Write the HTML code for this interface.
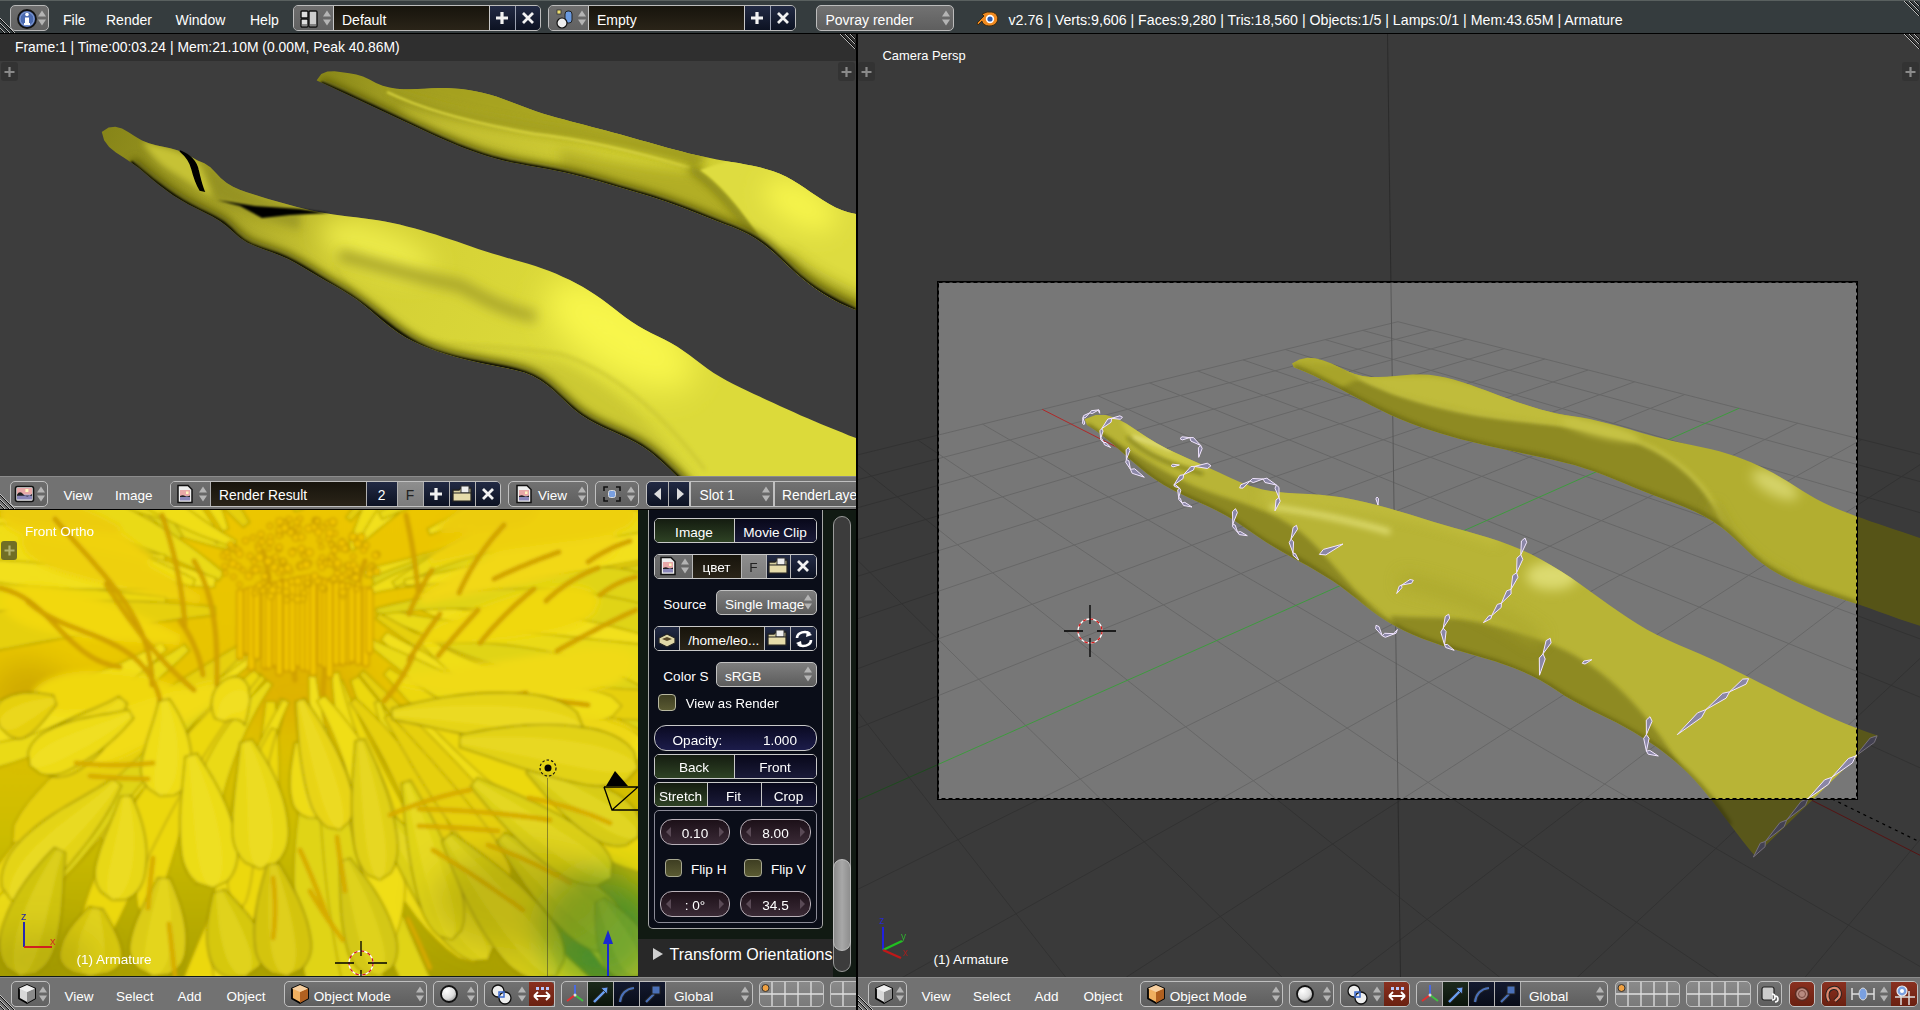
<!DOCTYPE html><html><head><meta charset="utf-8"><style>
*{margin:0;padding:0;box-sizing:border-box}
html,body{width:1920px;height:1010px;overflow:hidden;background:#000;font-family:"Liberation Sans",sans-serif;color:#fff}
.a{position:absolute}
.t{position:absolute;white-space:pre;font-size:14px;line-height:16px;color:#fff}
svg{position:absolute;left:0;top:0}
</style></head><body>
<div class="a" style="left:0;top:0;width:1920px;height:33px;background:#353c3e;border-top:1px solid #59605f"></div>
<div class="a" style="left:0;top:34px;width:856px;height:27px;background:#2f2f2f"></div>
<div class="a" style="left:0;top:61px;width:856px;height:415px;background:#3d3d3d"></div>
<div class="a" style="left:0;top:476px;width:856px;height:33px;background:#727272;border-top:1px solid #8c8c8c"></div>
<div class="a" style="left:0;top:510px;width:856px;height:467px;background:#111a14"></div>
<div class="a" style="left:0;top:977px;width:856px;height:33px;background:#727272;border-top:1px solid #8c8c8c"></div>
<div class="a" style="left:858px;top:34px;width:1062px;height:943px;background:#393939"></div>
<div class="a" style="left:858px;top:977px;width:1062px;height:33px;background:#727272;border-top:1px solid #8c8c8c"></div>
<svg width="856" height="476" viewBox="0 0 856 476" style="left:0;top:0">
<defs><filter id="b1" x="-50%" y="-50%" width="200%" height="200%"><feGaussianBlur stdDeviation="1"/></filter><filter id="b2" x="-50%" y="-50%" width="200%" height="200%"><feGaussianBlur stdDeviation="2"/></filter><filter id="b3" x="-50%" y="-50%" width="200%" height="200%"><feGaussianBlur stdDeviation="3"/></filter><filter id="b4" x="-50%" y="-50%" width="200%" height="200%"><feGaussianBlur stdDeviation="4"/></filter><filter id="b5" x="-50%" y="-50%" width="200%" height="200%"><feGaussianBlur stdDeviation="5"/></filter><filter id="b6" x="-50%" y="-50%" width="200%" height="200%"><feGaussianBlur stdDeviation="6"/></filter><filter id="b8" x="-50%" y="-50%" width="200%" height="200%"><feGaussianBlur stdDeviation="8"/></filter><filter id="b12" x="-50%" y="-50%" width="200%" height="200%"><feGaussianBlur stdDeviation="12"/></filter><filter id="b16" x="-50%" y="-50%" width="200%" height="200%"><feGaussianBlur stdDeviation="16"/></filter><filter id="b24" x="-50%" y="-50%" width="200%" height="200%"><feGaussianBlur stdDeviation="24"/></filter><clipPath id="imgclip"><rect x="0" y="61" width="856" height="415"/></clipPath><clipPath id="cA"><path d="M101.7,131.9 L108.6,127.5 L115.3,126.7 L122.0,128.6 L128.6,132.2 L135.2,136.4 L142.0,140.4 L148.9,143.3 L156.0,145.3 L163.2,146.8 L170.3,148.3 L177.3,150.2 L184.2,153.0 L190.9,156.8 L197.6,160.4 L204.4,163.2 L210.4,167.2 L215.7,172.7 L220.9,178.3 L226.7,182.9 L233.0,186.7 L239.7,189.7 L246.7,192.3 L253.9,194.5 L261.0,196.7 L268.2,198.9 L275.4,201.0 L282.6,203.1 L289.8,205.1 L297.0,206.9 L304.2,208.7 L311.5,210.4 L318.8,211.9 L326.1,213.2 L333.5,214.4 L340.8,215.4 L348.2,216.4 L355.6,217.3 L363.0,218.2 L370.4,219.2 L377.8,220.3 L385.1,221.6 L392.4,223.0 L399.7,224.6 L406.9,226.4 L414.2,228.3 L421.4,230.3 L428.5,232.4 L435.7,234.6 L442.8,236.9 L449.9,239.2 L457.0,241.6 L464.0,244.0 L471.1,246.4 L478.1,248.9 L485.2,251.2 L492.3,253.5 L499.4,255.6 L506.6,257.7 L513.8,259.7 L521.0,261.7 L528.1,263.8 L535.3,266.0 L542.3,268.4 L549.3,271.0 L556.2,273.8 L563.0,276.9 L569.8,280.1 L576.4,283.5 L582.9,287.1 L589.3,291.0 L595.5,295.0 L601.7,299.3 L607.7,303.7 L613.6,308.3 L619.6,312.9 L625.5,317.4 L631.6,321.7 L637.8,325.8 L644.3,329.5 L650.9,333.0 L657.6,336.2 L664.3,339.5 L670.9,343.0 L677.3,346.8 L683.5,350.9 L689.6,355.3 L695.5,359.8 L701.5,364.3 L707.5,368.8 L713.7,372.9 L720.0,376.8 L726.5,380.4 L733.2,383.9 L739.8,387.2 L746.6,390.5 L753.3,393.7 L760.1,396.8 L766.8,400.0 L773.6,403.1 L780.4,406.2 L787.2,409.3 L794.0,412.3 L800.8,415.4 L807.6,418.3 L814.5,421.3 L821.4,424.2 L828.3,427.0 L835.2,429.8 L842.1,432.6 L849.0,435.4 L856.0,438.0 L880.0,448.0 L880.0,500.0 L712.0,500.0 L690.0,488.0 L683.5,482.1 L677.0,476.0 L670.6,469.8 L664.2,463.7 L657.5,457.7 L650.7,452.1 L643.5,447.0 L636.0,442.5 L628.2,438.4 L620.1,434.7 L612.0,431.1 L603.9,427.4 L595.9,423.6 L588.1,419.3 L580.7,414.5 L573.7,409.0 L567.1,403.0 L560.6,396.8 L554.0,390.6 L547.3,384.9 L540.2,379.9 L532.6,375.8 L524.5,372.6 L516.0,370.2 L507.2,368.2 L498.4,366.5 L489.6,364.8 L480.9,363.0 L472.2,361.1 L463.6,359.0 L455.1,356.8 L446.7,354.3 L438.3,351.6 L430.0,348.6 L421.8,345.2 L413.7,341.5 L405.8,337.4 L398.2,332.8 L391.0,327.6 L384.1,322.1 L377.3,316.3 L370.7,310.6 L363.9,304.9 L356.9,299.6 L349.6,294.7 L342.1,290.1 L334.4,285.6 L326.7,281.2 L319.0,276.8 L311.4,272.3 L303.8,267.7 L296.1,263.3 L288.3,259.1 L280.2,255.4 L271.9,252.2 L263.4,249.2 L255.1,246.1 L247.2,242.4 L240.0,237.8 L233.4,232.1 L226.9,226.3 L219.9,221.1 L212.4,216.6 L204.5,212.5 L196.6,208.5 L188.6,204.4 L180.9,200.1 L173.4,195.4 L166.2,190.3 L159.2,184.9 L152.4,179.4 L145.7,173.7 L138.9,168.1 L131.6,162.7 L123.7,157.6 L115.9,152.5 L109.1,146.9 L104.1,140.3 L101.8,132.1 Z"/></clipPath><clipPath id="cB"><path d="M316.9,80.0 L321.3,73.9 L327.4,71.4 L334.5,71.3 L342.0,72.3 L349.3,73.2 L356.3,74.5 L363.0,76.5 L369.5,79.6 L376.0,83.0 L382.7,85.7 L389.4,87.6 L396.3,88.7 L403.4,89.3 L410.5,89.3 L417.7,89.1 L424.9,88.7 L432.2,88.3 L439.5,88.0 L446.7,88.0 L453.9,88.4 L461.1,89.0 L468.3,90.0 L475.3,91.2 L482.4,92.7 L489.3,94.5 L496.2,96.6 L503.0,98.9 L509.7,101.4 L516.4,104.0 L523.0,106.6 L529.7,109.1 L536.5,111.5 L543.3,113.7 L550.2,115.7 L557.1,117.7 L564.1,119.5 L571.0,121.4 L578.0,123.2 L584.9,125.0 L591.9,126.9 L598.8,128.7 L605.8,130.5 L612.7,132.4 L619.7,134.3 L626.6,136.2 L633.5,138.2 L640.4,140.2 L647.3,142.1 L654.2,144.1 L661.1,146.0 L668.0,147.9 L674.9,149.8 L681.9,151.6 L688.8,153.4 L695.8,155.0 L702.8,156.6 L709.9,158.1 L717.0,159.5 L724.1,160.7 L731.2,161.9 L738.3,163.1 L745.4,164.4 L752.5,165.8 L759.4,167.3 L766.3,169.2 L773.1,171.3 L779.7,173.8 L786.2,176.8 L792.5,180.2 L798.6,184.0 L804.7,188.0 L810.7,192.2 L816.8,196.3 L822.9,200.3 L829.1,204.1 L835.5,207.4 L842.0,210.3 L848.9,212.5 L856.0,214.0 L876.0,224.0 L876.0,320.0 L856.0,310.0 L847.7,306.6 L839.6,302.9 L831.8,298.7 L824.2,294.2 L816.9,289.4 L809.7,284.2 L802.8,278.7 L796.0,273.0 L789.5,267.0 L783.0,260.9 L776.5,254.8 L769.8,249.0 L763.0,243.5 L755.8,238.5 L748.2,234.1 L740.4,230.2 L732.3,226.8 L724.0,223.7 L715.7,220.5 L707.4,217.3 L699.2,214.0 L690.9,210.8 L682.7,207.6 L674.4,204.5 L666.1,201.6 L657.7,198.8 L649.3,196.1 L640.8,193.5 L632.4,191.0 L623.9,188.5 L615.4,186.0 L606.9,183.6 L598.4,181.1 L589.8,178.7 L581.3,176.5 L572.7,174.3 L564.1,172.3 L555.4,170.5 L546.7,168.8 L538.0,167.3 L529.3,165.7 L520.6,164.1 L511.9,162.4 L503.3,160.5 L494.8,158.3 L486.3,155.8 L478.0,153.0 L469.6,150.0 L461.4,146.9 L453.2,143.5 L445.0,140.0 L436.9,136.4 L428.8,132.7 L420.8,129.0 L412.8,125.3 L404.8,121.5 L396.8,117.7 L388.8,114.0 L380.8,110.2 L372.8,106.5 L364.8,102.7 L356.8,98.9 L348.8,95.2 L340.8,91.4 L332.8,87.7 L324.8,84.0 L316.8,80.4 Z"/></clipPath><linearGradient id="gA" x1="100" y1="130" x2="560" y2="330" gradientUnits="userSpaceOnUse"><stop offset="0" stop-color="#868418"/><stop offset="0.3" stop-color="#a6a226"/><stop offset="0.55" stop-color="#d2ce34"/><stop offset="1" stop-color="#dcda3a"/></linearGradient><linearGradient id="gB" x1="318" y1="80" x2="600" y2="170" gradientUnits="userSpaceOnUse"><stop offset="0" stop-color="#8a8818"/><stop offset="0.45" stop-color="#b4b02a"/><stop offset="1" stop-color="#d2d034"/></linearGradient></defs>
<g clip-path="url(#imgclip)">
<path d="M316.9,80.0 L321.3,73.9 L327.4,71.4 L334.5,71.3 L342.0,72.3 L349.3,73.2 L356.3,74.5 L363.0,76.5 L369.5,79.6 L376.0,83.0 L382.7,85.7 L389.4,87.6 L396.3,88.7 L403.4,89.3 L410.5,89.3 L417.7,89.1 L424.9,88.7 L432.2,88.3 L439.5,88.0 L446.7,88.0 L453.9,88.4 L461.1,89.0 L468.3,90.0 L475.3,91.2 L482.4,92.7 L489.3,94.5 L496.2,96.6 L503.0,98.9 L509.7,101.4 L516.4,104.0 L523.0,106.6 L529.7,109.1 L536.5,111.5 L543.3,113.7 L550.2,115.7 L557.1,117.7 L564.1,119.5 L571.0,121.4 L578.0,123.2 L584.9,125.0 L591.9,126.9 L598.8,128.7 L605.8,130.5 L612.7,132.4 L619.7,134.3 L626.6,136.2 L633.5,138.2 L640.4,140.2 L647.3,142.1 L654.2,144.1 L661.1,146.0 L668.0,147.9 L674.9,149.8 L681.9,151.6 L688.8,153.4 L695.8,155.0 L702.8,156.6 L709.9,158.1 L717.0,159.5 L724.1,160.7 L731.2,161.9 L738.3,163.1 L745.4,164.4 L752.5,165.8 L759.4,167.3 L766.3,169.2 L773.1,171.3 L779.7,173.8 L786.2,176.8 L792.5,180.2 L798.6,184.0 L804.7,188.0 L810.7,192.2 L816.8,196.3 L822.9,200.3 L829.1,204.1 L835.5,207.4 L842.0,210.3 L848.9,212.5 L856.0,214.0 L876.0,224.0 L876.0,320.0 L856.0,310.0 L847.7,306.6 L839.6,302.9 L831.8,298.7 L824.2,294.2 L816.9,289.4 L809.7,284.2 L802.8,278.7 L796.0,273.0 L789.5,267.0 L783.0,260.9 L776.5,254.8 L769.8,249.0 L763.0,243.5 L755.8,238.5 L748.2,234.1 L740.4,230.2 L732.3,226.8 L724.0,223.7 L715.7,220.5 L707.4,217.3 L699.2,214.0 L690.9,210.8 L682.7,207.6 L674.4,204.5 L666.1,201.6 L657.7,198.8 L649.3,196.1 L640.8,193.5 L632.4,191.0 L623.9,188.5 L615.4,186.0 L606.9,183.6 L598.4,181.1 L589.8,178.7 L581.3,176.5 L572.7,174.3 L564.1,172.3 L555.4,170.5 L546.7,168.8 L538.0,167.3 L529.3,165.7 L520.6,164.1 L511.9,162.4 L503.3,160.5 L494.8,158.3 L486.3,155.8 L478.0,153.0 L469.6,150.0 L461.4,146.9 L453.2,143.5 L445.0,140.0 L436.9,136.4 L428.8,132.7 L420.8,129.0 L412.8,125.3 L404.8,121.5 L396.8,117.7 L388.8,114.0 L380.8,110.2 L372.8,106.5 L364.8,102.7 L356.8,98.9 L348.8,95.2 L340.8,91.4 L332.8,87.7 L324.8,84.0 L316.8,80.4 Z" fill="url(#gB)"/>
<g clip-path="url(#cB)">
<path d="M392,89 C420,100 460,112 520,125 C600,140 650,150 700,170 L720,120 L380,60Z" fill="#a09c1e" filter="url(#b6)" opacity="0.75"/>
<path d="M392,95 C420,106 470,118 534,128 C580,134 640,145 700,160" stroke="#9a961e" stroke-width="9" fill="none" filter="url(#b4)" opacity="0.8"/>
<path d="M387,92 C420,108 472,123 534,134 C570,138 620,147 690,168" stroke="#d6d23e" stroke-width="2.5" fill="none" filter="url(#b1)"/>
<path d="M400,115 C450,130 520,145 600,155" stroke="#d0cc38" stroke-width="10" fill="none" filter="url(#b6)" opacity="0.7"/>
<path d="M560,150 C620,165 680,172 700,172 C720,186 740,210 764,244 L700,240 L560,190Z" fill="#aaa622" filter="url(#b6)" opacity="0.8"/>
<path d="M690,168 C712,182 732,204 758,240" stroke="#6e6c10" stroke-width="7" fill="none" filter="url(#b4)" opacity="0.8"/>
<path d="M700,170 C722,185 742,210 766,246 L800,300 L880,300 L880,200 L760,150Z" fill="#dedc40" filter="url(#b1)"/>
<ellipse cx="800" cy="205" rx="40" ry="20" fill="#f6f44c" filter="url(#b12)" transform="rotate(30 800 205)"/>
<path d="M775,262 C795,282 825,298 870,318" stroke="#8a8818" stroke-width="30" fill="none" filter="url(#b8)" opacity="0.9"/>
<path d="M856.0,310.0 L847.4,306.1 L839.0,302.0 L830.8,297.6 L822.7,293.0 L814.9,288.0 L807.4,282.6 L800.0,276.8 L793.0,270.7 L786.2,264.1 L779.5,257.5 L772.7,251.0 L765.5,245.0 L758.0,239.7 L750.0,235.2 L741.7,231.2 L733.2,227.5 L724.5,224.1 L715.8,220.7 L707.1,217.2 L698.5,213.7 L689.8,210.2 L681.1,206.8 L672.4,203.6 L663.5,200.6 L654.7,197.7 L645.8,195.0 L636.8,192.4 L627.9,189.7 L618.9,187.2 L609.9,184.5 L601.0,181.9 L592.0,179.4 L583.0,176.9 L574.0,174.6 L564.9,172.5 L555.8,170.5 L546.6,168.7 L537.4,167.1 L528.2,165.5 L519.1,163.8 L509.9,161.9 L500.9,159.8 L491.9,157.4 L483.0,154.7 L474.2,151.7 L465.4,148.5 L456.7,145.1 L448.1,141.4 L439.5,137.7 L431.0,133.8 L422.5,129.9 L414.1,125.9 L405.6,121.9 L397.2,117.9 L388.8,113.9 L380.4,109.9 L372.0,105.9 L363.6,102.0 L355.1,98.0 L346.7,94.2 L338.2,90.3 L329.6,86.5 L321.1,82.8" stroke="#5a580a" stroke-width="10" fill="none" filter="url(#b4)"/>
<path d="M856.0,310.0 L847.4,306.1 L839.0,302.0 L830.8,297.6 L822.7,293.0 L814.9,288.0 L807.4,282.6 L800.0,276.8 L793.0,270.7 L786.2,264.1 L779.5,257.5 L772.7,251.0 L765.5,245.0 L758.0,239.7 L750.0,235.2 L741.7,231.2 L733.2,227.5 L724.5,224.1 L715.8,220.7 L707.1,217.2 L698.5,213.7 L689.8,210.2 L681.1,206.8 L672.4,203.6 L663.5,200.6 L654.7,197.7 L645.8,195.0 L636.8,192.4 L627.9,189.7 L618.9,187.2 L609.9,184.5 L601.0,181.9 L592.0,179.4 L583.0,176.9 L574.0,174.6 L564.9,172.5 L555.8,170.5 L546.6,168.7 L537.4,167.1 L528.2,165.5 L519.1,163.8 L509.9,161.9 L500.9,159.8 L491.9,157.4 L483.0,154.7 L474.2,151.7 L465.4,148.5 L456.7,145.1 L448.1,141.4 L439.5,137.7 L431.0,133.8 L422.5,129.9 L414.1,125.9 L405.6,121.9 L397.2,117.9 L388.8,113.9 L380.4,109.9 L372.0,105.9 L363.6,102.0 L355.1,98.0 L346.7,94.2 L338.2,90.3 L329.6,86.5 L321.1,82.8" stroke="#000" stroke-width="3" fill="none" filter="url(#b1)"/>
</g>
<path d="M101.7,131.9 L108.6,127.5 L115.3,126.7 L122.0,128.6 L128.6,132.2 L135.2,136.4 L142.0,140.4 L148.9,143.3 L156.0,145.3 L163.2,146.8 L170.3,148.3 L177.3,150.2 L184.2,153.0 L190.9,156.8 L197.6,160.4 L204.4,163.2 L210.4,167.2 L215.7,172.7 L220.9,178.3 L226.7,182.9 L233.0,186.7 L239.7,189.7 L246.7,192.3 L253.9,194.5 L261.0,196.7 L268.2,198.9 L275.4,201.0 L282.6,203.1 L289.8,205.1 L297.0,206.9 L304.2,208.7 L311.5,210.4 L318.8,211.9 L326.1,213.2 L333.5,214.4 L340.8,215.4 L348.2,216.4 L355.6,217.3 L363.0,218.2 L370.4,219.2 L377.8,220.3 L385.1,221.6 L392.4,223.0 L399.7,224.6 L406.9,226.4 L414.2,228.3 L421.4,230.3 L428.5,232.4 L435.7,234.6 L442.8,236.9 L449.9,239.2 L457.0,241.6 L464.0,244.0 L471.1,246.4 L478.1,248.9 L485.2,251.2 L492.3,253.5 L499.4,255.6 L506.6,257.7 L513.8,259.7 L521.0,261.7 L528.1,263.8 L535.3,266.0 L542.3,268.4 L549.3,271.0 L556.2,273.8 L563.0,276.9 L569.8,280.1 L576.4,283.5 L582.9,287.1 L589.3,291.0 L595.5,295.0 L601.7,299.3 L607.7,303.7 L613.6,308.3 L619.6,312.9 L625.5,317.4 L631.6,321.7 L637.8,325.8 L644.3,329.5 L650.9,333.0 L657.6,336.2 L664.3,339.5 L670.9,343.0 L677.3,346.8 L683.5,350.9 L689.6,355.3 L695.5,359.8 L701.5,364.3 L707.5,368.8 L713.7,372.9 L720.0,376.8 L726.5,380.4 L733.2,383.9 L739.8,387.2 L746.6,390.5 L753.3,393.7 L760.1,396.8 L766.8,400.0 L773.6,403.1 L780.4,406.2 L787.2,409.3 L794.0,412.3 L800.8,415.4 L807.6,418.3 L814.5,421.3 L821.4,424.2 L828.3,427.0 L835.2,429.8 L842.1,432.6 L849.0,435.4 L856.0,438.0 L880.0,448.0 L880.0,500.0 L712.0,500.0 L690.0,488.0 L683.5,482.1 L677.0,476.0 L670.6,469.8 L664.2,463.7 L657.5,457.7 L650.7,452.1 L643.5,447.0 L636.0,442.5 L628.2,438.4 L620.1,434.7 L612.0,431.1 L603.9,427.4 L595.9,423.6 L588.1,419.3 L580.7,414.5 L573.7,409.0 L567.1,403.0 L560.6,396.8 L554.0,390.6 L547.3,384.9 L540.2,379.9 L532.6,375.8 L524.5,372.6 L516.0,370.2 L507.2,368.2 L498.4,366.5 L489.6,364.8 L480.9,363.0 L472.2,361.1 L463.6,359.0 L455.1,356.8 L446.7,354.3 L438.3,351.6 L430.0,348.6 L421.8,345.2 L413.7,341.5 L405.8,337.4 L398.2,332.8 L391.0,327.6 L384.1,322.1 L377.3,316.3 L370.7,310.6 L363.9,304.9 L356.9,299.6 L349.6,294.7 L342.1,290.1 L334.4,285.6 L326.7,281.2 L319.0,276.8 L311.4,272.3 L303.8,267.7 L296.1,263.3 L288.3,259.1 L280.2,255.4 L271.9,252.2 L263.4,249.2 L255.1,246.1 L247.2,242.4 L240.0,237.8 L233.4,232.1 L226.9,226.3 L219.9,221.1 L212.4,216.6 L204.5,212.5 L196.6,208.5 L188.6,204.4 L180.9,200.1 L173.4,195.4 L166.2,190.3 L159.2,184.9 L152.4,179.4 L145.7,173.7 L138.9,168.1 L131.6,162.7 L123.7,157.6 L115.9,152.5 L109.1,146.9 L104.1,140.3 L101.8,132.1 Z" fill="url(#gA)"/>
<g clip-path="url(#cA)">
<path d="M142,141 C160,146 180,150 196,160 C205,170 210,185 214,198 C200,190 185,180 172,172 C160,165 150,155 142,141Z" fill="#c6c236" filter="url(#b3)"/>
<path d="M205,165 C225,178 240,190 270,200 L300,208 L300,230 C270,222 240,210 215,198Z" fill="#8c8a22" filter="url(#b4)" opacity="0.6"/>
<ellipse cx="378" cy="249" rx="60" ry="22" fill="#ecea48" filter="url(#b12)" transform="rotate(20 378 249)"/>
<path d="M339,255 C380,266 420,278 458,285 C480,295 497,309 537,317" stroke="#a8a42a" stroke-width="12" fill="none" filter="url(#b6)"/>
<ellipse cx="620" cy="335" rx="85" ry="38" fill="#f8f64c" filter="url(#b16)" transform="rotate(32 620 335)"/>
<path d="M335,267 C350,290 365,308 380,313 C400,330 415,340 428,343 C460,345 500,346 560,354 C610,370 660,410 705,470" stroke="#c8c432" stroke-width="2.5" fill="none" filter="url(#b2)"/>
<path d="M428,350 C470,352 520,355 560,362 C610,380 650,420 690,476 L600,476 L420,380Z" fill="#b8b42c" filter="url(#b6)" opacity="0.45"/>
<path d="M690.0,488.0 L683.2,481.8 L676.5,475.4 L669.8,469.0 L663.0,462.6 L656.0,456.5 L648.8,450.8 L641.3,445.6 L633.3,441.0 L625.1,436.9 L616.6,433.0 L608.2,429.3 L599.7,425.4 L591.5,421.2 L583.6,416.4 L576.1,411.0 L569.0,404.9 L562.1,398.5 L555.2,392.1 L548.2,386.0 L540.9,380.6 L533.2,376.1 L524.9,372.7 L516.2,370.0 L507.1,367.8 L498.0,366.0 L488.7,364.3 L479.4,362.5 L470.2,360.7 L461.0,358.7 L451.9,356.5 L443.0,354.0 L434.3,351.1 L425.8,347.7 L417.6,343.8 L409.6,339.3 L402.0,334.3 L394.5,328.9 L387.1,323.3 L379.8,317.6 L372.5,311.8 L365.2,306.2 L357.7,300.8 L350.1,295.6 L342.3,290.7 L334.4,286.0 L326.5,281.3 L318.7,276.5 L310.8,271.6 L302.9,266.8 L294.9,262.2 L286.6,258.0 L278.0,254.5 L269.0,251.4 L260.1,248.5 L251.5,245.2 L243.6,240.9 L236.6,235.2 L230.1,228.7 L223.2,222.7 L215.4,218.0 L207.1,213.9 L198.7,209.9 L190.5,205.6 L182.5,201.0 L174.7,196.0 L167.1,190.8 L159.7,185.3 L152.3,179.6 L145.2,173.8 L138.0,167.9 L131.0,162.0" stroke="#5a580a" stroke-width="12" fill="none" filter="url(#b4)"/>
<path d="M690.0,488.0 L683.2,481.8 L676.5,475.4 L669.8,469.0 L663.0,462.6 L656.0,456.5 L648.8,450.8 L641.3,445.6 L633.3,441.0 L625.1,436.9 L616.6,433.0 L608.2,429.3 L599.7,425.4 L591.5,421.2 L583.6,416.4 L576.1,411.0 L569.0,404.9 L562.1,398.5 L555.2,392.1 L548.2,386.0 L540.9,380.6 L533.2,376.1 L524.9,372.7 L516.2,370.0 L507.1,367.8 L498.0,366.0 L488.7,364.3 L479.4,362.5 L470.2,360.7 L461.0,358.7 L451.9,356.5 L443.0,354.0 L434.3,351.1 L425.8,347.7 L417.6,343.8 L409.6,339.3 L402.0,334.3 L394.5,328.9 L387.1,323.3 L379.8,317.6 L372.5,311.8 L365.2,306.2 L357.7,300.8 L350.1,295.6 L342.3,290.7 L334.4,286.0 L326.5,281.3 L318.7,276.5 L310.8,271.6 L302.9,266.8 L294.9,262.2 L286.6,258.0 L278.0,254.5 L269.0,251.4 L260.1,248.5 L251.5,245.2 L243.6,240.9 L236.6,235.2 L230.1,228.7 L223.2,222.7 L215.4,218.0 L207.1,213.9 L198.7,209.9 L190.5,205.6 L182.5,201.0 L174.7,196.0 L167.1,190.8 L159.7,185.3 L152.3,179.6 L145.2,173.8 L138.0,167.9 L131.0,162.0" stroke="#000" stroke-width="3" fill="none" filter="url(#b1)"/>
</g>
<path d="M180,151 C190,155 196,161 198,170 C200,178 201,184 204,191 L200,190 C196,183 194,177 192,169 C190,161 186,156 180,151Z" fill="#000" stroke="#000" stroke-width="1.5"/>
<path d="M217,200 L240,206 L262,218 L290,215 L330,213 L300,209 L255,206 Z" fill="#000" filter="url(#b1)"/>
</g></svg>
<svg width="638" height="466" viewBox="0 510 638 466" style="left:0;top:510px">
<defs><linearGradient id="dbg" x1="0" y1="510" x2="0" y2="976" gradientUnits="userSpaceOnUse"><stop offset="0" stop-color="#ecc600"/><stop offset="0.4" stop-color="#e6c400"/><stop offset="0.7" stop-color="#ccbc00"/><stop offset="1" stop-color="#aaa000"/></linearGradient><filter id="dsoft" x="0" y="0" width="100%" height="100%"><feGaussianBlur stdDeviation="0.8"/></filter></defs>
<g filter="url(#dsoft)">
<rect x="-20" y="490" width="680" height="506" fill="url(#dbg)"/>
<g filter="url(#b16)">
<ellipse cx="540" cy="600" rx="110" ry="70" fill="#f0d410" opacity="0.8"/>
<ellipse cx="80" cy="600" rx="90" ry="60" fill="#eccc08" opacity="0.7"/>
<ellipse cx="30" cy="700" rx="40" ry="40" fill="#c09800" opacity="0.6"/>
<ellipse cx="300" cy="690" rx="70" ry="40" fill="#d8a800" opacity="0.6"/>
<ellipse cx="600" cy="940" rx="55" ry="50" fill="#3a8a30" opacity="0.6"/>
<ellipse cx="560" cy="860" rx="60" ry="40" fill="#7a8010" opacity="0.4"/>
</g>
<g filter="url(#b1)">
<path d="M357.8,469.5 L361.2,454.3 L364.9,439.3 L369.0,424.5 L373.2,409.8 L377.8,395.3 L382.6,381.0 L387.7,366.8 L393.0,352.8 L398.5,339.0 L404.2,325.2 L410.2,311.6 L416.4,298.2 L422.8,284.8 L429.4,271.5 L436.2,258.4 L443.2,245.3 L450.4,232.3 L457.6,219.2 L464.8,206.0 L472.0,192.6 L478.9,179.0 L485.3,164.8 L487.7,147.2 L487.7,147.2 L471.5,154.7 L459.9,165.8 L449.4,177.7 L439.8,190.2 L430.9,203.1 L422.7,216.4 L415.1,230.1 L407.9,243.9 L401.2,257.9 L394.9,272.1 L389.1,286.5 L383.6,301.0 L378.6,315.7 L374.1,330.4 L369.9,345.4 L366.2,360.4 L362.8,375.6 L359.9,390.8 L357.4,406.2 L355.2,421.7 L353.4,437.2 L351.9,452.8 L350.8,468.6Z" fill="#ecd80e" stroke="#a89400" stroke-width="1.1"/>
<path d="M365.4,576.6 L381.7,575.8 L397.9,574.6 L414.1,573.0 L430.1,571.0 L446.0,568.5 L461.8,565.7 L477.5,562.4 L493.1,558.6 L508.6,554.4 L523.9,549.7 L539.0,544.6 L554.0,538.9 L568.8,532.8 L583.5,526.2 L597.9,519.1 L612.1,511.6 L626.1,503.5 L639.8,494.8 L653.0,485.3 L665.7,475.0 L677.8,463.8 L688.9,451.4 L695.9,433.9 L695.9,433.9 L677.4,436.4 L662.7,443.1 L648.7,450.4 L635.0,457.9 L621.6,465.5 L608.2,473.1 L594.9,480.7 L581.6,488.1 L568.2,495.2 L554.6,502.1 L540.9,508.8 L527.2,515.3 L513.2,521.5 L499.2,527.4 L484.9,533.1 L470.5,538.6 L456.0,543.8 L441.2,548.7 L426.3,553.4 L411.1,557.7 L395.8,561.8 L380.2,565.5 L364.5,568.9Z" fill="#f0de14" stroke="#a89400" stroke-width="1.1"/>
<path d="M249.6,522.4 L244.5,513.7 L239.4,505.1 L234.3,496.5 L229.3,487.9 L224.3,479.3 L219.2,470.7 L214.2,462.1 L209.1,453.5 L204.0,445.0 L198.9,436.6 L193.7,428.1 L188.5,419.7 L183.2,411.4 L177.9,403.1 L172.5,394.8 L167.0,386.6 L161.5,378.5 L155.6,370.5 L149.4,362.8 L142.8,355.3 L135.6,348.2 L127.3,341.8 L113.9,338.6 L113.9,338.6 L111.1,352.2 L113.6,362.5 L117.3,372.0 L121.6,381.2 L126.4,390.1 L131.6,398.6 L137.3,406.9 L143.0,415.1 L148.9,423.2 L155.0,431.2 L161.2,439.1 L167.5,446.9 L173.9,454.6 L180.5,462.2 L187.1,469.7 L193.9,477.2 L200.7,484.5 L207.7,491.8 L214.7,499.0 L221.8,506.2 L228.9,513.3 L236.1,520.3 L243.4,527.3Z" fill="#e6d00a" stroke="#a89400" stroke-width="1.1"/>
<path d="M329.9,453.9 L335.8,439.5 L341.5,425.0 L347.1,410.5 L352.4,395.9 L357.6,381.2 L362.6,366.4 L367.3,351.6 L371.7,336.7 L375.9,321.8 L379.9,306.7 L383.5,291.6 L386.9,276.4 L390.0,261.2 L392.7,245.9 L395.2,230.5 L397.3,215.1 L399.1,199.6 L400.3,184.1 L400.7,168.5 L400.2,152.8 L398.6,137.1 L395.3,121.3 L384.0,105.1 L384.0,105.1 L370.9,119.8 L365.5,134.7 L361.6,149.6 L358.5,164.6 L355.9,179.5 L353.8,194.5 L352.0,209.5 L350.2,224.5 L348.5,239.5 L346.7,254.5 L345.0,269.5 L343.2,284.5 L341.5,299.6 L339.6,314.6 L337.8,329.7 L335.9,344.8 L334.0,359.9 L331.9,375.1 L329.8,390.2 L327.6,405.4 L325.3,420.6 L322.8,435.8 L320.2,451.1Z" fill="#f2e01a" stroke="#a89400" stroke-width="1.1"/>
<path d="M236.2,545.3 L222.5,540.4 L209.2,535.0 L196.2,529.3 L183.6,523.3 L171.5,516.9 L159.6,510.2 L148.1,503.2 L137.0,495.9 L126.2,488.3 L115.7,480.3 L105.5,472.1 L95.6,463.6 L86.0,454.8 L76.7,445.6 L67.6,436.2 L58.7,426.4 L50.1,416.3 L41.5,406.0 L33.0,395.5 L24.4,384.8 L15.6,373.9 L6.2,362.9 L-7.0,353.5 L-7.0,353.5 L-6.2,369.9 L-1.0,383.9 L5.5,397.2 L12.8,409.8 L20.8,421.8 L29.5,433.2 L38.7,444.1 L48.4,454.5 L58.5,464.3 L68.9,473.7 L79.7,482.6 L90.9,491.0 L102.5,498.9 L114.3,506.3 L126.5,513.2 L139.1,519.6 L151.9,525.5 L165.0,530.9 L178.4,535.8 L192.0,540.3 L206.0,544.3 L220.2,547.9 L234.7,551.0Z" fill="#eada12" stroke="#a89400" stroke-width="1.1"/>
<path d="M309.0,493.5 L313.0,477.2 L316.9,460.9 L320.6,444.5 L324.1,428.1 L327.3,411.7 L330.3,395.2 L333.1,378.7 L335.6,362.1 L337.8,345.5 L339.8,328.9 L341.5,312.2 L342.9,295.5 L344.0,278.8 L344.8,262.1 L345.3,245.3 L345.5,228.5 L345.4,211.8 L344.7,195.0 L343.3,178.2 L341.2,161.5 L338.1,144.8 L333.7,128.3 L322.8,112.3 L322.8,112.3 L314.3,129.6 L311.9,146.3 L310.5,162.9 L309.7,179.4 L309.3,195.8 L309.2,212.2 L309.3,228.6 L309.4,245.0 L309.4,261.4 L309.4,277.8 L309.3,294.1 L309.1,310.5 L308.9,326.9 L308.6,343.4 L308.2,359.8 L307.8,376.3 L307.2,392.7 L306.5,409.3 L305.7,425.8 L304.8,442.3 L303.7,458.9 L302.5,475.5 L301.1,492.1Z" fill="#e0d414" stroke="#a89400" stroke-width="1.1"/>
<path d="M303.3,508.9 L302.6,501.1 L302.0,493.4 L301.6,485.8 L301.4,478.2 L301.4,470.7 L301.5,463.3 L301.7,456.0 L302.0,448.7 L302.4,441.6 L302.8,434.4 L303.4,427.3 L304.0,420.3 L304.7,413.3 L305.4,406.3 L306.1,399.3 L306.9,392.3 L307.7,385.2 L308.3,378.1 L308.5,370.9 L308.3,363.5 L307.6,355.8 L305.7,347.7 L297.4,337.5 L297.4,337.5 L285.1,342.4 L279.5,349.3 L275.4,356.7 L272.3,364.3 L269.9,372.1 L268.3,380.1 L267.4,388.1 L266.8,396.1 L266.5,404.1 L266.6,412.2 L267.0,420.2 L267.8,428.1 L268.9,436.1 L270.3,443.9 L272.0,451.7 L274.0,459.5 L276.2,467.2 L278.8,474.7 L281.6,482.3 L284.6,489.7 L287.8,497.0 L291.3,504.3 L294.9,511.5Z" fill="#ecd80e" stroke="#a89400" stroke-width="1.1"/>
<path d="M222.1,539.4 L218.3,532.5 L214.2,525.7 L210.0,519.1 L205.6,512.6 L201.0,506.2 L196.3,500.0 L191.3,494.0 L186.1,488.2 L180.7,482.5 L175.1,477.1 L169.3,471.9 L163.3,466.9 L157.1,462.1 L150.7,457.6 L144.1,453.3 L137.3,449.3 L130.4,445.6 L123.2,442.3 L115.7,439.6 L107.9,437.5 L99.9,436.1 L91.5,435.9 L81.5,440.6 L81.5,440.6 L86.2,450.5 L92.2,455.7 L98.4,460.1 L104.5,464.1 L110.8,467.8 L117.0,471.3 L123.2,474.7 L129.4,478.1 L135.6,481.6 L141.7,485.2 L147.7,488.9 L153.7,492.7 L159.7,496.5 L165.6,500.5 L171.5,504.6 L177.3,508.9 L183.2,513.2 L188.9,517.8 L194.7,522.5 L200.3,527.4 L206.0,532.5 L211.5,537.7 L217.0,543.2Z" fill="#f0de14" stroke="#a89400" stroke-width="1.1"/>
<path d="M210.3,493.7 L206.1,481.0 L201.7,468.5 L197.0,456.2 L191.9,444.1 L186.4,432.2 L180.6,420.5 L174.4,409.0 L167.8,397.8 L160.8,386.8 L153.4,376.1 L145.6,365.7 L137.4,355.6 L128.9,345.7 L119.9,336.3 L110.5,327.1 L100.8,318.3 L90.7,309.8 L80.1,302.0 L68.9,294.8 L57.1,288.5 L44.7,283.1 L31.4,279.1 L14.8,281.3 L14.8,281.3 L20.7,296.9 L29.5,306.7 L38.6,315.6 L47.8,323.9 L57.0,332.0 L66.3,339.9 L75.5,347.6 L84.6,355.5 L93.5,363.5 L102.3,371.7 L110.9,380.0 L119.4,388.5 L127.8,397.1 L136.0,406.0 L144.0,415.1 L151.9,424.4 L159.7,433.9 L167.3,443.8 L174.7,453.8 L181.9,464.2 L189.0,474.9 L195.8,485.8 L202.4,497.1Z" fill="#e6d00a" stroke="#a89400" stroke-width="1.1"/>
<path d="M356.7,547.2 L366.7,539.1 L376.7,531.0 L386.7,522.9 L396.7,514.7 L406.6,506.4 L416.5,498.1 L426.3,489.8 L436.0,481.3 L445.7,472.8 L455.2,464.2 L464.7,455.6 L474.0,446.8 L483.3,437.9 L492.5,428.9 L501.5,419.8 L510.4,410.6 L519.2,401.3 L527.6,391.6 L535.6,381.5 L543.1,371.0 L550.0,359.8 L555.7,347.7 L556.0,330.4 L556.0,330.4 L538.8,331.8 L527.0,338.3 L516.4,345.9 L506.3,354.0 L496.8,362.6 L487.7,371.5 L478.9,380.8 L470.2,390.2 L461.6,399.7 L453.2,409.3 L444.8,419.0 L436.5,428.8 L428.4,438.7 L420.3,448.6 L412.2,458.7 L404.3,468.8 L396.4,478.9 L388.6,489.1 L380.8,499.4 L373.0,509.7 L365.3,520.0 L357.5,530.3 L349.8,540.6Z" fill="#f2e01a" stroke="#a89400" stroke-width="1.1"/>
<path d="M253.3,491.3 L250.2,483.8 L247.2,476.4 L244.3,468.9 L241.4,461.4 L238.6,453.9 L235.7,446.5 L232.9,439.0 L230.2,431.6 L227.4,424.2 L224.6,416.8 L221.8,409.5 L219.0,402.1 L216.2,394.8 L213.3,387.5 L210.4,380.2 L207.5,372.9 L204.5,365.7 L201.2,358.5 L197.6,351.5 L193.7,344.6 L189.1,337.8 L183.5,331.4 L172.7,326.7 L172.7,326.7 L167.1,337.2 L167.0,345.8 L167.9,354.1 L169.6,362.2 L171.8,370.1 L174.5,377.8 L177.5,385.4 L180.8,392.8 L184.2,400.2 L187.9,407.5 L191.6,414.7 L195.6,421.8 L199.6,428.9 L203.9,435.8 L208.2,442.7 L212.8,449.5 L217.4,456.2 L222.1,462.9 L227.0,469.4 L231.9,475.9 L236.9,482.3 L242.0,488.7 L247.2,495.0Z" fill="#eada12" stroke="#a89400" stroke-width="1.1"/>
<path d="M182.7,535.9 L176.0,525.4 L169.0,515.3 L161.6,505.5 L154.0,496.1 L146.0,487.0 L137.7,478.3 L129.1,470.1 L120.2,462.2 L110.9,454.8 L101.2,447.9 L91.3,441.4 L81.0,435.4 L70.4,430.0 L59.5,425.0 L48.3,420.6 L36.9,416.8 L25.2,413.5 L13.3,411.1 L1.0,409.6 L-11.4,409.0 L-24.0,409.8 L-36.7,412.2 L-49.7,421.6 L-49.7,421.6 L-38.2,432.3 L-27.0,437.0 L-16.0,440.7 L-5.2,444.0 L5.3,447.0 L15.7,450.0 L26.0,452.9 L36.1,456.0 L46.1,459.4 L55.9,463.1 L65.7,467.0 L75.3,471.2 L84.9,475.7 L94.4,480.5 L103.8,485.6 L113.1,491.2 L122.4,497.0 L131.6,503.3 L140.7,510.0 L149.7,517.1 L158.7,524.6 L167.5,532.6 L176.2,541.1Z" fill="#e0d414" stroke="#a89400" stroke-width="1.1"/>
<path d="M343.1,485.5 L344.6,470.8 L346.6,456.3 L348.9,442.0 L351.5,427.9 L354.5,413.9 L357.8,400.2 L361.4,386.7 L365.3,373.3 L369.5,360.1 L374.0,347.1 L378.7,334.2 L383.7,321.4 L389.0,308.8 L394.5,296.2 L400.3,283.8 L406.3,271.5 L412.6,259.2 L419.0,246.8 L425.3,234.3 L431.6,221.6 L437.8,208.6 L443.4,194.9 L444.7,177.5 L444.7,177.5 L428.3,183.9 L417.0,194.3 L406.9,205.7 L397.8,217.6 L389.5,230.0 L382.0,242.9 L375.2,256.0 L368.9,269.4 L363.2,282.9 L358.0,296.6 L353.3,310.5 L349.1,324.5 L345.5,338.7 L342.3,353.0 L339.7,367.4 L337.5,381.8 L335.9,396.4 L334.7,411.1 L333.9,425.8 L333.7,440.6 L333.8,455.5 L334.4,470.5 L335.4,485.5Z" fill="#ecd80e" stroke="#a89400" stroke-width="1.1"/>
<path d="M228.5,528.9 L225.8,520.0 L222.9,511.2 L219.6,502.7 L216.1,494.3 L212.3,486.1 L208.1,478.2 L203.7,470.4 L198.9,462.9 L193.7,455.6 L188.3,448.6 L182.5,441.9 L176.3,435.4 L169.9,429.2 L163.1,423.4 L156.0,417.9 L148.6,412.7 L140.9,407.9 L132.8,403.6 L124.3,400.0 L115.4,397.1 L106.2,395.0 L96.5,394.2 L85.1,398.7 L85.1,398.7 L90.8,409.4 L97.7,415.3 L104.7,420.4 L111.6,425.0 L118.5,429.5 L125.3,433.8 L132.0,438.1 L138.6,442.4 L145.0,446.9 L151.3,451.5 L157.5,456.3 L163.6,461.3 L169.5,466.4 L175.4,471.8 L181.1,477.4 L186.7,483.2 L192.2,489.2 L197.6,495.6 L202.8,502.2 L208.0,509.0 L212.9,516.2 L217.7,523.7 L222.3,531.4Z" fill="#f0de14" stroke="#a89400" stroke-width="1.1"/>
<path d="M350.7,521.3 L361.9,509.4 L373.0,497.3 L383.8,485.0 L394.4,472.6 L404.9,460.0 L415.1,447.3 L425.1,434.4 L434.9,421.3 L444.4,408.1 L453.7,394.7 L462.8,381.1 L471.6,367.4 L480.1,353.5 L488.4,339.4 L496.4,325.2 L504.1,310.8 L511.5,296.2 L518.5,281.4 L524.9,266.3 L530.7,250.9 L535.8,235.2 L539.8,219.1 L539.0,201.0 L539.0,201.0 L525.7,213.1 L516.8,226.9 L508.7,240.9 L500.9,255.0 L493.4,269.2 L486.0,283.4 L478.7,297.6 L471.4,311.8 L463.9,325.9 L456.4,339.9 L448.7,353.9 L440.9,367.8 L433.0,381.7 L425.0,395.6 L416.9,409.3 L408.6,423.1 L400.1,436.7 L391.5,450.3 L382.8,463.9 L373.8,477.4 L364.7,490.8 L355.4,504.1 L345.9,517.3Z" fill="#e6d00a" stroke="#a89400" stroke-width="1.1"/>
<path d="M430.0,534.8 L445.5,529.0 L460.9,523.1 L476.3,517.1 L491.6,511.0 L506.9,504.8 L522.2,498.4 L537.4,491.9 L552.5,485.3 L567.5,478.5 L582.5,471.5 L597.4,464.4 L612.2,457.1 L627.0,449.6 L641.6,442.0 L656.2,434.2 L670.6,426.3 L685.0,418.1 L699.2,409.6 L713.1,400.6 L726.7,391.2 L740.0,381.3 L752.7,370.4 L762.7,355.1 L762.7,355.1 L744.6,357.2 L729.2,363.3 L714.2,370.2 L699.5,377.6 L685.1,385.2 L670.7,393.0 L656.5,401.1 L642.2,409.2 L628.0,417.3 L613.8,425.3 L599.6,433.4 L585.4,441.5 L571.1,449.6 L556.9,457.7 L542.6,465.7 L528.3,473.8 L514.0,481.8 L499.7,489.8 L485.3,497.7 L470.9,505.6 L456.5,513.5 L441.9,521.3 L427.4,529.0Z" fill="#f2e01a" stroke="#a89400" stroke-width="1.1"/>
<path d="M182.8,513.4 L170.7,507.7 L158.8,501.8 L147.2,495.6 L135.8,489.2 L124.7,482.6 L113.8,475.9 L103.1,468.9 L92.7,461.9 L82.4,454.6 L72.3,447.3 L62.4,439.7 L52.7,432.1 L43.0,424.3 L33.5,416.4 L24.1,408.3 L14.8,400.1 L5.6,391.7 L-3.8,383.4 L-13.4,375.2 L-23.4,367.2 L-34.0,359.4 L-45.6,352.1 L-63.0,349.2 L-63.0,349.2 L-63.6,367.1 L-57.8,380.2 L-50.6,392.2 L-42.5,403.3 L-33.6,413.8 L-24.1,423.6 L-14.1,432.8 L-3.7,441.5 L7.0,449.8 L17.9,457.7 L29.2,465.1 L40.7,472.2 L52.4,478.8 L64.3,484.9 L76.5,490.7 L88.9,496.0 L101.4,500.9 L114.1,505.5 L127.0,509.6 L140.0,513.4 L153.2,516.8 L166.5,519.9 L179.9,522.6Z" fill="#eada12" stroke="#a89400" stroke-width="1.1"/>
<path d="M352.9,496.9 L357.9,486.8 L363.0,476.8 L368.1,466.9 L373.3,457.0 L378.5,447.1 L383.8,437.3 L389.0,427.5 L394.3,417.7 L399.5,407.9 L404.8,398.2 L410.0,388.4 L415.2,378.7 L420.5,368.9 L425.7,359.2 L430.8,349.4 L436.0,339.6 L441.1,329.8 L446.0,319.9 L450.6,309.8 L454.8,299.5 L458.6,289.0 L461.6,277.9 L460.1,264.1 L460.1,264.1 L447.3,269.6 L439.2,278.0 L432.1,286.9 L425.6,296.2 L419.5,305.7 L413.9,315.5 L408.7,325.5 L403.6,335.6 L398.7,345.7 L394.0,356.0 L389.5,366.3 L385.1,376.7 L380.9,387.1 L376.9,397.7 L373.0,408.2 L369.2,418.9 L365.6,429.6 L362.2,440.3 L358.8,451.1 L355.6,461.9 L352.5,472.7 L349.5,483.6 L346.6,494.5Z" fill="#e0d414" stroke="#a89400" stroke-width="1.1"/>
<path d="M161.5,579.8 L149.7,576.6 L138.0,573.5 L126.2,570.5 L114.4,567.6 L102.6,564.7 L90.8,561.9 L78.9,559.3 L67.0,556.7 L55.1,554.3 L43.2,552.1 L31.2,549.9 L19.3,547.9 L7.3,546.1 L-4.8,544.4 L-16.8,542.8 L-28.9,541.5 L-40.9,540.3 L-53.0,539.5 L-65.2,539.2 L-77.4,539.4 L-89.6,540.3 L-102.0,542.4 L-114.7,550.2 L-114.7,550.2 L-103.3,559.8 L-91.6,563.8 L-79.7,566.7 L-67.9,569.1 L-56.0,571.0 L-44.1,572.5 L-32.1,573.7 L-20.2,574.8 L-8.2,575.9 L3.7,576.9 L15.7,577.8 L27.7,578.7 L39.7,579.5 L51.7,580.3 L63.8,581.1 L75.8,581.8 L87.8,582.5 L99.9,583.2 L112.0,583.9 L124.0,584.6 L136.1,585.3 L148.2,586.0 L160.3,586.8Z" fill="#ecd80e" stroke="#a89400" stroke-width="1.1"/>
<path d="M354.1,550.4 L359.5,539.7 L365.2,529.3 L371.2,519.3 L377.4,509.7 L383.8,500.5 L390.5,491.5 L397.3,482.9 L404.4,474.7 L411.7,466.7 L419.1,459.0 L426.8,451.6 L434.7,444.5 L442.8,437.7 L451.1,431.0 L459.6,424.6 L468.3,418.4 L477.3,412.4 L486.4,406.5 L495.7,400.4 L505.1,394.3 L514.6,387.9 L524.3,380.8 L532.6,369.3 L532.6,369.3 L518.5,366.7 L506.2,369.1 L494.4,372.7 L483.1,377.3 L472.3,382.6 L462.0,388.5 L452.1,395.1 L442.6,402.1 L433.5,409.5 L424.8,417.2 L416.5,425.4 L408.6,433.9 L401.1,442.8 L394.0,452.0 L387.3,461.6 L381.0,471.4 L375.2,481.6 L369.8,492.0 L364.7,502.7 L360.0,513.7 L355.7,525.0 L351.8,536.4 L348.2,548.2Z" fill="#f0de14" stroke="#a89400" stroke-width="1.1"/>
<path d="M422.4,592.1 L434.1,592.8 L445.9,593.4 L457.7,594.0 L469.5,594.4 L481.3,594.9 L493.0,595.2 L504.8,595.4 L516.6,595.5 L528.3,595.5 L540.1,595.3 L551.8,595.0 L563.6,594.5 L575.3,593.9 L587.0,593.1 L598.7,592.1 L610.3,591.0 L622.0,589.6 L633.5,587.8 L645.0,585.4 L656.5,582.2 L667.8,578.2 L678.9,572.7 L689.0,559.7 L689.0,559.7 L676.0,549.6 L663.9,547.0 L652.1,545.8 L640.3,545.4 L628.6,545.7 L617.0,546.6 L605.5,547.8 L593.9,549.3 L582.4,550.9 L570.9,552.6 L559.4,554.4 L547.9,556.3 L536.4,558.4 L524.9,560.5 L513.4,562.8 L501.9,565.1 L490.5,567.5 L479.0,569.9 L467.5,572.4 L456.1,574.9 L444.6,577.5 L433.1,580.1 L421.6,582.6Z" fill="#e6d00a" stroke="#a89400" stroke-width="1.1"/>
<path d="M248.1,494.2 L240.9,481.8 L233.8,469.3 L226.9,456.8 L220.1,444.3 L213.5,431.7 L206.9,419.2 L200.5,406.6 L194.2,393.9 L187.9,381.3 L181.7,368.7 L175.6,356.0 L169.6,343.3 L163.6,330.6 L157.6,317.9 L151.7,305.2 L145.9,292.5 L140.0,279.7 L133.9,267.0 L127.6,254.5 L120.8,242.0 L113.5,229.7 L105.2,217.7 L91.0,207.7 L91.0,207.7 L87.0,224.6 L89.0,239.3 L92.3,253.6 L96.5,267.6 L101.4,281.2 L106.9,294.6 L112.9,307.8 L119.2,320.8 L125.8,333.7 L132.6,346.4 L139.7,359.0 L147.0,371.5 L154.6,383.8 L162.4,395.9 L170.4,407.9 L178.7,419.7 L187.1,431.5 L195.8,443.0 L204.6,454.4 L213.6,465.7 L222.8,476.9 L232.2,488.0 L241.7,498.9Z" fill="#f2e01a" stroke="#a89400" stroke-width="1.1"/>
<path d="M406.6,506.7 L416.0,504.2 L425.3,501.5 L434.3,498.4 L443.3,495.0 L452.0,491.4 L460.5,487.4 L468.9,483.1 L477.0,478.5 L484.9,473.6 L492.6,468.3 L500.1,462.7 L507.3,456.7 L514.3,450.5 L520.9,443.9 L527.3,436.9 L533.4,429.7 L539.2,422.2 L544.5,414.2 L549.2,405.8 L553.4,397.1 L556.8,387.9 L559.2,378.1 L557.2,366.3 L557.2,366.3 L546.8,371.8 L540.3,378.8 L534.4,385.8 L528.9,392.8 L523.5,399.8 L518.2,406.7 L513.0,413.5 L507.6,420.1 L502.1,426.6 L496.5,432.9 L490.7,439.1 L484.7,445.1 L478.6,451.0 L472.2,456.8 L465.7,462.3 L458.9,467.8 L451.9,473.1 L444.7,478.2 L437.2,483.2 L429.5,488.0 L421.5,492.7 L413.2,497.1 L404.7,501.3Z" fill="#eada12" stroke="#a89400" stroke-width="1.1"/>
<path d="M399.7,508.6 L406.7,503.1 L413.6,497.6 L420.6,492.1 L427.6,486.7 L434.5,481.3 L441.5,475.9 L448.4,470.5 L455.2,465.1 L462.1,459.7 L468.8,454.2 L475.5,448.7 L482.2,443.2 L488.8,437.6 L495.4,432.0 L501.8,426.3 L508.3,420.5 L514.6,414.7 L520.7,408.5 L526.4,402.0 L531.8,395.0 L536.6,387.4 L540.6,378.7 L540.0,364.4 L540.0,364.4 L526.0,361.5 L516.6,364.2 L508.2,368.1 L500.4,372.7 L493.1,377.9 L486.2,383.5 L479.6,389.5 L473.2,395.7 L466.9,402.0 L460.8,408.5 L454.8,415.1 L449.0,421.8 L443.3,428.7 L437.7,435.7 L432.3,442.8 L427.0,450.0 L421.8,457.3 L416.7,464.7 L411.7,472.1 L406.9,479.6 L402.1,487.2 L397.4,494.8 L392.7,502.5Z" fill="#e0d414" stroke="#a89400" stroke-width="1.1"/>
<path d="M180.1,590.2 L164.9,587.8 L149.7,585.5 L134.4,583.2 L119.2,580.9 L104.0,578.8 L88.7,576.7 L73.4,574.7 L58.2,572.8 L42.9,571.0 L27.6,569.4 L12.3,567.9 L-2.9,566.5 L-18.3,565.3 L-33.6,564.2 L-48.9,563.2 L-64.2,562.5 L-79.5,561.9 L-94.9,561.8 L-110.3,562.2 L-125.6,563.3 L-141.1,565.2 L-156.5,568.5 L-172.2,578.8 L-172.2,578.8 L-157.2,590.2 L-142.1,594.5 L-126.9,597.5 L-111.6,599.7 L-96.4,601.2 L-81.1,602.3 L-65.8,602.9 L-50.5,603.4 L-35.2,603.7 L-19.9,604.0 L-4.6,604.1 L10.7,604.1 L26.0,603.9 L41.4,603.7 L56.7,603.4 L72.0,603.0 L87.4,602.6 L102.7,602.1 L118.1,601.5 L133.5,600.9 L148.8,600.3 L164.2,599.7 L179.6,599.1Z" fill="#ecd80e" stroke="#a89400" stroke-width="1.1"/>
<path d="M236.4,540.6 L226.5,534.8 L216.9,528.8 L207.5,522.7 L198.3,516.3 L189.4,509.9 L180.7,503.3 L172.1,496.5 L163.8,489.6 L155.7,482.6 L147.7,475.5 L139.8,468.3 L132.2,460.9 L124.6,453.4 L117.2,445.8 L109.9,438.1 L102.7,430.2 L95.6,422.3 L88.4,414.3 L81.0,406.3 L73.4,398.5 L65.3,390.7 L56.5,383.2 L42.9,378.4 L42.9,378.4 L41.8,392.9 L45.8,404.3 L51.0,415.0 L57.0,425.1 L63.6,434.6 L70.8,443.7 L78.4,452.4 L86.4,460.7 L94.6,468.7 L103.1,476.4 L111.9,483.8 L120.9,490.8 L130.2,497.5 L139.7,503.9 L149.4,509.9 L159.3,515.6 L169.4,521.1 L179.7,526.1 L190.1,530.9 L200.7,535.4 L211.5,539.6 L222.4,543.6 L233.5,547.3Z" fill="#f0de14" stroke="#a89400" stroke-width="1.1"/>
<path d="M416.2,585.8 L426.9,583.4 L437.7,581.2 L448.4,579.2 L459.1,577.4 L469.7,575.8 L480.3,574.2 L490.9,572.9 L501.4,571.6 L511.9,570.4 L522.3,569.4 L532.7,568.4 L543.1,567.4 L553.5,566.6 L563.8,565.7 L574.2,565.0 L584.6,564.2 L595.0,563.5 L605.4,562.5 L615.8,561.0 L626.4,559.1 L637.0,556.5 L647.8,552.5 L659.3,540.9 L659.3,540.9 L648.7,528.4 L637.5,523.9 L626.3,521.0 L615.0,519.4 L603.6,518.6 L592.3,518.6 L581.1,519.4 L569.9,520.5 L558.8,522.0 L547.7,523.9 L536.7,526.1 L525.8,528.7 L515.0,531.6 L504.3,534.9 L493.6,538.4 L483.1,542.3 L472.7,546.4 L462.4,550.9 L452.2,555.5 L442.1,560.5 L432.2,565.6 L422.3,571.0 L412.5,576.6Z" fill="#e6d00a" stroke="#a89400" stroke-width="1.1"/>
<path d="M279.0,453.1 L278.7,440.4 L278.3,427.8 L277.9,415.1 L277.4,402.5 L276.8,389.8 L276.2,377.2 L275.4,364.6 L274.5,352.0 L273.5,339.4 L272.4,326.8 L271.1,314.3 L269.6,301.7 L268.0,289.2 L266.3,276.8 L264.3,264.3 L262.2,251.9 L259.9,239.6 L257.1,227.3 L253.7,215.1 L249.6,203.1 L244.6,191.2 L238.1,179.7 L224.2,169.6 L224.2,169.6 L215.0,184.2 L213.4,197.3 L213.1,210.1 L213.7,222.7 L215.0,235.2 L216.8,247.6 L219.0,259.9 L221.5,272.2 L224.0,284.4 L226.7,296.6 L229.5,308.8 L232.4,321.0 L235.4,333.2 L238.5,345.4 L241.7,357.5 L245.0,369.7 L248.4,381.8 L251.8,393.9 L255.3,406.0 L258.8,418.2 L262.4,430.3 L265.9,442.4 L269.5,454.6Z" fill="#f2e01a" stroke="#a89400" stroke-width="1.1"/>
<path d="M382.1,519.2 L393.8,514.6 L405.3,509.8 L416.5,504.6 L427.5,499.1 L438.3,493.2 L448.9,487.0 L459.1,480.5 L469.2,473.6 L478.9,466.3 L488.4,458.6 L497.5,450.6 L506.3,442.2 L514.8,433.5 L522.9,424.4 L530.7,414.9 L538.1,405.1 L545.1,395.0 L551.5,384.4 L557.3,373.3 L562.2,361.8 L566.2,349.8 L568.8,337.1 L565.7,322.0 L565.7,322.0 L552.3,329.3 L544.1,338.5 L536.8,347.9 L529.9,357.3 L523.3,366.7 L516.8,376.0 L510.3,385.2 L503.7,394.3 L497.0,403.3 L490.1,412.0 L483.0,420.7 L475.7,429.1 L468.2,437.5 L460.5,445.7 L452.5,453.7 L444.3,461.6 L435.8,469.4 L427.1,477.0 L418.0,484.4 L408.7,491.7 L399.0,498.8 L389.1,505.7 L378.8,512.4Z" fill="#eada12" stroke="#a89400" stroke-width="1.1"/>
<path d="M374.4,586.7 L386.2,585.7 L397.9,584.7 L409.7,583.6 L421.5,582.5 L433.2,581.3 L444.9,580.0 L456.7,578.6 L468.3,577.1 L480.0,575.4 L491.6,573.6 L503.2,571.7 L514.8,569.6 L526.3,567.4 L537.8,565.0 L549.3,562.5 L560.7,559.7 L572.0,556.8 L583.3,553.4 L594.3,549.3 L605.2,544.6 L615.9,539.0 L626.1,531.9 L634.3,517.2 L634.3,517.2 L619.9,508.6 L607.5,507.5 L595.6,507.8 L583.8,509.0 L572.3,510.9 L560.9,513.3 L549.6,516.2 L538.3,519.2 L527.1,522.4 L515.9,525.7 L504.7,529.1 L493.6,532.6 L482.5,536.3 L471.4,540.1 L460.4,543.9 L449.3,547.9 L438.3,551.9 L427.3,556.0 L416.2,560.2 L405.2,564.4 L394.2,568.6 L383.2,572.8 L372.2,577.0Z" fill="#e0d414" stroke="#a89400" stroke-width="1.1"/>
<path d="M405.3,682.3 L414.1,694.0 L423.1,705.5 L432.2,716.7 L441.6,727.8 L451.2,738.7 L461.0,749.4 L471.1,759.8 L481.4,770.0 L492.0,779.9 L502.8,789.6 L513.8,798.9 L525.1,808.0 L536.6,816.8 L548.4,825.3 L560.4,833.5 L572.7,841.3 L585.2,848.8 L598.0,855.7 L611.2,861.9 L624.9,867.4 L638.9,872.0 L653.7,875.1 L671.2,871.8 L671.2,871.8 L662.5,856.4 L651.4,846.9 L639.9,838.5 L628.3,830.5 L616.5,822.9 L604.7,815.6 L592.8,808.4 L581.0,801.2 L569.3,793.9 L557.6,786.5 L546.0,778.9 L534.4,771.3 L523.0,763.5 L511.5,755.6 L500.1,747.6 L488.8,739.4 L477.5,731.0 L466.4,722.4 L455.2,713.7 L444.2,704.8 L433.3,695.6 L422.4,686.2 L411.7,676.6Z" fill="#ecd80e" stroke="#a89400" stroke-width="1.1"/>
<path d="M205.2,577.2 L193.5,576.9 L181.8,576.3 L170.3,575.5 L158.9,574.4 L147.5,573.1 L136.3,571.6 L125.2,569.8 L114.1,567.9 L103.2,565.7 L92.3,563.4 L81.5,560.8 L70.8,558.1 L60.1,555.2 L49.5,552.1 L38.9,548.8 L28.3,545.4 L17.8,541.8 L7.2,538.2 L-3.5,534.7 L-14.3,531.2 L-25.4,528.0 L-36.9,525.3 L-50.6,526.4 L-50.6,526.4 L-43.3,538.2 L-33.7,545.7 L-23.5,552.1 L-13.0,557.8 L-2.2,562.8 L8.7,567.2 L19.9,571.0 L31.1,574.5 L42.5,577.5 L53.9,580.2 L65.3,582.6 L76.8,584.5 L88.4,586.1 L100.0,587.3 L111.7,588.2 L123.4,588.7 L135.1,588.8 L146.8,588.7 L158.6,588.2 L170.3,587.3 L182.1,586.2 L193.9,584.8 L205.7,583.1Z" fill="#f0de14" stroke="#a89400" stroke-width="1.1"/>
<path d="M425.9,671.4 L442.2,675.2 L458.1,679.4 L473.7,684.1 L489.0,689.1 L504.0,694.5 L518.6,700.3 L533.0,706.4 L547.2,712.8 L561.0,719.6 L574.6,726.7 L588.0,734.1 L601.1,741.8 L614.1,749.9 L626.8,758.2 L639.4,766.9 L651.8,775.9 L664.1,785.2 L676.4,794.6 L688.9,804.1 L701.5,813.6 L714.6,823.1 L728.5,832.3 L747.2,837.7 L747.2,837.7 L743.4,818.3 L734.1,803.6 L723.6,790.2 L712.3,777.7 L700.2,766.1 L687.5,755.3 L674.3,745.2 L660.7,735.8 L646.9,726.9 L632.7,718.6 L618.2,710.9 L603.5,703.8 L588.5,697.3 L573.2,691.4 L557.7,686.0 L542.0,681.3 L526.1,677.1 L510.0,673.4 L493.8,670.3 L477.3,667.8 L460.7,665.7 L444.0,664.1 L427.0,663.1Z" fill="#e6d00a" stroke="#a89400" stroke-width="1.1"/>
<path d="M304.4,718.5 L306.3,732.6 L308.0,746.6 L309.5,760.6 L310.9,774.6 L312.0,788.5 L313.0,802.4 L313.8,816.2 L314.5,830.0 L315.1,843.7 L315.6,857.5 L316.0,871.1 L316.3,884.8 L316.5,898.5 L316.6,912.1 L316.7,925.8 L316.8,939.4 L316.8,953.1 L317.0,966.8 L317.7,980.5 L318.8,994.4 L320.6,1008.4 L323.7,1022.6 L334.4,1037.9 L334.4,1037.9 L347.8,1024.8 L353.3,1010.8 L357.0,996.6 L359.5,982.3 L361.1,967.9 L361.9,953.5 L361.9,939.1 L361.6,924.8 L360.8,910.4 L359.7,896.1 L358.1,881.9 L356.3,867.7 L354.0,853.5 L351.4,839.4 L348.4,825.4 L345.1,811.4 L341.5,797.6 L337.6,783.8 L333.4,770.0 L328.9,756.4 L324.2,742.8 L319.2,729.3 L314.0,715.9Z" fill="#f2e01a" stroke="#a89400" stroke-width="1.1"/>
<path d="M312.7,720.5 L317.5,733.9 L321.9,747.4 L325.9,760.8 L329.6,774.2 L333.0,787.6 L336.0,801.0 L338.7,814.4 L341.1,827.8 L343.2,841.1 L345.0,854.5 L346.5,867.8 L347.8,881.2 L348.8,894.6 L349.5,908.0 L350.0,921.4 L350.2,934.9 L350.2,948.4 L350.1,961.9 L350.1,975.6 L350.1,989.4 L350.3,1003.3 L351.0,1017.6 L356.0,1032.7 L356.0,1032.7 L365.4,1019.6 L369.9,1005.6 L373.0,991.5 L375.2,977.3 L376.7,963.0 L377.4,948.8 L377.4,934.6 L377.0,920.4 L376.1,906.3 L374.7,892.3 L372.9,878.3 L370.6,864.4 L367.9,850.6 L364.8,836.9 L361.2,823.2 L357.2,809.7 L352.8,796.3 L348.0,783.0 L342.7,769.8 L337.1,756.7 L331.2,743.7 L324.9,730.8 L318.2,718.0Z" fill="#eada12" stroke="#a89400" stroke-width="1.1"/>
<path d="M339.8,724.3 L340.8,740.2 L342.1,756.1 L343.6,771.9 L345.5,787.7 L347.7,803.4 L350.3,819.0 L353.2,834.6 L356.4,850.1 L360.0,865.4 L364.0,880.7 L368.3,895.9 L373.0,911.0 L378.1,926.0 L383.6,940.8 L389.5,955.5 L395.7,970.1 L402.3,984.5 L409.5,998.7 L417.3,1012.7 L425.7,1026.2 L435.0,1039.4 L445.3,1051.9 L460.0,1061.7 L460.0,1061.7 L458.3,1044.2 L452.8,1029.3 L446.8,1014.9 L440.5,1000.7 L434.2,986.6 L427.8,972.6 L421.5,958.6 L415.3,944.6 L409.2,930.5 L403.4,916.4 L397.7,902.2 L392.3,887.9 L387.0,873.5 L381.9,859.0 L377.0,844.4 L372.4,829.7 L367.9,814.9 L363.7,800.0 L359.6,785.0 L355.9,769.8 L352.3,754.5 L349.0,739.1 L346.0,723.5Z" fill="#e0d414" stroke="#a89400" stroke-width="1.1"/>
<path d="M165.9,596.8 L149.7,595.0 L133.6,593.3 L117.4,591.6 L101.2,590.0 L85.0,588.5 L68.8,587.1 L52.6,585.8 L36.4,584.6 L20.2,583.6 L4.0,582.7 L-12.2,582.0 L-28.5,581.5 L-44.7,581.1 L-60.9,580.9 L-77.1,580.9 L-93.3,581.0 L-109.5,581.4 L-125.7,582.3 L-141.9,583.8 L-158.0,586.0 L-174.2,589.2 L-190.2,593.9 L-206.0,606.3 L-206.0,606.3 L-189.4,617.6 L-173.2,621.3 L-157.0,623.5 L-140.8,624.8 L-124.6,625.5 L-108.5,625.6 L-92.4,625.3 L-76.3,624.8 L-60.1,624.2 L-44.0,623.4 L-27.9,622.6 L-11.8,621.6 L4.3,620.6 L20.5,619.4 L36.6,618.2 L52.7,616.9 L68.9,615.5 L85.0,614.0 L101.1,612.6 L117.3,611.1 L133.5,609.6 L149.6,608.0 L165.8,606.5Z" fill="#ecd80e" stroke="#a89400" stroke-width="1.1"/>
<path d="M373.0,593.2 L380.6,591.5 L388.2,590.0 L395.7,588.7 L403.3,587.5 L410.8,586.4 L418.2,585.4 L425.7,584.6 L433.1,583.8 L440.4,583.1 L447.8,582.5 L455.1,582.0 L462.4,581.5 L469.7,581.0 L477.0,580.7 L484.3,580.3 L491.6,580.0 L498.9,579.8 L506.2,579.3 L513.6,578.6 L521.0,577.5 L528.6,576.0 L536.3,573.5 L544.7,565.9 L544.7,565.9 L537.6,557.0 L529.8,553.6 L522.0,551.3 L514.0,549.9 L506.1,549.1 L498.1,548.9 L490.2,549.1 L482.2,549.7 L474.4,550.5 L466.5,551.6 L458.7,553.0 L451.0,554.6 L443.3,556.4 L435.7,558.5 L428.2,560.9 L420.7,563.4 L413.3,566.2 L406.0,569.2 L398.7,572.4 L391.6,575.8 L384.5,579.3 L377.4,583.0 L370.5,586.8Z" fill="#f0de14" stroke="#a89400" stroke-width="1.1"/>
<path d="M405.1,647.0 L411.6,651.6 L418.1,656.1 L424.6,660.5 L431.2,664.8 L437.9,669.1 L444.6,673.3 L451.4,677.4 L458.2,681.4 L465.1,685.2 L472.1,689.0 L479.1,692.6 L486.2,696.1 L493.4,699.4 L500.6,702.6 L507.9,705.6 L515.2,708.5 L522.6,711.3 L530.2,713.6 L537.8,715.6 L545.7,717.1 L553.7,717.9 L562.1,717.7 L571.9,712.6 L571.9,712.6 L566.9,702.8 L560.4,697.7 L553.7,693.6 L546.8,690.0 L539.8,686.7 L532.7,683.8 L525.5,681.1 L518.3,678.5 L511.0,675.9 L503.8,673.4 L496.5,670.9 L489.2,668.4 L481.9,665.9 L474.6,663.5 L467.3,661.1 L459.9,658.7 L452.5,656.3 L445.1,653.8 L437.7,651.4 L430.3,648.9 L422.9,646.4 L415.5,643.9 L408.1,641.3Z" fill="#e6d00a" stroke="#a89400" stroke-width="1.1"/>
<path d="M253.5,652.6 L242.9,657.1 L232.5,661.9 L222.3,667.0 L212.4,672.4 L202.7,678.2 L193.4,684.3 L184.3,690.8 L175.5,697.7 L167.0,704.9 L158.9,712.5 L151.1,720.4 L143.8,728.7 L136.7,737.4 L130.1,746.4 L123.9,755.8 L118.2,765.5 L112.9,775.5 L108.3,785.9 L104.4,796.7 L101.5,807.9 L99.6,819.5 L99.2,831.5 L105.4,845.3 L105.4,845.3 L118.0,837.4 L124.7,828.2 L130.5,819.1 L135.7,810.0 L140.7,801.0 L145.5,792.1 L150.3,783.3 L155.2,774.6 L160.2,766.1 L165.4,757.7 L170.9,749.5 L176.5,741.3 L182.4,733.3 L188.5,725.4 L194.9,717.6 L201.6,709.9 L208.6,702.3 L215.8,694.9 L223.5,687.5 L231.4,680.3 L239.7,673.3 L248.4,666.4 L257.4,659.7Z" fill="#f2e01a" stroke="#a89400" stroke-width="1.1"/>
<path d="M184.2,644.1 L172.5,651.7 L160.7,658.9 L148.8,665.8 L136.9,672.4 L124.9,678.7 L112.8,684.6 L100.8,690.3 L88.7,695.7 L76.5,700.9 L64.3,705.8 L52.1,710.4 L39.8,714.9 L27.4,719.1 L15.0,723.1 L2.5,727.0 L-10.1,730.6 L-22.7,734.1 L-35.4,737.7 L-48.2,741.5 L-61.0,745.5 L-74.0,750.0 L-87.0,755.5 L-99.6,767.1 L-99.6,767.1 L-84.3,775.4 L-69.7,776.9 L-55.3,776.7 L-41.1,775.5 L-27.1,773.3 L-13.3,770.3 L0.3,766.6 L13.7,762.4 L26.9,757.8 L40.0,752.7 L52.8,747.1 L65.4,741.2 L77.8,734.8 L90.0,728.0 L101.9,720.8 L113.6,713.2 L125.1,705.3 L136.4,696.9 L147.4,688.3 L158.2,679.3 L168.9,670.0 L179.3,660.4 L189.5,650.5Z" fill="#eada12" stroke="#a89400" stroke-width="1.1"/>
<path d="M431.8,581.0 L449.4,584.6 L467.0,587.8 L484.6,590.4 L502.1,592.6 L519.6,594.2 L537.1,595.2 L554.6,595.7 L572.0,595.7 L589.4,595.1 L606.7,593.8 L623.9,592.0 L641.1,589.7 L658.3,586.7 L675.3,583.1 L692.2,578.9 L709.1,574.1 L725.8,568.7 L742.3,562.6 L758.6,555.6 L774.6,547.7 L790.2,538.8 L805.2,528.7 L817.9,514.0 L817.9,514.0 L798.8,515.8 L781.9,521.1 L765.5,526.8 L749.3,532.4 L733.2,537.9 L717.2,543.2 L701.2,548.3 L685.2,553.1 L669.1,557.4 L652.9,561.4 L636.7,565.0 L620.3,568.2 L603.9,570.9 L587.4,573.3 L570.7,575.3 L554.0,576.8 L537.1,577.9 L520.0,578.6 L502.9,578.9 L485.6,578.6 L468.1,577.9 L450.5,576.8 L432.8,575.1Z" fill="#e0d414" stroke="#a89400" stroke-width="1.1"/>
<path d="M350.5,680.5 L353.2,688.8 L356.0,697.1 L358.9,705.4 L362.0,713.6 L365.2,721.8 L368.5,729.9 L372.0,738.0 L375.7,745.9 L379.5,753.8 L383.6,761.6 L387.8,769.3 L392.2,776.8 L396.7,784.3 L401.5,791.6 L406.5,798.8 L411.7,805.8 L417.1,812.7 L422.9,819.3 L429.2,825.4 L436.1,831.1 L443.7,836.1 L452.4,840.1 L466.5,839.1 L466.5,839.1 L469.3,825.3 L466.7,816.3 L463.3,808.3 L459.2,800.8 L454.8,793.7 L450.0,786.9 L444.9,780.3 L439.7,773.8 L434.5,767.3 L429.3,760.8 L424.0,754.4 L418.6,748.0 L413.3,741.6 L407.8,735.2 L402.4,728.8 L396.9,722.3 L391.4,715.9 L385.9,709.4 L380.4,702.9 L374.9,696.3 L369.4,689.6 L364.0,682.9 L358.6,676.2Z" fill="#ecd80e" stroke="#a89400" stroke-width="1.1"/>
<path d="M387.5,710.1 L400.5,719.6 L413.1,729.5 L425.3,739.5 L437.0,749.8 L448.4,760.3 L459.3,771.0 L469.9,781.8 L480.2,792.8 L490.1,804.1 L499.7,815.4 L509.0,827.0 L518.0,838.7 L526.7,850.7 L535.2,862.8 L543.5,875.1 L551.5,887.6 L559.3,900.3 L567.1,913.1 L575.1,926.0 L583.4,939.0 L592.1,952.0 L601.9,964.9 L618.0,975.9 L618.0,975.9 L622.3,956.6 L619.5,939.9 L614.9,923.9 L609.2,908.5 L602.4,893.7 L594.8,879.3 L586.4,865.5 L577.4,852.1 L568.0,839.1 L558.1,826.6 L547.7,814.4 L536.8,802.7 L525.6,791.4 L513.9,780.6 L501.8,770.2 L489.3,760.2 L476.4,750.7 L463.2,741.6 L449.6,732.9 L435.7,724.7 L421.4,716.8 L406.9,709.3 L392.1,702.2Z" fill="#f0de14" stroke="#a89400" stroke-width="1.1"/>
<path d="M214.9,606.8 L201.6,605.4 L188.3,604.2 L175.0,603.1 L161.7,602.3 L148.4,601.6 L135.0,601.2 L121.7,601.0 L108.3,601.0 L95.0,601.3 L81.7,601.8 L68.3,602.6 L55.0,603.6 L41.8,605.0 L28.5,606.6 L15.3,608.5 L2.1,610.7 L-11.0,613.2 L-24.1,616.2 L-37.0,619.9 L-49.7,624.3 L-62.2,629.7 L-74.2,636.4 L-84.5,649.6 L-84.5,649.6 L-69.2,656.2 L-55.6,656.5 L-42.4,655.8 L-29.4,654.4 L-16.5,652.7 L-3.8,650.6 L8.9,648.2 L21.6,645.8 L34.3,643.4 L47.1,641.1 L59.8,638.8 L72.5,636.5 L85.3,634.2 L98.1,632.0 L110.9,629.8 L123.7,627.6 L136.6,625.6 L149.5,623.6 L162.5,621.7 L175.5,619.9 L188.6,618.2 L201.7,616.6 L214.9,615.2Z" fill="#e6d00a" stroke="#a89400" stroke-width="1.1"/>
<path d="M421.2,610.3 L434.3,616.6 L447.5,622.5 L460.8,628.0 L474.2,633.1 L487.7,637.8 L501.4,642.1 L515.1,645.9 L529.0,649.3 L542.9,652.2 L556.9,654.6 L571.0,656.5 L585.2,657.9 L599.4,658.8 L613.7,659.2 L628.0,659.0 L642.4,658.3 L656.7,657.1 L671.0,655.0 L685.2,652.0 L699.2,647.9 L713.0,642.7 L726.4,635.7 L737.7,621.3 L737.7,621.3 L721.3,613.8 L706.9,612.8 L693.0,612.9 L679.3,613.5 L665.9,614.3 L652.6,615.3 L639.3,616.4 L626.1,617.4 L613.0,618.1 L599.8,618.6 L586.6,618.9 L573.4,619.0 L560.1,618.8 L546.8,618.4 L533.5,617.8 L520.1,616.9 L506.6,615.7 L493.1,614.2 L479.5,612.3 L465.8,610.2 L452.0,607.7 L438.2,604.9 L424.3,601.6Z" fill="#f2e01a" stroke="#a89400" stroke-width="1.1"/>
<path d="M374.4,702.5 L378.5,719.2 L383.1,735.7 L388.2,751.9 L393.7,767.8 L399.7,783.4 L406.2,798.8 L413.2,813.9 L420.8,828.6 L428.8,843.0 L437.4,857.2 L446.5,870.9 L456.1,884.4 L466.2,897.4 L476.9,910.1 L488.0,922.4 L499.7,934.3 L511.9,945.8 L524.7,956.7 L538.2,967.0 L552.3,976.5 L567.1,985.2 L582.9,992.6 L601.5,995.4 L601.5,995.4 L591.5,979.6 L579.4,967.9 L567.2,956.8 L555.1,945.9 L543.3,935.1 L531.6,924.3 L520.1,913.4 L508.9,902.3 L498.1,891.0 L487.6,879.4 L477.4,867.6 L467.5,855.4 L457.9,843.0 L448.7,830.3 L439.8,817.3 L431.2,803.9 L422.9,790.3 L414.9,776.2 L407.3,761.9 L400.1,747.1 L393.2,732.0 L386.7,716.5 L380.6,700.7Z" fill="#eada12" stroke="#a89400" stroke-width="1.1"/>
<path d="M420.0,579.0 L429.8,579.2 L439.5,579.3 L449.2,579.3 L459.0,579.2 L468.7,579.0 L478.4,578.7 L488.1,578.2 L497.8,577.6 L507.5,576.8 L517.1,575.9 L526.7,574.8 L536.3,573.5 L545.9,572.0 L555.4,570.3 L564.9,568.5 L574.3,566.4 L583.7,564.0 L592.9,561.2 L602.0,557.7 L610.9,553.6 L619.5,548.4 L627.7,541.8 L633.7,527.7 L633.7,527.7 L621.3,518.6 L611.0,517.0 L601.2,516.9 L591.6,517.5 L582.2,518.8 L572.9,520.6 L563.8,522.8 L554.6,525.1 L545.5,527.6 L536.5,530.2 L527.4,532.8 L518.3,535.6 L509.3,538.4 L500.3,541.3 L491.2,544.3 L482.2,547.3 L473.1,550.4 L464.1,553.5 L455.0,556.7 L445.9,559.8 L436.8,563.0 L427.7,566.1 L418.5,569.3Z" fill="#e0d414" stroke="#a89400" stroke-width="1.1"/>
<path d="M336.7,682.0 L339.4,693.8 L342.3,705.6 L345.4,717.4 L348.6,729.1 L352.0,740.8 L355.7,752.4 L359.5,763.9 L363.5,775.3 L367.7,786.7 L372.2,798.0 L376.8,809.2 L381.7,820.3 L386.9,831.3 L392.2,842.2 L397.8,853.0 L403.6,863.6 L409.7,874.2 L416.2,884.5 L423.1,894.5 L430.5,904.3 L438.5,913.6 L447.5,922.3 L460.5,928.1 L460.5,928.1 L459.9,913.9 L455.5,902.5 L450.5,891.6 L445.1,880.9 L439.6,870.4 L433.9,860.1 L428.0,849.9 L422.2,839.6 L416.4,829.3 L410.7,819.0 L405.0,808.7 L399.4,798.3 L393.9,787.9 L388.4,777.4 L382.9,766.9 L377.6,756.3 L372.3,745.7 L367.1,734.9 L362.0,724.1 L357.0,713.3 L352.1,702.3 L347.3,691.3 L342.6,680.1Z" fill="#ecd80e" stroke="#a89400" stroke-width="1.1"/>
<path d="M331.5,673.2 L332.5,688.0 L334.0,702.6 L335.8,717.2 L338.0,731.6 L340.6,745.9 L343.7,760.1 L347.2,774.2 L351.1,788.1 L355.5,801.9 L360.3,815.5 L365.6,828.9 L371.4,842.2 L377.6,855.2 L384.3,868.1 L391.5,880.7 L399.1,893.1 L407.2,905.2 L416.0,917.0 L425.4,928.3 L435.6,939.0 L446.6,949.1 L458.8,958.1 L475.4,962.9 L475.4,962.9 L472.1,946.1 L465.1,933.3 L457.7,921.2 L450.1,909.4 L442.5,897.8 L434.8,886.3 L427.3,874.9 L419.9,863.4 L412.8,851.8 L405.9,840.1 L399.2,828.2 L392.8,816.2 L386.6,804.1 L380.6,791.8 L374.9,779.3 L369.4,766.6 L364.2,753.8 L359.2,740.7 L354.6,727.5 L350.1,714.0 L346.0,700.2 L342.2,686.3 L338.8,672.1Z" fill="#f0de14" stroke="#a89400" stroke-width="1.1"/>
<path d="M349.9,702.6 L355.4,710.7 L360.6,718.9 L365.6,727.1 L370.5,735.4 L375.2,743.7 L379.7,752.0 L384.1,760.3 L388.3,768.7 L392.4,777.0 L396.5,785.4 L400.3,793.8 L404.1,802.3 L407.9,810.7 L411.5,819.2 L415.0,827.7 L418.5,836.3 L422.0,844.9 L425.6,853.4 L429.4,862.0 L433.6,870.5 L438.2,879.0 L443.8,887.3 L454.7,894.5 L454.7,894.5 L460.6,882.7 L460.9,872.3 L459.8,862.2 L458.0,852.3 L455.4,842.6 L452.3,833.2 L448.6,823.9 L444.7,814.8 L440.4,805.9 L435.9,797.1 L431.1,788.5 L426.0,780.0 L420.7,771.7 L415.1,763.6 L409.3,755.6 L403.2,747.8 L396.9,740.2 L390.5,732.8 L383.8,725.5 L376.9,718.3 L369.9,711.3 L362.7,704.5 L355.3,697.8Z" fill="#e6d00a" stroke="#a89400" stroke-width="1.1"/>
<path d="M308.7,675.8 L308.9,690.9 L309.1,705.9 L309.5,720.9 L310.0,735.9 L310.6,751.0 L311.4,766.0 L312.4,781.0 L313.5,796.0 L314.8,810.9 L316.3,825.9 L317.9,840.8 L319.8,855.7 L321.8,870.6 L324.1,885.5 L326.6,900.3 L329.2,915.1 L332.2,929.8 L335.5,944.5 L339.4,959.0 L343.8,973.5 L349.0,987.7 L355.3,1001.7 L367.1,1014.3 L367.1,1014.3 L371.9,997.8 L371.6,982.6 L370.2,967.6 L368.3,952.9 L366.0,938.2 L363.5,923.6 L360.6,909.0 L357.8,894.5 L354.9,880.0 L352.0,865.4 L349.1,850.9 L346.2,836.3 L343.3,821.8 L340.4,807.2 L337.5,792.6 L334.6,778.0 L331.7,763.4 L328.9,748.8 L326.2,734.1 L323.5,719.5 L320.8,704.7 L318.2,690.0 L315.7,675.2Z" fill="#f2e01a" stroke="#a89400" stroke-width="1.1"/>
<path d="M432.1,600.1 L441.0,598.0 L449.9,596.2 L458.7,594.6 L467.4,593.3 L476.0,592.3 L484.6,591.4 L493.2,590.8 L501.7,590.4 L510.1,590.2 L518.5,590.1 L526.8,590.3 L535.1,590.6 L543.4,591.0 L551.7,591.7 L560.0,592.4 L568.3,593.4 L576.6,594.5 L584.9,595.5 L593.4,596.4 L602.1,597.1 L610.9,597.6 L620.2,597.4 L631.1,592.8 L631.1,592.8 L624.5,582.7 L616.3,577.5 L607.6,573.6 L598.8,570.4 L589.8,568.0 L580.7,566.2 L571.5,565.0 L562.4,564.2 L553.2,563.7 L544.1,563.7 L535.0,564.0 L525.9,564.7 L516.8,565.7 L507.8,567.1 L498.9,568.9 L490.0,571.0 L481.2,573.4 L472.5,576.2 L463.8,579.2 L455.2,582.5 L446.7,586.2 L438.3,590.0 L429.9,594.2Z" fill="#eada12" stroke="#a89400" stroke-width="1.1"/>
<path d="M443.4,603.5 L453.7,603.2 L463.9,603.0 L474.1,603.0 L484.2,603.1 L494.2,603.4 L504.3,603.7 L514.2,604.1 L524.1,604.6 L534.0,605.1 L543.8,605.7 L553.6,606.3 L563.4,607.0 L573.2,607.7 L582.9,608.3 L592.7,609.1 L602.4,609.8 L612.1,610.4 L621.9,610.8 L631.8,610.8 L641.8,610.3 L652.0,609.1 L662.5,606.6 L674.4,597.1 L674.4,597.1 L666.2,584.1 L656.5,578.5 L646.5,574.5 L636.3,571.6 L626.0,569.4 L615.6,568.0 L605.2,567.2 L594.7,566.8 L584.3,566.7 L573.8,566.9 L563.4,567.4 L553.0,568.2 L542.7,569.3 L532.3,570.7 L522.1,572.4 L511.8,574.3 L501.6,576.5 L491.5,578.9 L481.4,581.6 L471.4,584.5 L461.4,587.6 L451.5,590.8 L441.6,594.3Z" fill="#e0d414" stroke="#a89400" stroke-width="1.1"/>
<path d="M260.3,673.8 L250.5,681.7 L241.0,689.9 L231.8,698.3 L222.9,707.0 L214.4,715.9 L206.2,725.1 L198.3,734.6 L190.8,744.3 L183.7,754.3 L177.0,764.5 L170.8,775.0 L164.9,785.7 L159.5,796.7 L154.5,808.0 L150.0,819.4 L145.9,831.1 L142.4,843.0 L139.5,855.1 L137.4,867.5 L136.2,880.1 L136.1,892.9 L137.4,905.8 L144.9,919.3 L144.9,919.3 L155.2,908.1 L160.1,896.6 L164.1,885.3 L167.7,874.2 L171.2,863.1 L174.5,852.2 L177.8,841.3 L181.3,830.5 L185.0,819.9 L188.9,809.3 L193.1,798.9 L197.5,788.5 L202.1,778.2 L207.1,768.0 L212.3,757.8 L217.7,747.7 L223.5,737.7 L229.6,727.7 L236.1,717.8 L242.9,708.0 L250.0,698.3 L257.5,688.6 L265.4,679.1Z" fill="#ecd80e" stroke="#a89400" stroke-width="1.1"/>
<path d="M242.2,650.4 L228.2,656.7 L214.4,663.3 L200.9,670.2 L187.5,677.4 L174.3,685.0 L161.4,692.9 L148.7,701.1 L136.2,709.7 L124.1,718.7 L112.2,728.0 L100.6,737.7 L89.3,747.8 L78.3,758.2 L67.6,769.0 L57.3,780.2 L47.4,791.7 L37.8,803.6 L28.9,815.9 L20.6,828.9 L13.2,842.4 L6.8,856.6 L1.9,871.7 L3.7,890.6 L3.7,890.6 L21.2,883.7 L32.6,873.5 L42.8,862.7 L52.6,851.9 L61.9,840.9 L71.1,829.8 L80.1,818.8 L89.2,807.8 L98.4,797.0 L107.7,786.2 L117.2,775.7 L126.9,765.2 L136.7,754.8 L146.7,744.6 L156.8,734.5 L167.2,724.5 L177.8,714.6 L188.7,704.8 L199.8,695.2 L211.1,685.8 L222.7,676.5 L234.6,667.4 L246.8,658.5Z" fill="#f0de14" stroke="#a89400" stroke-width="1.1"/>
<path d="M235.6,676.1 L229.4,681.4 L223.2,686.8 L217.1,692.2 L210.9,697.6 L204.9,703.1 L198.9,708.6 L192.9,714.2 L187.0,719.8 L181.3,725.5 L175.6,731.3 L170.0,737.2 L164.5,743.1 L159.1,749.2 L153.9,755.3 L148.8,761.5 L143.8,767.9 L138.9,774.3 L134.4,781.0 L130.4,788.1 L126.8,795.5 L124.0,803.5 L122.3,812.2 L126.4,825.3 L126.4,825.3 L140.0,825.4 L147.9,821.3 L154.7,816.4 L160.8,811.0 L166.4,805.2 L171.6,799.1 L176.5,792.7 L181.2,786.3 L185.8,779.7 L190.4,773.1 L194.8,766.4 L199.1,759.7 L203.3,752.8 L207.5,745.9 L211.6,738.9 L215.6,731.9 L219.6,724.8 L223.5,717.7 L227.4,710.6 L231.2,703.4 L235.0,696.2 L238.9,689.0 L242.7,681.8Z" fill="#e6d00a" stroke="#a89400" stroke-width="1.1"/>
<path d="M381.0,639.9 L390.7,649.0 L400.6,657.8 L410.7,666.4 L420.9,674.8 L431.3,682.9 L441.9,690.8 L452.7,698.3 L463.8,705.6 L475.0,712.5 L486.4,719.1 L498.0,725.3 L509.8,731.2 L521.8,736.7 L534.0,741.8 L546.3,746.6 L558.8,750.9 L571.5,754.9 L584.4,758.1 L597.6,760.5 L610.9,761.9 L624.5,762.2 L638.4,760.8 L653.4,751.6 L653.4,751.6 L642.8,737.7 L631.2,731.1 L619.4,725.8 L607.7,721.1 L595.9,716.8 L584.1,712.9 L572.3,709.2 L560.6,705.4 L548.8,701.6 L537.2,697.6 L525.5,693.5 L513.9,689.4 L502.2,685.1 L490.6,680.6 L479.0,676.0 L467.5,671.3 L455.9,666.3 L444.3,661.2 L432.8,655.9 L421.2,650.3 L409.7,644.5 L398.2,638.4 L386.8,632.1Z" fill="#f2e01a" stroke="#a89400" stroke-width="1.1"/>
<path d="M382.4,617.7 L396.9,623.7 L411.4,629.4 L426.0,634.9 L440.8,640.2 L455.5,645.3 L470.4,650.1 L485.3,654.7 L500.3,659.1 L515.4,663.1 L530.6,666.9 L545.8,670.3 L561.1,673.5 L576.5,676.4 L591.9,678.9 L607.4,681.1 L622.9,683.0 L638.5,684.6 L654.2,685.5 L669.9,685.7 L685.6,685.0 L701.4,683.4 L717.2,680.2 L733.0,669.8 L733.0,669.8 L717.9,658.6 L702.7,654.2 L687.6,650.9 L672.5,648.3 L657.4,646.2 L642.3,644.4 L627.2,642.9 L612.1,641.3 L597.0,639.7 L581.9,638.1 L566.9,636.4 L551.8,634.7 L536.7,632.9 L521.6,631.0 L506.5,629.1 L491.3,627.1 L476.2,624.9 L461.0,622.7 L445.8,620.3 L430.6,617.8 L415.4,615.1 L400.2,612.3 L385.0,609.2Z" fill="#eada12" stroke="#a89400" stroke-width="1.1"/>
<path d="M163.4,553.7 L150.1,544.0 L136.6,534.7 L122.9,525.7 L109.1,517.1 L95.1,508.8 L80.9,500.9 L66.5,493.4 L51.9,486.3 L37.2,479.7 L22.2,473.4 L7.1,467.6 L-8.1,462.2 L-23.6,457.3 L-39.2,452.9 L-54.9,448.9 L-70.8,445.4 L-86.9,442.4 L-103.1,440.1 L-119.4,438.6 L-135.9,438.0 L-152.4,438.4 L-169.1,440.4 L-186.0,448.6 L-186.0,448.6 L-170.3,458.5 L-154.5,462.9 L-139.0,466.5 L-123.5,469.7 L-108.1,472.7 L-92.8,475.7 L-77.5,478.6 L-62.3,481.7 L-47.2,485.0 L-32.1,488.6 L-17.2,492.4 L-2.2,496.4 L12.7,500.7 L27.5,505.3 L42.3,510.1 L57.1,515.2 L71.8,520.7 L86.5,526.4 L101.2,532.4 L115.8,538.8 L130.4,545.5 L145.0,552.6 L159.4,560.0Z" fill="#e0d414" stroke="#a89400" stroke-width="1.1"/>
<path d="M253.8,669.9 L242.0,680.1 L230.4,690.4 L219.1,701.0 L208.1,711.9 L197.3,723.0 L186.9,734.3 L176.7,745.9 L166.9,757.8 L157.4,769.9 L148.3,782.3 L139.5,794.9 L131.1,807.8 L123.1,821.0 L115.4,834.4 L108.2,848.0 L101.4,861.9 L95.0,876.1 L89.3,890.5 L84.5,905.3 L80.5,920.5 L77.5,936.0 L76.3,952.0 L82.0,970.0 L82.0,970.0 L96.9,958.6 L105.2,945.5 L112.5,932.2 L119.3,918.9 L125.7,905.6 L131.9,892.3 L138.0,879.0 L144.2,865.7 L150.5,852.6 L157.0,839.5 L163.6,826.5 L170.4,813.6 L177.4,800.7 L184.6,788.0 L192.0,775.2 L199.6,762.6 L207.5,750.0 L215.6,737.5 L223.9,725.0 L232.5,712.7 L241.4,700.4 L250.6,688.2 L260.2,676.1Z" fill="#ecd80e" stroke="#a89400" stroke-width="1.1"/>
<path d="M316.9,700.9 L322.8,711.9 L328.1,723.0 L333.0,734.1 L337.5,745.1 L341.5,756.0 L345.1,767.0 L348.3,777.8 L351.1,788.7 L353.6,799.5 L355.7,810.2 L357.5,821.0 L359.0,831.7 L360.3,842.5 L361.2,853.3 L361.9,864.1 L362.4,875.0 L362.6,886.0 L362.8,897.2 L363.2,908.5 L363.8,920.1 L364.9,932.0 L367.0,944.5 L375.8,958.9 L375.8,958.9 L389.5,948.6 L395.6,936.5 L399.9,924.1 L402.8,911.5 L404.6,898.8 L405.3,886.2 L405.2,873.6 L404.3,861.0 L402.9,848.6 L400.8,836.4 L398.1,824.3 L394.9,812.3 L391.0,800.6 L386.6,789.1 L381.6,777.7 L376.2,766.6 L370.1,755.8 L363.7,745.1 L356.7,734.7 L349.3,724.6 L341.4,714.6 L333.2,704.9 L324.5,695.3Z" fill="#f0de14" stroke="#a89400" stroke-width="1.1"/>
<path d="M280.5,698.4 L274.7,710.3 L269.1,722.3 L263.7,734.4 L258.6,746.6 L253.8,758.9 L249.3,771.3 L245.0,783.7 L241.0,796.3 L237.4,808.9 L234.1,821.7 L231.1,834.5 L228.4,847.4 L226.1,860.3 L224.1,873.4 L222.5,886.5 L221.3,899.6 L220.4,912.8 L220.1,926.1 L220.5,939.4 L221.7,952.7 L223.8,966.0 L227.3,979.2 L236.8,992.0 L236.8,992.0 L245.3,978.6 L248.2,965.6 L250.2,952.8 L251.7,940.1 L252.9,927.4 L253.9,914.8 L254.8,902.2 L255.7,889.6 L256.8,877.1 L258.0,864.6 L259.3,852.0 L260.7,839.5 L262.3,827.0 L264.0,814.5 L265.9,801.9 L267.9,789.4 L270.1,776.8 L272.4,764.2 L275.0,751.6 L277.8,739.0 L280.7,726.4 L283.9,713.7 L287.4,701.1Z" fill="#e6d00a" stroke="#a89400" stroke-width="1.1"/>
<path d="M161.2,642.2 L150.9,648.0 L140.6,653.5 L130.2,658.6 L119.9,663.4 L109.5,667.9 L99.2,672.1 L88.9,676.0 L78.5,679.7 L68.2,683.1 L57.8,686.2 L47.5,689.2 L37.1,691.9 L26.7,694.5 L16.3,696.8 L5.8,699.0 L-4.7,701.0 L-15.3,702.9 L-26.0,705.0 L-36.8,707.3 L-47.7,709.9 L-58.7,713.0 L-70.0,717.2 L-81.7,728.3 L-81.7,728.3 L-69.6,739.3 L-57.4,742.8 L-45.1,744.6 L-32.9,745.2 L-20.8,744.8 L-8.8,743.5 L3.0,741.5 L14.7,738.9 L26.2,735.9 L37.6,732.3 L48.8,728.3 L59.8,723.9 L70.6,719.0 L81.1,713.7 L91.5,708.0 L101.7,701.9 L111.6,695.4 L121.3,688.5 L130.8,681.3 L140.1,673.8 L149.1,665.9 L158.0,657.8 L166.7,649.3Z" fill="#f2e01a" stroke="#a89400" stroke-width="1.1"/>
<path d="M224.2,572.7 L212.3,563.0 L200.2,553.6 L187.9,544.6 L175.4,536.0 L162.7,527.7 L149.7,519.9 L136.5,512.5 L123.1,505.6 L109.5,499.1 L95.7,493.1 L81.7,487.6 L67.4,482.6 L53.0,478.1 L38.4,474.1 L23.6,470.7 L8.7,467.9 L-6.4,465.6 L-21.6,464.1 L-37.0,463.7 L-52.4,464.4 L-67.9,466.3 L-83.4,470.2 L-98.7,482.1 L-98.7,482.1 L-83.6,493.9 L-69.1,498.5 L-54.7,501.8 L-40.5,504.7 L-26.5,507.2 L-12.5,509.4 L1.4,511.6 L15.2,513.9 L28.9,516.5 L42.6,519.3 L56.3,522.3 L69.9,525.5 L83.5,529.0 L97.0,532.7 L110.6,536.8 L124.1,541.1 L137.7,545.7 L151.2,550.6 L164.8,555.9 L178.3,561.6 L191.8,567.6 L205.3,574.0 L218.8,580.8Z" fill="#eada12" stroke="#a89400" stroke-width="1.1"/>
<path d="M377.1,614.8 L395.2,612.5 L413.1,610.7 L430.9,609.5 L448.6,608.8 L466.0,608.5 L483.4,608.8 L500.6,609.6 L517.6,610.8 L534.5,612.5 L551.3,614.6 L568.0,617.2 L584.6,620.3 L601.0,623.7 L617.4,627.6 L633.8,632.0 L650.0,636.7 L666.2,641.9 L682.5,647.3 L698.9,652.9 L715.4,658.6 L732.1,664.4 L749.4,669.8 L769.2,671.4 L769.2,671.4 L756.6,655.7 L741.4,645.1 L725.5,635.8 L709.2,627.6 L692.5,620.3 L675.7,614.0 L658.6,608.5 L641.4,603.7 L624.0,599.5 L606.6,596.1 L589.1,593.2 L571.5,591.1 L553.9,589.6 L536.2,588.7 L518.5,588.5 L500.7,588.9 L482.9,589.9 L465.1,591.5 L447.3,593.8 L429.4,596.6 L411.6,600.0 L393.7,603.9 L375.8,608.4Z" fill="#e0d414" stroke="#a89400" stroke-width="1.1"/>
<path d="M265.7,701.5 L263.9,716.9 L261.9,732.0 L259.5,747.0 L256.7,761.8 L253.7,776.4 L250.4,790.8 L246.8,805.1 L243.0,819.2 L239.0,833.1 L234.7,847.0 L230.1,860.7 L225.4,874.3 L220.5,887.8 L215.3,901.2 L210.0,914.5 L204.4,927.8 L198.6,941.1 L193.0,954.5 L187.4,968.0 L182.1,981.9 L177.2,996.1 L173.1,1011.2 L175.0,1030.5 L175.0,1030.5 L193.3,1023.6 L205.0,1012.2 L215.0,999.8 L223.9,986.7 L231.8,973.2 L238.9,959.2 L245.2,945.0 L250.9,930.5 L256.0,915.9 L260.6,901.1 L264.7,886.2 L268.3,871.2 L271.4,856.1 L273.9,840.9 L275.9,825.6 L277.4,810.2 L278.5,794.8 L279.1,779.3 L279.2,763.8 L278.9,748.3 L278.1,732.7 L276.9,717.1 L275.4,701.5Z" fill="#ecd80e" stroke="#a89400" stroke-width="1.1"/>
<path d="M413.8,666.2 L420.5,670.8 L427.2,675.4 L433.8,680.0 L440.5,684.6 L447.2,689.2 L453.9,693.7 L460.6,698.2 L467.3,702.7 L474.1,707.2 L480.8,711.6 L487.6,715.9 L494.5,720.2 L501.3,724.4 L508.2,728.6 L515.1,732.7 L522.1,736.7 L529.1,740.7 L536.2,744.4 L543.5,747.8 L551.0,750.9 L558.8,753.5 L567.0,755.4 L577.6,753.3 L577.6,753.3 L574.2,743.1 L568.5,736.8 L562.3,731.4 L555.8,726.4 L549.1,721.8 L542.2,717.5 L535.2,713.5 L528.1,709.6 L520.9,705.9 L513.7,702.2 L506.4,698.5 L499.1,695.0 L491.8,691.6 L484.4,688.3 L477.0,685.0 L469.5,681.8 L462.0,678.7 L454.4,675.6 L446.9,672.6 L439.3,669.7 L431.7,666.7 L424.1,663.9 L416.5,661.0Z" fill="#f0de14" stroke="#a89400" stroke-width="1.1"/>
<path d="M359.1,674.5 L368.3,686.0 L377.4,697.4 L386.4,708.9 L395.4,720.3 L404.5,731.8 L413.5,743.3 L422.5,754.8 L431.4,766.3 L440.4,777.7 L449.4,789.2 L458.5,800.6 L467.5,812.0 L476.6,823.4 L485.6,834.7 L494.7,846.1 L503.9,857.4 L513.1,868.6 L522.5,879.7 L532.1,890.7 L542.0,901.4 L552.3,911.8 L563.3,921.7 L578.0,928.7 L578.0,928.7 L574.7,912.8 L567.7,899.7 L560.0,887.1 L551.7,875.0 L543.1,863.2 L534.1,851.6 L524.9,840.2 L515.5,829.0 L506.0,817.8 L496.5,806.7 L486.8,795.8 L477.0,784.9 L467.0,774.1 L457.0,763.4 L446.9,752.8 L436.8,742.3 L426.5,731.8 L416.2,721.4 L405.7,711.1 L395.3,700.9 L384.7,690.7 L374.1,680.6 L363.5,670.5Z" fill="#e6d00a" stroke="#a89400" stroke-width="1.1"/>
<path d="M165.3,555.0 L148.5,552.6 L131.9,549.9 L115.4,546.9 L99.0,543.6 L82.9,540.0 L66.8,536.1 L50.9,532.0 L35.1,527.6 L19.4,523.0 L3.9,518.2 L-11.6,513.1 L-26.9,507.8 L-42.2,502.3 L-57.4,496.5 L-72.5,490.6 L-87.5,484.4 L-102.5,478.1 L-117.6,471.7 L-132.7,465.4 L-148.1,459.3 L-163.7,453.4 L-179.9,448.1 L-199.1,447.4 L-199.1,447.4 L-188.8,463.9 L-175.4,475.0 L-161.2,484.7 L-146.5,493.6 L-131.4,501.7 L-116.1,509.0 L-100.4,515.7 L-84.6,521.9 L-68.7,527.7 L-52.6,532.9 L-36.4,537.8 L-20.1,542.2 L-3.7,546.1 L12.8,549.6 L29.4,552.6 L46.1,555.3 L62.9,557.5 L79.7,559.3 L96.7,560.7 L113.6,561.7 L130.6,562.3 L147.7,562.6 L164.9,562.5Z" fill="#f2e01a" stroke="#a89400" stroke-width="1.1"/>
<path d="M366.9,644.0 L372.9,648.9 L379.0,653.8 L385.1,658.6 L391.2,663.5 L397.3,668.3 L403.4,673.1 L409.6,677.8 L415.8,682.5 L422.0,687.1 L428.3,691.7 L434.6,696.1 L441.0,700.5 L447.4,704.9 L453.9,709.1 L460.4,713.3 L467.0,717.3 L473.6,721.3 L480.4,725.0 L487.4,728.4 L494.6,731.4 L502.1,733.9 L510.1,735.5 L520.6,732.9 L520.6,732.9 L517.9,722.4 L512.7,716.2 L506.9,710.7 L500.9,705.8 L494.7,701.2 L488.2,697.0 L481.6,693.0 L474.9,689.1 L468.2,685.3 L461.4,681.6 L454.6,677.9 L447.8,674.3 L440.9,670.8 L433.9,667.4 L426.9,664.1 L419.9,660.7 L412.9,657.5 L405.8,654.3 L398.7,651.1 L391.6,648.0 L384.4,644.8 L377.3,641.7 L370.1,638.6Z" fill="#eada12" stroke="#a89400" stroke-width="1.1"/>
<path d="M430.2,652.0 L442.6,654.3 L455.0,656.9 L467.1,659.7 L479.0,662.8 L490.8,666.2 L502.4,669.7 L513.9,673.5 L525.2,677.5 L536.3,681.6 L547.4,686.0 L558.3,690.5 L569.1,695.1 L579.8,700.0 L590.5,705.0 L601.0,710.1 L611.6,715.4 L622.1,720.9 L632.7,726.3 L643.5,731.5 L654.5,736.6 L666.0,741.3 L678.3,745.3 L694.7,744.3 L694.7,744.3 L690.5,728.2 L682.0,717.7 L672.5,708.6 L662.4,700.4 L651.8,693.0 L640.7,686.3 L629.3,680.3 L617.8,674.8 L606.0,669.8 L594.1,665.1 L582.1,661.0 L569.9,657.2 L557.7,653.9 L545.3,651.1 L532.8,648.7 L520.2,646.7 L507.6,645.1 L494.9,643.9 L482.1,643.0 L469.3,642.6 L456.5,642.5 L443.6,642.8 L430.6,643.3Z" fill="#e0d414" stroke="#a89400" stroke-width="1.1"/>
<path d="M383.9,674.5 L390.8,682.2 L397.7,689.8 L404.6,697.5 L411.6,705.1 L418.6,712.7 L425.6,720.2 L432.8,727.6 L439.9,735.0 L447.2,742.3 L454.5,749.5 L461.9,756.6 L469.4,763.7 L477.0,770.6 L484.7,777.4 L492.5,784.1 L500.3,790.6 L508.3,797.1 L516.5,803.2 L525.1,808.9 L534.1,814.1 L543.5,818.7 L553.8,822.2 L568.2,820.5 L568.2,820.5 L566.7,806.1 L561.0,796.9 L554.5,788.7 L547.5,781.1 L540.2,773.9 L532.5,767.2 L524.6,760.7 L516.6,754.4 L508.5,748.2 L500.4,742.0 L492.2,736.0 L483.9,730.0 L475.5,724.1 L467.1,718.3 L458.6,712.6 L450.1,706.9 L441.5,701.2 L432.8,695.6 L424.2,690.1 L415.5,684.5 L406.8,679.0 L398.1,673.5 L389.4,668.0Z" fill="#ecd80e" stroke="#a89400" stroke-width="1.1"/>
<path d="M283.3,699.2 L275.0,713.2 L267.1,727.4 L259.8,741.7 L252.9,756.2 L246.4,770.8 L240.5,785.5 L235.2,800.3 L230.3,815.3 L226.0,830.5 L222.2,845.8 L219.0,861.1 L216.4,876.6 L214.3,892.3 L212.8,908.0 L211.9,923.8 L211.6,939.6 L211.9,955.6 L213.0,971.5 L215.0,987.5 L217.9,1003.4 L221.9,1019.3 L227.4,1034.9 L238.3,1049.3 L238.3,1049.3 L243.0,1032.0 L243.1,1016.0 L242.8,1000.4 L242.3,984.9 L241.8,969.7 L241.4,954.6 L241.2,939.5 L241.3,924.6 L241.7,909.7 L242.5,894.8 L243.6,880.0 L245.2,865.2 L247.1,850.4 L249.3,835.6 L252.0,820.8 L255.1,806.0 L258.6,791.2 L262.5,776.4 L266.9,761.6 L271.7,746.7 L277.0,731.9 L282.8,717.0 L289.1,702.2Z" fill="#f0de14" stroke="#a89400" stroke-width="1.1"/>
<path d="M375.6,618.5 L390.5,629.7 L405.7,640.4 L421.0,650.4 L436.6,659.9 L452.3,668.7 L468.3,676.8 L484.5,684.3 L501.0,691.2 L517.6,697.3 L534.5,702.8 L551.5,707.5 L568.8,711.6 L586.2,714.9 L603.8,717.4 L621.5,719.2 L639.4,720.3 L657.5,720.6 L675.6,719.9 L693.8,718.2 L712.0,715.4 L730.1,711.3 L748.1,705.6 L764.9,694.1 L764.9,694.1 L745.3,689.5 L727.1,689.3 L709.3,689.6 L691.8,689.9 L674.5,690.1 L657.4,690.0 L640.5,689.7 L623.7,689.0 L607.0,687.7 L590.4,685.9 L573.9,683.6 L557.5,680.8 L541.1,677.5 L524.7,673.6 L508.4,669.3 L492.2,664.3 L476.0,658.8 L459.8,652.7 L443.6,646.0 L427.5,638.7 L411.4,630.7 L395.4,622.1 L379.4,612.9Z" fill="#e6d00a" stroke="#a89400" stroke-width="1.1"/>
<path d="M216.1,578.0 L204.2,573.9 L192.3,569.8 L180.4,565.8 L168.5,561.8 L156.6,557.9 L144.7,554.1 L132.7,550.3 L120.8,546.6 L108.8,543.0 L96.8,539.5 L84.8,536.2 L72.7,533.0 L60.6,529.9 L48.5,526.9 L36.4,524.1 L24.2,521.5 L12.0,519.0 L-0.3,517.0 L-12.7,515.6 L-25.3,514.8 L-38.0,514.9 L-51.0,516.5 L-65.6,525.6 L-65.6,525.6 L-55.8,539.7 L-44.5,546.4 L-32.8,551.5 L-20.9,555.7 L-9.0,559.3 L3.2,562.3 L15.4,564.8 L27.6,567.2 L39.9,569.3 L52.2,571.4 L64.5,573.3 L76.9,575.0 L89.3,576.6 L101.7,578.1 L114.1,579.4 L126.6,580.7 L139.0,581.9 L151.5,582.9 L164.0,583.9 L176.6,584.9 L189.1,585.8 L201.6,586.7 L214.2,587.5Z" fill="#f2e01a" stroke="#a89400" stroke-width="1.1"/>
<path d="M395.8,587.6 L408.6,581.2 L421.5,575.3 L434.3,569.9 L447.1,565.0 L460.0,560.6 L472.8,556.6 L485.6,553.1 L498.4,549.9 L511.1,547.2 L523.9,544.9 L536.7,543.0 L549.5,541.4 L562.3,540.2 L575.2,539.4 L588.1,538.9 L601.1,538.8 L614.2,539.0 L627.4,539.4 L640.7,539.8 L654.2,540.2 L668.0,540.4 L682.3,540.2 L698.0,535.2 L698.0,535.2 L685.6,524.0 L671.8,518.5 L657.8,514.4 L643.6,511.5 L629.4,509.5 L615.2,508.4 L601.1,508.1 L587.0,508.5 L573.1,509.5 L559.2,511.0 L545.4,513.2 L531.8,515.9 L518.3,519.3 L504.9,523.2 L491.8,527.6 L478.7,532.6 L465.9,538.2 L453.2,544.2 L440.7,550.8 L428.3,557.8 L416.1,565.4 L404.1,573.4 L392.2,581.8Z" fill="#eada12" stroke="#a89400" stroke-width="1.1"/>
<path d="M314.0,738.5 L309.9,753.8 L306.3,769.2 L303.1,784.6 L300.3,800.0 L298.1,815.5 L296.2,831.0 L294.9,846.5 L294.1,862.0 L293.8,877.6 L294.1,893.1 L294.9,908.6 L296.2,924.0 L298.1,939.5 L300.6,954.9 L303.6,970.2 L307.2,985.4 L311.4,1000.5 L316.4,1015.5 L322.3,1030.1 L329.3,1044.4 L337.4,1058.3 L347.2,1071.4 L363.8,1081.3 L363.8,1081.3 L367.4,1062.6 L365.1,1047.0 L361.9,1032.1 L358.4,1017.6 L354.7,1003.3 L350.9,989.1 L347.0,975.0 L343.4,961.0 L340.0,946.8 L336.9,932.7 L334.1,918.5 L331.5,904.2 L329.1,889.9 L327.1,875.4 L325.3,860.9 L323.8,846.3 L322.6,831.5 L321.8,816.6 L321.3,801.5 L321.1,786.4 L321.3,771.1 L321.9,755.6 L322.9,740.0Z" fill="#e0d414" stroke="#a89400" stroke-width="1.1"/>
<path d="M200.8,694.8 L187.9,701.8 L175.1,708.9 L162.6,716.4 L150.2,724.0 L138.0,732.0 L126.0,740.2 L114.2,748.6 L102.6,757.4 L91.3,766.4 L80.2,775.7 L69.3,785.3 L58.7,795.2 L48.3,805.4 L38.3,815.8 L28.4,826.6 L18.9,837.6 L9.7,848.9 L1.0,860.6 L-7.2,872.8 L-14.8,885.4 L-21.5,898.5 L-27.2,912.4 L-27.8,929.4 L-27.8,929.4 L-12.8,921.8 L-2.4,911.6 L7.3,901.1 L16.6,890.4 L25.7,879.7 L34.7,868.9 L43.5,858.1 L52.4,847.4 L61.5,836.8 L70.7,826.3 L80.0,816.0 L89.4,805.7 L99.0,795.6 L108.7,785.5 L118.6,775.6 L128.6,765.8 L138.9,756.1 L149.3,746.5 L159.9,737.1 L170.8,727.8 L181.8,718.6 L193.1,709.6 L204.5,700.8Z" fill="#ecd80e" stroke="#a89400" stroke-width="1.1"/>
<path d="M421.3,644.0 L428.0,651.3 L434.9,658.4 L442.1,665.1 L449.4,671.6 L456.9,677.8 L464.6,683.7 L472.5,689.3 L480.7,694.5 L489.1,699.3 L497.7,703.7 L506.4,707.8 L515.4,711.4 L524.5,714.6 L533.9,717.4 L543.3,719.7 L552.9,721.6 L562.7,723.0 L572.5,723.6 L582.5,723.5 L592.5,722.4 L602.5,720.2 L612.4,716.5 L621.7,705.8 L621.7,705.8 L611.7,696.2 L602.4,692.8 L593.4,690.4 L584.6,688.4 L576.0,686.8 L567.5,685.4 L559.0,684.2 L550.6,682.8 L542.3,681.3 L534.1,679.6 L525.8,677.8 L517.6,675.8 L509.4,673.5 L501.2,671.1 L492.9,668.5 L484.7,665.6 L476.4,662.5 L468.1,659.1 L459.9,655.4 L451.6,651.5 L443.3,647.2 L435.0,642.6 L426.7,637.6Z" fill="#f0de14" stroke="#a89400" stroke-width="1.1"/>
<path d="M384.4,717.8 L388.9,725.6 L393.3,733.5 L397.8,741.3 L402.3,749.1 L406.9,756.8 L411.5,764.6 L416.1,772.3 L420.8,779.9 L425.6,787.5 L430.4,795.1 L435.4,802.6 L440.3,810.0 L445.4,817.4 L450.6,824.8 L455.8,832.0 L461.1,839.3 L466.6,846.4 L472.2,853.3 L478.2,860.0 L484.5,866.5 L491.3,872.5 L498.9,878.0 L510.2,880.6 L510.2,880.6 L510.7,869.0 L507.3,860.3 L503.2,852.2 L498.7,844.4 L493.8,836.9 L488.7,829.6 L483.3,822.5 L477.8,815.4 L472.3,808.4 L466.7,801.4 L461.0,794.5 L455.3,787.7 L449.5,780.9 L443.6,774.1 L437.7,767.4 L431.8,760.6 L425.8,754.0 L419.8,747.3 L413.7,740.7 L407.7,734.0 L401.6,727.4 L395.5,720.8 L389.4,714.2Z" fill="#e6d00a" stroke="#a89400" stroke-width="1.1"/>
<path d="M185.8,574.2 L170.2,572.8 L154.6,571.2 L139.2,569.4 L123.8,567.3 L108.6,565.0 L93.4,562.5 L78.4,559.9 L63.4,557.0 L48.5,554.0 L33.7,550.8 L19.0,547.5 L4.3,544.0 L-10.4,540.4 L-25.0,536.7 L-39.6,532.9 L-54.1,528.9 L-68.7,524.8 L-83.3,520.9 L-98.1,517.2 L-113.1,513.9 L-128.4,511.1 L-144.2,509.3 L-162.9,513.9 L-162.9,513.9 L-152.4,530.3 L-139.0,539.6 L-124.9,547.4 L-110.3,554.2 L-95.5,560.0 L-80.4,565.1 L-65.1,569.4 L-49.8,573.3 L-34.3,576.7 L-18.8,579.7 L-3.2,582.3 L12.4,584.5 L28.1,586.3 L43.8,587.6 L59.6,588.6 L75.4,589.2 L91.2,589.4 L107.0,589.2 L122.8,588.7 L138.6,587.8 L154.4,586.7 L170.2,585.2 L186.0,583.4Z" fill="#f2e01a" stroke="#a89400" stroke-width="1.1"/>
<path d="M213.0,685.2 L201.1,697.3 L189.1,709.3 L177.2,721.2 L165.1,733.1 L153.1,745.0 L141.0,756.8 L128.9,768.6 L116.8,780.3 L104.7,792.0 L92.7,803.8 L80.6,815.5 L68.5,827.2 L56.5,838.9 L44.4,850.7 L32.4,862.4 L20.4,874.2 L8.5,886.0 L-3.3,898.1 L-14.8,910.3 L-26.0,923.0 L-36.8,936.0 L-47.0,949.9 L-53.2,968.1 L-53.2,968.1 L-34.5,963.4 L-19.9,954.1 L-6.1,944.0 L7.2,933.3 L20.0,922.1 L32.5,910.5 L44.6,898.6 L56.5,886.5 L68.3,874.2 L79.9,861.8 L91.4,849.3 L102.8,836.7 L114.0,823.9 L125.0,810.9 L135.9,797.9 L146.7,784.8 L157.3,771.5 L167.8,758.1 L178.2,744.7 L188.5,731.1 L198.7,717.5 L208.8,703.8 L218.8,690.1Z" fill="#eada12" stroke="#a89400" stroke-width="1.1"/>
<path d="M207.3,699.9 L198.1,706.0 L189.1,712.2 L180.2,718.6 L171.4,725.1 L162.7,731.8 L154.1,738.7 L145.7,745.6 L137.4,752.8 L129.3,760.1 L121.3,767.6 L113.5,775.3 L105.9,783.2 L98.4,791.2 L91.1,799.4 L84.1,807.8 L77.2,816.3 L70.5,825.0 L64.2,834.1 L58.4,843.4 L53.1,853.1 L48.4,863.2 L44.7,874.0 L45.6,887.5 L45.6,887.5 L58.3,882.8 L66.6,875.4 L74.1,867.6 L81.2,859.6 L88.0,851.4 L94.6,843.2 L101.0,834.8 L107.4,826.4 L113.9,818.1 L120.4,809.8 L127.0,801.6 L133.6,793.3 L140.2,785.1 L147.0,776.9 L153.7,768.8 L160.6,760.6 L167.6,752.5 L174.6,744.5 L181.7,736.5 L189.0,728.5 L196.3,720.6 L203.8,712.8 L211.5,705.0Z" fill="#e0d414" stroke="#a89400" stroke-width="1.1"/>
<path d="M271.9,727.9 L267.7,735.1 L263.8,742.4 L259.9,749.8 L256.3,757.3 L252.8,764.8 L249.5,772.4 L246.4,780.1 L243.4,787.8 L240.7,795.7 L238.2,803.6 L236.0,811.5 L233.9,819.5 L232.1,827.6 L230.5,835.8 L229.2,844.0 L228.1,852.2 L227.3,860.5 L226.9,868.8 L227.1,877.2 L227.7,885.6 L229.1,894.0 L231.6,902.4 L238.7,910.6 L238.7,910.6 L245.6,902.3 L248.2,894.3 L250.0,886.4 L251.4,878.5 L252.5,870.7 L253.5,862.9 L254.3,855.1 L255.1,847.3 L256.0,839.6 L256.9,831.8 L257.9,824.0 L259.0,816.3 L260.1,808.5 L261.4,800.8 L262.7,793.0 L264.1,785.2 L265.6,777.4 L267.2,769.5 L268.9,761.7 L270.8,753.8 L272.8,746.0 L274.9,738.1 L277.2,730.2Z" fill="#ecd80e" stroke="#a89400" stroke-width="1.1"/>
<path d="M195.3,579.4 L184.7,574.0 L174.0,568.9 L163.3,563.9 L152.4,559.2 L141.5,554.7 L130.5,550.5 L119.3,546.5 L108.1,542.8 L96.8,539.4 L85.4,536.3 L74.0,533.6 L62.4,531.1 L50.8,529.0 L39.1,527.2 L27.4,525.7 L15.6,524.6 L3.8,523.8 L-8.1,523.7 L-20.0,524.2 L-32.0,525.6 L-43.8,527.9 L-55.6,531.6 L-67.0,541.8 L-67.0,541.8 L-55.0,551.1 L-43.4,554.3 L-32.0,556.4 L-20.7,558.0 L-9.5,559.2 L1.7,560.1 L12.9,560.9 L24.0,561.7 L35.2,562.6 L46.3,563.5 L57.4,564.6 L68.6,565.7 L79.7,566.9 L90.9,568.3 L102.1,569.7 L113.3,571.3 L124.5,573.0 L135.8,574.9 L147.0,576.9 L158.3,579.1 L169.7,581.5 L181.0,584.1 L192.4,586.9Z" fill="#f0de14" stroke="#a89400" stroke-width="1.1"/>
<path d="M238.3,645.6 L226.9,652.1 L215.6,658.8 L204.2,665.5 L192.9,672.3 L181.7,679.2 L170.6,686.2 L159.5,693.4 L148.6,700.6 L137.7,708.1 L126.9,715.6 L116.3,723.3 L105.8,731.2 L95.4,739.2 L85.1,747.4 L75.0,755.8 L65.0,764.3 L55.2,773.1 L45.8,782.2 L36.8,791.8 L28.3,802.0 L20.4,812.9 L13.7,824.9 L12.4,842.5 L12.4,842.5 L30.0,842.3 L42.4,836.6 L53.8,829.8 L64.5,822.4 L74.9,814.6 L84.8,806.3 L94.5,797.8 L104.1,789.2 L113.6,780.4 L123.1,771.7 L132.6,762.8 L142.0,753.9 L151.3,744.9 L160.6,735.9 L169.9,726.8 L179.2,717.7 L188.4,708.6 L197.7,699.4 L206.9,690.2 L216.2,681.0 L225.5,671.8 L234.9,662.6 L244.3,653.4Z" fill="#e6d00a" stroke="#a89400" stroke-width="1.1"/>
<path d="M405.1,585.6 L418.9,585.0 L432.6,584.3 L446.4,583.5 L460.1,582.7 L473.9,581.7 L487.6,580.7 L501.3,579.6 L515.0,578.3 L528.7,576.9 L542.4,575.4 L556.1,573.7 L569.7,571.9 L583.4,570.0 L597.0,567.9 L610.5,565.7 L624.1,563.3 L637.6,560.7 L651.1,557.8 L664.4,554.5 L677.7,550.7 L690.9,546.3 L703.8,540.9 L715.7,530.9 L715.7,530.9 L700.7,526.5 L686.8,526.8 L673.1,527.9 L659.5,529.5 L645.9,531.5 L632.5,533.8 L619.1,536.3 L605.7,538.9 L592.3,541.5 L578.9,544.1 L565.5,546.8 L552.1,549.5 L538.7,552.2 L525.3,555.0 L511.9,557.7 L498.5,560.5 L485.1,563.3 L471.7,566.1 L458.3,568.8 L444.8,571.6 L431.4,574.3 L417.9,576.9 L404.4,579.6Z" fill="#f2e01a" stroke="#a89400" stroke-width="1.1"/>
<path d="M267.3,680.3 L260.1,687.3 L253.1,694.5 L246.4,701.9 L240.0,709.4 L233.9,717.2 L228.0,725.1 L222.5,733.2 L217.2,741.5 L212.3,749.9 L207.8,758.6 L203.6,767.4 L199.7,776.4 L196.3,785.6 L193.2,794.9 L190.4,804.4 L188.1,814.0 L186.2,823.7 L184.9,833.6 L184.3,843.6 L184.5,853.7 L185.6,863.9 L187.9,874.1 L195.8,884.2 L195.8,884.2 L204.0,874.6 L207.2,865.2 L209.7,856.0 L211.9,846.9 L213.8,838.0 L215.6,829.1 L217.4,820.2 L219.3,811.5 L221.3,802.8 L223.6,794.2 L226.0,785.6 L228.6,777.0 L231.4,768.5 L234.3,760.0 L237.5,751.6 L241.0,743.1 L244.6,734.7 L248.5,726.3 L252.7,717.9 L257.2,709.5 L261.9,701.1 L267.0,692.8 L272.3,684.5Z" fill="#eada12" stroke="#a89400" stroke-width="1.1"/>
<path d="M317.7,728.7 L317.9,743.2 L318.3,757.8 L318.7,772.4 L319.2,787.0 L319.8,801.6 L320.6,816.1 L321.5,830.7 L322.6,845.3 L323.8,859.8 L325.2,874.3 L326.8,888.8 L328.6,903.2 L330.6,917.7 L332.8,932.1 L335.2,946.4 L337.8,960.7 L340.6,975.0 L344.0,989.2 L347.9,1003.3 L352.6,1017.2 L358.1,1030.8 L365.2,1044.2 L379.3,1055.9 L379.3,1055.9 L387.2,1039.3 L388.0,1024.3 L387.4,1009.7 L386.1,995.3 L384.2,981.0 L381.8,966.8 L379.1,952.7 L376.2,938.6 L373.3,924.5 L370.2,910.5 L367.1,896.4 L363.9,882.4 L360.7,868.4 L357.4,854.3 L354.1,840.3 L350.7,826.2 L347.3,812.2 L343.9,798.1 L340.4,784.0 L337.0,769.9 L333.6,755.8 L330.2,741.7 L326.9,727.5Z" fill="#e0d414" stroke="#a89400" stroke-width="1.1"/>
</g>
<g filter="url(#b3)">
<path d="M181.3,635.2 L174.0,631.5 L166.6,627.9 L159.2,624.3 L151.8,620.7 L144.3,617.3 L136.9,613.9 L129.3,610.7 L121.8,607.6 L114.2,604.6 L106.5,601.8 L98.8,599.1 L91.1,596.6 L83.3,594.3 L75.4,592.1 L67.6,590.1 L59.7,588.3 L51.7,586.8 L43.6,585.7 L35.5,585.3 L27.2,585.5 L18.7,586.8 L10.0,589.5 L0.0,600.0 L0.0,600.0 L5.8,613.2 L12.9,618.8 L20.2,622.9 L27.7,626.2 L35.3,628.8 L43.0,630.8 L50.7,632.4 L58.5,633.8 L66.3,635.1 L74.2,636.3 L82.1,637.4 L90.0,638.4 L97.9,639.2 L105.9,640.0 L113.9,640.7 L121.9,641.3 L130.0,641.9 L138.0,642.4 L146.1,642.9 L154.3,643.4 L162.4,643.8 L170.5,644.3 L178.7,644.8Z" fill="#f2d810"/>
<path d="M201.7,595.9 L194.5,591.4 L187.4,587.0 L180.2,582.6 L172.9,578.3 L165.6,574.1 L158.3,570.0 L150.9,566.0 L143.4,562.1 L135.9,558.4 L128.3,554.8 L120.6,551.3 L112.9,548.0 L105.2,544.9 L97.3,542.0 L89.4,539.2 L81.5,536.6 L73.4,534.2 L65.3,532.3 L57.0,530.9 L48.5,530.2 L39.8,530.3 L30.8,531.8 L20.0,540.0 L20.0,540.0 L25.2,552.4 L32.2,558.2 L39.4,562.7 L46.8,566.5 L54.4,569.7 L62.0,572.4 L69.8,574.8 L77.7,577.1 L85.5,579.2 L93.4,581.3 L101.3,583.3 L109.2,585.2 L117.2,587.1 L125.2,588.9 L133.2,590.6 L141.3,592.3 L149.4,594.0 L157.5,595.7 L165.6,597.3 L173.8,599.0 L182.0,600.6 L190.1,602.3 L198.3,604.1Z" fill="#eed00a"/>
<path d="M152.1,556.2 L146.7,551.5 L141.1,546.9 L135.4,542.5 L129.6,538.2 L123.8,534.1 L117.8,530.1 L111.6,526.3 L105.4,522.7 L99.1,519.3 L92.6,516.1 L86.1,513.2 L79.4,510.4 L72.7,508.0 L65.8,505.8 L58.9,503.8 L51.9,502.1 L44.8,500.8 L37.6,499.9 L30.3,499.8 L22.9,500.4 L15.5,501.9 L7.9,504.9 L0.0,515.0 L0.0,515.0 L5.9,526.2 L12.2,530.7 L18.5,533.9 L24.8,536.4 L31.1,538.4 L37.4,540.0 L43.7,541.3 L50.0,542.5 L56.4,543.7 L62.7,544.9 L69.1,546.1 L75.5,547.3 L81.9,548.5 L88.3,549.8 L94.8,551.0 L101.3,552.3 L107.9,553.7 L114.4,555.1 L121.1,556.7 L127.7,558.3 L134.4,560.0 L141.1,561.9 L147.9,563.8Z" fill="#f0d20c"/>
<path d="M201.0,695.7 L193.9,692.6 L186.6,689.6 L179.4,686.8 L172.0,684.2 L164.6,681.7 L157.1,679.5 L149.6,677.5 L142.0,675.8 L134.4,674.3 L126.7,673.1 L118.9,672.1 L111.2,671.4 L103.4,671.0 L95.6,670.9 L87.8,671.1 L80.0,671.6 L72.2,672.4 L64.4,673.8 L56.8,675.9 L49.3,678.8 L42.0,682.6 L35.2,687.9 L30.0,700.0 L30.0,700.0 L39.7,708.8 L47.6,711.0 L55.1,712.1 L62.4,712.5 L69.6,712.5 L76.6,712.1 L83.6,711.4 L90.6,710.7 L97.6,710.0 L104.6,709.2 L111.6,708.5 L118.6,707.9 L125.6,707.2 L132.7,706.6 L139.8,706.0 L147.0,705.5 L154.3,705.0 L161.6,704.6 L168.9,704.3 L176.3,704.1 L183.8,704.0 L191.4,704.1 L199.0,704.3Z" fill="#f0d810"/>
<path d="M238.0,675.5 L229.5,677.4 L221.0,679.4 L212.5,681.4 L204.0,683.4 L195.6,685.5 L187.2,687.7 L178.8,689.9 L170.5,692.3 L162.2,694.7 L153.9,697.2 L145.7,699.9 L137.6,702.7 L129.5,705.6 L121.5,708.6 L113.5,711.8 L105.7,715.1 L97.8,718.6 L90.2,722.6 L82.8,727.1 L75.8,732.2 L69.0,738.2 L62.9,745.5 L60.0,760.0 L60.0,760.0 L72.7,767.5 L82.3,767.9 L91.2,766.9 L99.8,765.1 L108.0,762.6 L116.1,759.6 L123.9,756.2 L131.7,752.6 L139.4,748.8 L147.0,744.9 L154.6,740.8 L162.1,736.6 L169.5,732.3 L176.9,727.9 L184.3,723.4 L191.6,718.8 L198.9,714.0 L206.1,709.2 L213.3,704.4 L220.5,699.5 L227.7,694.5 L234.9,689.5 L242.0,684.5Z" fill="#f2dc14"/>
<path d="M421.3,644.8 L429.5,644.3 L437.6,643.8 L445.7,643.4 L453.9,642.9 L462.0,642.4 L470.0,641.9 L478.1,641.3 L486.1,640.7 L494.1,640.0 L502.1,639.2 L510.0,638.4 L517.9,637.4 L525.8,636.3 L533.7,635.1 L541.5,633.8 L549.3,632.4 L557.0,630.8 L564.7,628.8 L572.3,626.2 L579.8,622.9 L587.1,618.8 L594.2,613.2 L600.0,600.0 L600.0,600.0 L590.0,589.5 L581.3,586.8 L572.8,585.5 L564.5,585.3 L556.4,585.7 L548.3,586.8 L540.3,588.3 L532.4,590.1 L524.6,592.1 L516.7,594.3 L508.9,596.6 L501.2,599.1 L493.5,601.8 L485.8,604.6 L478.2,607.6 L470.7,610.7 L463.1,613.9 L455.7,617.3 L448.2,620.7 L440.8,624.3 L433.4,627.9 L426.0,631.5 L418.7,635.2Z" fill="#f0d810"/>
<path d="M422.0,604.5 L430.9,602.5 L439.9,600.6 L448.9,598.8 L457.9,597.0 L466.8,595.2 L475.7,593.5 L484.6,591.8 L493.4,590.1 L502.2,588.4 L511.0,586.6 L519.8,584.9 L528.5,583.1 L537.2,581.2 L545.8,579.3 L554.5,577.3 L563.1,575.2 L571.7,573.1 L580.3,570.5 L588.7,567.5 L597.0,563.9 L605.2,559.4 L613.3,553.5 L620.0,540.0 L620.0,540.0 L608.8,529.8 L598.8,527.4 L589.2,526.6 L579.7,526.8 L570.4,527.8 L561.2,529.5 L552.1,531.7 L543.2,534.1 L534.3,536.9 L525.4,539.8 L516.7,543.0 L508.0,546.4 L499.4,550.0 L490.9,553.8 L482.5,557.9 L474.2,562.0 L465.9,566.4 L457.8,570.9 L449.7,575.6 L441.7,580.4 L433.7,585.3 L425.9,590.3 L418.0,595.5Z" fill="#f2d812"/>
<path d="M431.7,564.0 L440.9,561.8 L450.0,559.7 L459.1,557.7 L468.2,555.9 L477.3,554.2 L486.3,552.6 L495.3,551.1 L504.3,549.7 L513.3,548.3 L522.2,547.0 L531.1,545.8 L540.0,544.6 L548.9,543.4 L557.7,542.2 L566.6,541.0 L575.5,539.9 L584.3,538.7 L593.2,537.3 L602.1,535.4 L611.0,533.1 L619.9,530.2 L629.0,526.0 L638.0,515.0 L638.0,515.0 L628.2,504.6 L618.4,501.2 L608.6,499.4 L598.9,498.5 L589.2,498.5 L579.6,499.1 L570.0,500.3 L560.5,501.8 L551.1,503.7 L541.7,505.8 L532.4,508.2 L523.2,510.9 L514.1,513.9 L505.1,517.1 L496.2,520.6 L487.3,524.3 L478.6,528.2 L470.0,532.4 L461.4,536.7 L453.0,541.3 L444.7,546.0 L436.4,550.9 L428.3,556.0Z" fill="#eed00c"/>
<path d="M399.7,684.9 L410.1,687.2 L420.6,689.2 L431.1,691.2 L441.6,692.9 L452.2,694.5 L462.8,695.8 L473.4,696.9 L484.0,697.8 L494.7,698.5 L505.3,698.9 L516.0,699.1 L526.7,698.9 L537.3,698.5 L548.0,697.8 L558.6,696.9 L569.2,695.6 L579.8,694.0 L590.3,691.8 L600.6,688.9 L610.8,685.2 L620.8,680.4 L630.3,674.1 L638.0,660.0 L638.0,660.0 L625.2,650.5 L614.2,648.5 L603.6,647.8 L593.3,647.9 L583.1,648.6 L573.0,649.7 L562.9,651.1 L552.9,652.6 L542.9,654.2 L532.9,655.7 L522.9,657.3 L512.9,658.9 L502.8,660.6 L492.8,662.2 L482.7,663.8 L472.5,665.4 L462.3,667.0 L452.1,668.5 L441.9,670.0 L431.5,671.4 L421.2,672.7 L410.8,674.0 L400.3,675.1Z" fill="#f0da12"/>
<path d="M419.5,724.4 L428.8,726.9 L438.2,729.3 L447.5,731.7 L456.8,734.1 L466.2,736.4 L475.5,738.6 L484.9,740.7 L494.3,742.8 L503.7,744.7 L513.1,746.5 L522.5,748.2 L532.0,749.7 L541.4,751.2 L550.9,752.4 L560.4,753.5 L569.9,754.5 L579.4,755.3 L588.9,755.6 L598.5,755.4 L608.2,754.6 L617.9,753.0 L627.7,749.9 L638.0,740.0 L638.0,740.0 L629.3,728.6 L620.2,724.1 L610.9,720.9 L601.6,718.5 L592.2,716.8 L582.8,715.5 L573.3,714.7 L563.8,714.0 L554.3,713.5 L544.9,713.1 L535.3,712.8 L525.8,712.6 L516.3,712.5 L506.8,712.5 L497.2,712.6 L487.6,712.8 L478.1,713.1 L468.5,713.4 L458.9,713.8 L449.3,714.2 L439.7,714.7 L430.1,715.2 L420.5,715.6Z" fill="#eed812"/>
<path d="M441.9,534.0 L446.5,533.5 L451.2,533.0 L455.8,532.7 L460.3,532.4 L464.9,532.1 L469.3,531.8 L473.8,531.6 L478.1,531.4 L482.5,531.1 L486.8,530.8 L491.0,530.5 L495.2,530.2 L499.4,529.8 L503.6,529.3 L507.7,528.8 L511.8,528.2 L515.9,527.5 L520.0,526.5 L524.1,524.9 L528.1,522.9 L532.1,520.1 L536.2,516.0 L540.0,505.0 L540.0,505.0 L534.7,494.6 L529.6,491.2 L524.6,489.2 L519.7,488.2 L514.7,487.8 L509.9,488.1 L505.1,488.8 L500.4,489.8 L495.7,491.0 L491.1,492.5 L486.5,494.1 L482.0,495.9 L477.6,497.9 L473.3,500.1 L469.1,502.5 L464.9,505.0 L460.8,507.7 L456.9,510.5 L453.0,513.4 L449.1,516.4 L445.4,519.5 L441.7,522.7 L438.1,526.0Z" fill="#eccc08"/>
<path d="M121.1,526.9 L116.3,524.1 L111.4,521.5 L106.6,518.9 L101.6,516.4 L96.7,514.0 L91.6,511.7 L86.5,509.6 L81.4,507.5 L76.2,505.7 L71.0,503.9 L65.7,502.4 L60.4,501.0 L55.0,499.7 L49.6,498.7 L44.2,497.8 L38.7,497.1 L33.2,496.6 L27.7,496.5 L22.2,496.8 L16.6,497.7 L11.0,499.3 L5.5,502.0 L0.0,510.0 L0.0,510.0 L5.2,518.1 L10.3,521.1 L15.4,523.1 L20.5,524.5 L25.6,525.6 L30.6,526.4 L35.7,526.9 L40.8,527.3 L45.8,527.7 L50.9,528.1 L56.0,528.5 L61.1,528.8 L66.2,529.1 L71.4,529.4 L76.6,529.7 L81.8,530.0 L87.0,530.4 L92.3,530.7 L97.6,531.1 L102.9,531.5 L108.2,532.0 L113.6,532.5 L118.9,533.1Z" fill="#eccc08"/>
</g>
<g filter="url(#b1)">
<path d="M55.0,519.0 L61.5,526.7 L68.2,534.3 L75.1,542.0 L82.1,549.8 L89.1,557.5 L96.0,565.4 L102.9,573.4 L109.5,581.5 L115.9,589.7 L122.0,598.1 L127.8,606.8 L133.0,615.6 L137.8,624.6 L142.0,633.9 L145.6,643.5 L148.4,653.4 L150.5,663.6 L151.7,674.1 L152.0,685.0" stroke="#c89800" stroke-width="4.6" stroke-linecap="round" fill="none"/><path d="M55.0,519.0 L61.5,526.7 L68.2,534.3 L75.1,542.0 L82.1,549.8 L89.1,557.5 L96.0,565.4 L102.9,573.4 L109.5,581.5 L115.9,589.7 L122.0,598.1 L127.8,606.8 L133.0,615.6 L137.8,624.6 L142.0,633.9 L145.6,643.5 L148.4,653.4 L150.5,663.6 L151.7,674.1 L152.0,685.0" stroke="#e0b400" stroke-width="1.6" stroke-linecap="round" fill="none" opacity="0.7"/>
<path d="M106.0,584.0 L109.8,590.2 L113.8,596.3 L117.8,602.4 L121.8,608.4 L126.0,614.4 L130.2,620.3 L134.6,626.2 L139.0,632.0 L143.5,637.7 L148.1,643.3 L152.8,648.9 L157.6,654.4 L162.4,659.8 L167.4,665.1 L172.5,670.3 L177.7,675.4 L183.0,680.3 L188.5,685.2 L194.0,690.0" stroke="#c89800" stroke-width="4.6" stroke-linecap="round" fill="none"/><path d="M106.0,584.0 L109.8,590.2 L113.8,596.3 L117.8,602.4 L121.8,608.4 L126.0,614.4 L130.2,620.3 L134.6,626.2 L139.0,632.0 L143.5,637.7 L148.1,643.3 L152.8,648.9 L157.6,654.4 L162.4,659.8 L167.4,665.1 L172.5,670.3 L177.7,675.4 L183.0,680.3 L188.5,685.2 L194.0,690.0" stroke="#e0b400" stroke-width="1.6" stroke-linecap="round" fill="none" opacity="0.7"/>
<path d="M0.0,588.0 L7.8,590.1 L15.1,593.0 L21.9,596.5 L28.3,600.6 L34.3,605.2 L40.1,610.1 L45.6,615.2 L51.0,620.6 L56.3,626.1 L61.6,631.6 L67.0,637.0 L72.5,642.3 L78.2,647.3 L84.1,652.0 L90.4,656.2 L97.0,659.9 L104.1,663.0 L111.8,665.4 L120.0,667.0" stroke="#c89800" stroke-width="4.6" stroke-linecap="round" fill="none"/><path d="M0.0,588.0 L7.8,590.1 L15.1,593.0 L21.9,596.5 L28.3,600.6 L34.3,605.2 L40.1,610.1 L45.6,615.2 L51.0,620.6 L56.3,626.1 L61.6,631.6 L67.0,637.0 L72.5,642.3 L78.2,647.3 L84.1,652.0 L90.4,656.2 L97.0,659.9 L104.1,663.0 L111.8,665.4 L120.0,667.0" stroke="#e0b400" stroke-width="1.6" stroke-linecap="round" fill="none" opacity="0.7"/>
<path d="M28.0,602.0 L35.1,607.7 L42.6,612.7 L50.5,617.1 L58.6,621.1 L67.0,624.8 L75.5,628.2 L84.1,631.6 L92.6,634.9 L101.0,638.4 L109.2,642.1 L117.1,646.1 L124.7,650.6 L131.8,655.6 L138.4,661.4 L144.4,667.9 L149.8,675.3 L154.4,683.7 L158.2,693.2 L161.0,704.0" stroke="#c89800" stroke-width="4.6" stroke-linecap="round" fill="none"/><path d="M28.0,602.0 L35.1,607.7 L42.6,612.7 L50.5,617.1 L58.6,621.1 L67.0,624.8 L75.5,628.2 L84.1,631.6 L92.6,634.9 L101.0,638.4 L109.2,642.1 L117.1,646.1 L124.7,650.6 L131.8,655.6 L138.4,661.4 L144.4,667.9 L149.8,675.3 L154.4,683.7 L158.2,693.2 L161.0,704.0" stroke="#e0b400" stroke-width="1.6" stroke-linecap="round" fill="none" opacity="0.7"/>
<path d="M194.0,561.0 L197.4,566.9 L200.5,573.0 L203.2,579.2 L205.6,585.4 L207.7,591.8 L209.5,598.2 L211.1,604.7 L212.5,611.3 L213.6,617.9 L214.5,624.6 L215.3,631.3 L215.9,638.0 L216.3,644.7 L216.6,651.5 L216.8,658.2 L217.0,665.0 L217.0,671.7 L217.0,678.4 L217.0,685.0" stroke="#c89800" stroke-width="4.6" stroke-linecap="round" fill="none"/><path d="M194.0,561.0 L197.4,566.9 L200.5,573.0 L203.2,579.2 L205.6,585.4 L207.7,591.8 L209.5,598.2 L211.1,604.7 L212.5,611.3 L213.6,617.9 L214.5,624.6 L215.3,631.3 L215.9,638.0 L216.3,644.7 L216.6,651.5 L216.8,658.2 L217.0,665.0 L217.0,671.7 L217.0,678.4 L217.0,685.0" stroke="#e0b400" stroke-width="1.6" stroke-linecap="round" fill="none" opacity="0.7"/>
<path d="M180.0,621.0 L181.8,623.6 L183.6,626.2 L185.3,628.8 L186.9,631.5 L188.5,634.2 L190.0,636.9 L191.4,639.7 L192.8,642.5 L194.0,645.3 L195.2,648.1 L196.4,651.0 L197.5,653.9 L198.5,656.8 L199.4,659.8 L200.3,662.8 L201.0,665.8 L201.8,668.8 L202.4,671.9 L203.0,675.0" stroke="#c89800" stroke-width="4.6" stroke-linecap="round" fill="none"/><path d="M180.0,621.0 L181.8,623.6 L183.6,626.2 L185.3,628.8 L186.9,631.5 L188.5,634.2 L190.0,636.9 L191.4,639.7 L192.8,642.5 L194.0,645.3 L195.2,648.1 L196.4,651.0 L197.5,653.9 L198.5,656.8 L199.4,659.8 L200.3,662.8 L201.0,665.8 L201.8,668.8 L202.4,671.9 L203.0,675.0" stroke="#e0b400" stroke-width="1.6" stroke-linecap="round" fill="none" opacity="0.7"/>
<path d="M162.0,515.0 L163.9,520.6 L165.8,526.3 L167.5,532.0 L169.2,537.6 L170.8,543.3 L172.3,549.1 L173.8,554.8 L175.1,560.6 L176.4,566.3 L177.6,572.1 L178.8,577.9 L179.8,583.7 L180.8,589.6 L181.7,595.4 L182.5,601.3 L183.2,607.2 L183.9,613.1 L184.5,619.1 L185.0,625.0" stroke="#c89800" stroke-width="4.6" stroke-linecap="round" fill="none"/><path d="M162.0,515.0 L163.9,520.6 L165.8,526.3 L167.5,532.0 L169.2,537.6 L170.8,543.3 L172.3,549.1 L173.8,554.8 L175.1,560.6 L176.4,566.3 L177.6,572.1 L178.8,577.9 L179.8,583.7 L180.8,589.6 L181.7,595.4 L182.5,601.3 L183.2,607.2 L183.9,613.1 L184.5,619.1 L185.0,625.0" stroke="#e0b400" stroke-width="1.6" stroke-linecap="round" fill="none" opacity="0.7"/>
<path d="M263.0,551.0 L264.7,557.0 L266.1,563.0 L267.3,569.1 L268.3,575.1 L269.1,581.2 L269.8,587.3 L270.3,593.5 L270.7,599.6 L271.0,605.7 L271.4,611.9 L271.6,618.0 L272.0,624.2 L272.3,630.4 L272.7,636.5 L273.3,642.6 L273.9,648.7 L274.8,654.9 L275.8,660.9 L277.0,667.0" stroke="#c89800" stroke-width="4.6" stroke-linecap="round" fill="none"/><path d="M263.0,551.0 L264.7,557.0 L266.1,563.0 L267.3,569.1 L268.3,575.1 L269.1,581.2 L269.8,587.3 L270.3,593.5 L270.7,599.6 L271.0,605.7 L271.4,611.9 L271.6,618.0 L272.0,624.2 L272.3,630.4 L272.7,636.5 L273.3,642.6 L273.9,648.7 L274.8,654.9 L275.8,660.9 L277.0,667.0" stroke="#e0b400" stroke-width="1.6" stroke-linecap="round" fill="none" opacity="0.7"/>
<path d="M282.0,580.0 L282.8,585.2 L283.7,590.5 L284.5,595.7 L285.3,601.0 L286.1,606.2 L286.8,611.5 L287.6,616.7 L288.3,622.0 L289.0,627.3 L289.7,632.5 L290.3,637.8 L291.0,643.1 L291.6,648.3 L292.2,653.6 L292.8,658.9 L293.4,664.2 L293.9,669.4 L294.5,674.7 L295.0,680.0" stroke="#c89800" stroke-width="4.6" stroke-linecap="round" fill="none"/><path d="M282.0,580.0 L282.8,585.2 L283.7,590.5 L284.5,595.7 L285.3,601.0 L286.1,606.2 L286.8,611.5 L287.6,616.7 L288.3,622.0 L289.0,627.3 L289.7,632.5 L290.3,637.8 L291.0,643.1 L291.6,648.3 L292.2,653.6 L292.8,658.9 L293.4,664.2 L293.9,669.4 L294.5,674.7 L295.0,680.0" stroke="#e0b400" stroke-width="1.6" stroke-linecap="round" fill="none" opacity="0.7"/>
<path d="M365.0,561.0 L363.0,566.2 L361.3,571.4 L359.8,576.6 L358.5,582.0 L357.3,587.3 L356.3,592.7 L355.3,598.1 L354.4,603.5 L353.6,608.9 L352.7,614.3 L351.9,619.7 L351.0,625.1 L350.0,630.5 L348.9,635.8 L347.7,641.2 L346.4,646.4 L344.8,651.7 L343.0,656.9 L341.0,662.0" stroke="#c89800" stroke-width="4.6" stroke-linecap="round" fill="none"/><path d="M365.0,561.0 L363.0,566.2 L361.3,571.4 L359.8,576.6 L358.5,582.0 L357.3,587.3 L356.3,592.7 L355.3,598.1 L354.4,603.5 L353.6,608.9 L352.7,614.3 L351.9,619.7 L351.0,625.1 L350.0,630.5 L348.9,635.8 L347.7,641.2 L346.4,646.4 L344.8,651.7 L343.0,656.9 L341.0,662.0" stroke="#e0b400" stroke-width="1.6" stroke-linecap="round" fill="none" opacity="0.7"/>
<path d="M341.0,584.0 L339.4,589.7 L337.8,595.3 L336.3,601.0 L335.0,606.7 L333.6,612.5 L332.4,618.2 L331.2,623.9 L330.1,629.7 L329.1,635.5 L328.1,641.3 L327.3,647.1 L326.5,652.9 L325.7,658.7 L325.1,664.6 L324.5,670.4 L324.0,676.3 L323.6,682.2 L323.3,688.1 L323.0,694.0" stroke="#c89800" stroke-width="4.6" stroke-linecap="round" fill="none"/><path d="M341.0,584.0 L339.4,589.7 L337.8,595.3 L336.3,601.0 L335.0,606.7 L333.6,612.5 L332.4,618.2 L331.2,623.9 L330.1,629.7 L329.1,635.5 L328.1,641.3 L327.3,647.1 L326.5,652.9 L325.7,658.7 L325.1,664.6 L324.5,670.4 L324.0,676.3 L323.6,682.2 L323.3,688.1 L323.0,694.0" stroke="#e0b400" stroke-width="1.6" stroke-linecap="round" fill="none" opacity="0.7"/>
<path d="M504.0,525.0 L501.1,528.2 L498.2,531.4 L495.4,534.7 L492.6,538.0 L489.9,541.4 L487.3,544.8 L484.7,548.3 L482.2,551.7 L479.8,555.3 L477.4,558.9 L475.1,562.5 L472.9,566.2 L470.7,569.9 L468.6,573.6 L466.6,577.4 L464.6,581.2 L462.7,585.1 L460.8,589.0 L459.0,593.0" stroke="#c89800" stroke-width="4.6" stroke-linecap="round" fill="none"/><path d="M504.0,525.0 L501.1,528.2 L498.2,531.4 L495.4,534.7 L492.6,538.0 L489.9,541.4 L487.3,544.8 L484.7,548.3 L482.2,551.7 L479.8,555.3 L477.4,558.9 L475.1,562.5 L472.9,566.2 L470.7,569.9 L468.6,573.6 L466.6,577.4 L464.6,581.2 L462.7,585.1 L460.8,589.0 L459.0,593.0" stroke="#e0b400" stroke-width="1.6" stroke-linecap="round" fill="none" opacity="0.7"/>
<path d="M432.0,570.0 L430.5,572.2 L429.1,574.4 L427.7,576.6 L426.3,578.8 L425.0,581.1 L423.7,583.3 L422.4,585.6 L421.1,587.9 L419.9,590.2 L418.7,592.5 L417.5,594.8 L416.3,597.2 L415.2,599.6 L414.1,601.9 L413.0,604.3 L412.0,606.7 L411.0,609.1 L410.0,611.6 L409.0,614.0" stroke="#c89800" stroke-width="4.6" stroke-linecap="round" fill="none"/><path d="M432.0,570.0 L430.5,572.2 L429.1,574.4 L427.7,576.6 L426.3,578.8 L425.0,581.1 L423.7,583.3 L422.4,585.6 L421.1,587.9 L419.9,590.2 L418.7,592.5 L417.5,594.8 L416.3,597.2 L415.2,599.6 L414.1,601.9 L413.0,604.3 L412.0,606.7 L411.0,609.1 L410.0,611.6 L409.0,614.0" stroke="#e0b400" stroke-width="1.6" stroke-linecap="round" fill="none" opacity="0.7"/>
<path d="M440.0,614.0 L438.3,616.3 L436.5,618.7 L434.8,621.1 L433.1,623.4 L431.4,625.8 L429.7,628.2 L428.0,630.6 L426.4,633.0 L424.7,635.4 L423.1,637.8 L421.5,640.2 L419.9,642.7 L418.3,645.1 L416.7,647.6 L415.1,650.1 L413.6,652.5 L412.0,655.0 L410.5,657.5 L409.0,660.0" stroke="#c89800" stroke-width="4.6" stroke-linecap="round" fill="none"/><path d="M440.0,614.0 L438.3,616.3 L436.5,618.7 L434.8,621.1 L433.1,623.4 L431.4,625.8 L429.7,628.2 L428.0,630.6 L426.4,633.0 L424.7,635.4 L423.1,637.8 L421.5,640.2 L419.9,642.7 L418.3,645.1 L416.7,647.6 L415.1,650.1 L413.6,652.5 L412.0,655.0 L410.5,657.5 L409.0,660.0" stroke="#e0b400" stroke-width="1.6" stroke-linecap="round" fill="none" opacity="0.7"/>
<path d="M478.0,610.0 L475.8,612.4 L473.7,614.7 L471.5,617.1 L469.3,619.5 L467.2,621.9 L465.1,624.3 L462.9,626.7 L460.8,629.1 L458.7,631.5 L456.6,633.9 L454.5,636.3 L452.4,638.8 L450.3,641.2 L448.3,643.7 L446.2,646.1 L444.1,648.6 L442.1,651.0 L440.0,653.5 L438.0,656.0" stroke="#c89800" stroke-width="4.6" stroke-linecap="round" fill="none"/><path d="M478.0,610.0 L475.8,612.4 L473.7,614.7 L471.5,617.1 L469.3,619.5 L467.2,621.9 L465.1,624.3 L462.9,626.7 L460.8,629.1 L458.7,631.5 L456.6,633.9 L454.5,636.3 L452.4,638.8 L450.3,641.2 L448.3,643.7 L446.2,646.1 L444.1,648.6 L442.1,651.0 L440.0,653.5 L438.0,656.0" stroke="#e0b400" stroke-width="1.6" stroke-linecap="round" fill="none" opacity="0.7"/>
<path d="M534.0,589.0 L530.9,591.5 L527.7,594.1 L524.7,596.7 L521.6,599.4 L518.6,602.0 L515.6,604.8 L512.7,607.5 L509.8,610.3 L506.9,613.1 L504.1,615.9 L501.3,618.8 L498.5,621.7 L495.8,624.7 L493.0,627.6 L490.4,630.6 L487.7,633.7 L485.1,636.8 L482.5,639.9 L480.0,643.0" stroke="#c89800" stroke-width="4.6" stroke-linecap="round" fill="none"/><path d="M534.0,589.0 L530.9,591.5 L527.7,594.1 L524.7,596.7 L521.6,599.4 L518.6,602.0 L515.6,604.8 L512.7,607.5 L509.8,610.3 L506.9,613.1 L504.1,615.9 L501.3,618.8 L498.5,621.7 L495.8,624.7 L493.0,627.6 L490.4,630.6 L487.7,633.7 L485.1,636.8 L482.5,639.9 L480.0,643.0" stroke="#e0b400" stroke-width="1.6" stroke-linecap="round" fill="none" opacity="0.7"/>
<path d="M413.0,656.0 L411.8,658.6 L410.6,661.2 L409.3,663.7 L408.1,666.2 L406.7,668.7 L405.3,671.2 L403.9,673.6 L402.5,676.0 L401.0,678.4 L399.5,680.8 L397.9,683.2 L396.3,685.5 L394.7,687.8 L393.0,690.0 L391.3,692.3 L389.5,694.5 L387.7,696.7 L385.9,698.9 L384.0,701.0" stroke="#c89800" stroke-width="4.6" stroke-linecap="round" fill="none"/><path d="M413.0,656.0 L411.8,658.6 L410.6,661.2 L409.3,663.7 L408.1,666.2 L406.7,668.7 L405.3,671.2 L403.9,673.6 L402.5,676.0 L401.0,678.4 L399.5,680.8 L397.9,683.2 L396.3,685.5 L394.7,687.8 L393.0,690.0 L391.3,692.3 L389.5,694.5 L387.7,696.7 L385.9,698.9 L384.0,701.0" stroke="#e0b400" stroke-width="1.6" stroke-linecap="round" fill="none" opacity="0.7"/>
<path d="M559.0,552.0 L555.5,553.2 L552.0,554.5 L548.5,555.8 L545.1,557.0 L541.6,558.4 L538.1,559.7 L534.7,561.1 L531.2,562.4 L527.8,563.8 L524.4,565.3 L521.0,566.7 L517.6,568.2 L514.2,569.6 L510.8,571.2 L507.4,572.7 L504.1,574.2 L500.7,575.8 L497.3,577.4 L494.0,579.0" stroke="#c89800" stroke-width="4.6" stroke-linecap="round" fill="none"/><path d="M559.0,552.0 L555.5,553.2 L552.0,554.5 L548.5,555.8 L545.1,557.0 L541.6,558.4 L538.1,559.7 L534.7,561.1 L531.2,562.4 L527.8,563.8 L524.4,565.3 L521.0,566.7 L517.6,568.2 L514.2,569.6 L510.8,571.2 L507.4,572.7 L504.1,574.2 L500.7,575.8 L497.3,577.4 L494.0,579.0" stroke="#e0b400" stroke-width="1.6" stroke-linecap="round" fill="none" opacity="0.7"/>
<path d="M598.0,568.0 L594.9,569.2 L591.9,570.5 L588.9,571.8 L585.9,573.2 L583.0,574.6 L580.1,576.1 L577.3,577.7 L574.4,579.3 L571.7,581.0 L568.9,582.7 L566.2,584.5 L563.6,586.3 L560.9,588.3 L558.4,590.2 L555.8,592.3 L553.3,594.4 L550.8,596.5 L548.4,598.7 L546.0,601.0" stroke="#c89800" stroke-width="4.6" stroke-linecap="round" fill="none"/><path d="M598.0,568.0 L594.9,569.2 L591.9,570.5 L588.9,571.8 L585.9,573.2 L583.0,574.6 L580.1,576.1 L577.3,577.7 L574.4,579.3 L571.7,581.0 L568.9,582.7 L566.2,584.5 L563.6,586.3 L560.9,588.3 L558.4,590.2 L555.8,592.3 L553.3,594.4 L550.8,596.5 L548.4,598.7 L546.0,601.0" stroke="#e0b400" stroke-width="1.6" stroke-linecap="round" fill="none" opacity="0.7"/>
<path d="M636.0,610.0 L631.7,612.0 L627.5,613.9 L623.2,615.9 L619.0,618.0 L614.8,620.0 L610.6,622.1 L606.4,624.2 L602.2,626.3 L598.1,628.4 L593.9,630.6 L589.8,632.8 L585.6,635.0 L581.5,637.2 L577.4,639.4 L573.3,641.7 L569.2,644.0 L565.1,646.3 L561.1,648.6 L557.0,651.0" stroke="#c89800" stroke-width="4.6" stroke-linecap="round" fill="none"/><path d="M636.0,610.0 L631.7,612.0 L627.5,613.9 L623.2,615.9 L619.0,618.0 L614.8,620.0 L610.6,622.1 L606.4,624.2 L602.2,626.3 L598.1,628.4 L593.9,630.6 L589.8,632.8 L585.6,635.0 L581.5,637.2 L577.4,639.4 L573.3,641.7 L569.2,644.0 L565.1,646.3 L561.1,648.6 L557.0,651.0" stroke="#e0b400" stroke-width="1.6" stroke-linecap="round" fill="none" opacity="0.7"/>
<path d="M630.0,541.0 L627.6,541.8 L625.3,542.6 L622.9,543.5 L620.6,544.4 L618.3,545.3 L616.0,546.2 L613.8,547.2 L611.5,548.3 L609.3,549.4 L607.1,550.5 L604.9,551.6 L602.7,552.8 L600.6,554.0 L598.4,555.2 L596.3,556.5 L594.2,557.8 L592.1,559.2 L590.1,560.6 L588.0,562.0" stroke="#c89800" stroke-width="4.6" stroke-linecap="round" fill="none"/><path d="M630.0,541.0 L627.6,541.8 L625.3,542.6 L622.9,543.5 L620.6,544.4 L618.3,545.3 L616.0,546.2 L613.8,547.2 L611.5,548.3 L609.3,549.4 L607.1,550.5 L604.9,551.6 L602.7,552.8 L600.6,554.0 L598.4,555.2 L596.3,556.5 L594.2,557.8 L592.1,559.2 L590.1,560.6 L588.0,562.0" stroke="#e0b400" stroke-width="1.6" stroke-linecap="round" fill="none" opacity="0.7"/>
<path d="M636.0,577.0 L633.9,577.5 L631.8,578.1 L629.8,578.8 L627.7,579.5 L625.7,580.2 L623.7,580.9 L621.8,581.8 L619.8,582.6 L617.9,583.5 L616.0,584.5 L614.1,585.5 L612.3,586.5 L610.5,587.6 L608.7,588.7 L606.9,589.9 L605.1,591.1 L603.4,592.3 L601.7,593.7 L600.0,595.0" stroke="#c89800" stroke-width="4.6" stroke-linecap="round" fill="none"/><path d="M636.0,577.0 L633.9,577.5 L631.8,578.1 L629.8,578.8 L627.7,579.5 L625.7,580.2 L623.7,580.9 L621.8,581.8 L619.8,582.6 L617.9,583.5 L616.0,584.5 L614.1,585.5 L612.3,586.5 L610.5,587.6 L608.7,588.7 L606.9,589.9 L605.1,591.1 L603.4,592.3 L601.7,593.7 L600.0,595.0" stroke="#e0b400" stroke-width="1.6" stroke-linecap="round" fill="none" opacity="0.7"/>
<path d="M526.0,693.0 L523.2,693.7 L520.5,694.4 L517.7,695.1 L515.0,695.9 L512.2,696.6 L509.5,697.3 L506.7,698.1 L504.0,698.9 L501.2,699.6 L498.5,700.4 L495.8,701.2 L493.0,702.0 L490.3,702.9 L487.6,703.7 L484.9,704.5 L482.1,705.4 L479.4,706.2 L476.7,707.1 L474.0,708.0" stroke="#c89800" stroke-width="4.6" stroke-linecap="round" fill="none"/><path d="M526.0,693.0 L523.2,693.7 L520.5,694.4 L517.7,695.1 L515.0,695.9 L512.2,696.6 L509.5,697.3 L506.7,698.1 L504.0,698.9 L501.2,699.6 L498.5,700.4 L495.8,701.2 L493.0,702.0 L490.3,702.9 L487.6,703.7 L484.9,704.5 L482.1,705.4 L479.4,706.2 L476.7,707.1 L474.0,708.0" stroke="#e0b400" stroke-width="1.6" stroke-linecap="round" fill="none" opacity="0.7"/>
<path d="M588.0,705.0 L583.6,704.4 L579.3,703.8 L574.9,703.3 L570.6,702.8 L566.2,702.2 L561.9,701.7 L557.5,701.3 L553.1,700.8 L548.8,700.4 L544.4,699.9 L540.0,699.5 L535.7,699.2 L531.3,698.8 L526.9,698.4 L522.5,698.1 L518.1,697.8 L513.8,697.5 L509.4,697.3 L505.0,697.0" stroke="#c89800" stroke-width="4.6" stroke-linecap="round" fill="none"/><path d="M588.0,705.0 L583.6,704.4 L579.3,703.8 L574.9,703.3 L570.6,702.8 L566.2,702.2 L561.9,701.7 L557.5,701.3 L553.1,700.8 L548.8,700.4 L544.4,699.9 L540.0,699.5 L535.7,699.2 L531.3,698.8 L526.9,698.4 L522.5,698.1 L518.1,697.8 L513.8,697.5 L509.4,697.3 L505.0,697.0" stroke="#e0b400" stroke-width="1.6" stroke-linecap="round" fill="none" opacity="0.7"/>
<path d="M406.0,515.0 L406.9,518.9 L407.7,522.8 L408.5,526.7 L409.3,530.7 L410.1,534.6 L410.8,538.5 L411.6,542.4 L412.2,546.4 L412.9,550.3 L413.5,554.3 L414.1,558.2 L414.7,562.2 L415.3,566.1 L415.8,570.1 L416.3,574.1 L416.8,578.1 L417.2,582.0 L417.6,586.0 L418.0,590.0" stroke="#c89800" stroke-width="4.6" stroke-linecap="round" fill="none"/><path d="M406.0,515.0 L406.9,518.9 L407.7,522.8 L408.5,526.7 L409.3,530.7 L410.1,534.6 L410.8,538.5 L411.6,542.4 L412.2,546.4 L412.9,550.3 L413.5,554.3 L414.1,558.2 L414.7,562.2 L415.3,566.1 L415.8,570.1 L416.3,574.1 L416.8,578.1 L417.2,582.0 L417.6,586.0 L418.0,590.0" stroke="#e0b400" stroke-width="1.6" stroke-linecap="round" fill="none" opacity="0.7"/>
</g>
<g fill="#f0c600" stroke="#c49200" stroke-width="1.2" filter="url(#b1)"><rect x="236.9" y="589.4" width="6.5" height="70.0" rx="3"/><rect x="243.9" y="588.2" width="6.5" height="65.7" rx="3"/><rect x="248.1" y="587.0" width="6.5" height="83.3" rx="3"/><rect x="253.5" y="585.8" width="6.5" height="73.6" rx="3"/><rect x="261.7" y="584.6" width="6.5" height="84.5" rx="3"/><rect x="265.6" y="583.4" width="6.5" height="85.4" rx="3"/><rect x="272.1" y="582.2" width="6.5" height="84.1" rx="3"/><rect x="276.1" y="581.0" width="6.5" height="94.4" rx="3"/><rect x="283.3" y="579.8" width="6.5" height="91.8" rx="3"/><rect x="289.4" y="578.6" width="6.5" height="93.9" rx="3"/><rect x="295.4" y="577.4" width="6.5" height="89.4" rx="3"/><rect x="299.8" y="576.2" width="6.5" height="94.5" rx="3"/><rect x="304.8" y="575.0" width="6.5" height="96.5" rx="3"/><rect x="310.0" y="576.2" width="6.5" height="99.6" rx="3"/><rect x="317.5" y="577.4" width="6.5" height="88.2" rx="3"/><rect x="321.9" y="578.6" width="6.5" height="89.5" rx="3"/><rect x="326.3" y="579.8" width="6.5" height="98.0" rx="3"/><rect x="333.0" y="581.0" width="6.5" height="84.2" rx="3"/><rect x="339.3" y="582.2" width="6.5" height="82.9" rx="3"/><rect x="345.6" y="583.4" width="6.5" height="80.7" rx="3"/><rect x="348.6" y="584.6" width="6.5" height="77.7" rx="3"/><rect x="355.1" y="585.8" width="6.5" height="79.1" rx="3"/><rect x="362.4" y="587.0" width="6.5" height="79.6" rx="3"/><rect x="366.3" y="588.2" width="6.5" height="65.5" rx="3"/></g>
<g fill="#f2c600" stroke="#b88c00" stroke-width="1" filter="url(#b1)"><circle cx="342.9" cy="595.4" r="3.2"/><circle cx="293.2" cy="550.8" r="2.6"/><circle cx="334.8" cy="533.5" r="3.0"/><circle cx="290.2" cy="571.4" r="2.8"/><circle cx="372.4" cy="565.9" r="3.2"/><circle cx="348.0" cy="585.9" r="2.8"/><circle cx="357.3" cy="572.3" r="3.8"/><circle cx="370.8" cy="566.3" r="2.8"/><circle cx="308.9" cy="563.1" r="2.9"/><circle cx="291.9" cy="530.8" r="3.8"/><circle cx="309.2" cy="583.1" r="2.9"/><circle cx="376.9" cy="554.5" r="3.0"/><circle cx="258.7" cy="569.2" r="3.6"/><circle cx="320.1" cy="562.7" r="3.1"/><circle cx="302.3" cy="598.6" r="3.6"/><circle cx="237.6" cy="550.3" r="3.5"/><circle cx="314.9" cy="520.3" r="2.7"/><circle cx="278.7" cy="548.7" r="3.2"/><circle cx="317.1" cy="521.3" r="3.6"/><circle cx="346.8" cy="565.6" r="2.7"/><circle cx="330.4" cy="559.9" r="2.9"/><circle cx="287.7" cy="568.1" r="3.8"/><circle cx="279.1" cy="547.3" r="3.2"/><circle cx="355.0" cy="575.6" r="2.8"/><circle cx="326.4" cy="563.4" r="3.3"/><circle cx="270.3" cy="541.8" r="3.5"/><circle cx="282.7" cy="572.2" r="3.0"/><circle cx="239.5" cy="584.5" r="2.7"/><circle cx="351.4" cy="576.2" r="3.9"/><circle cx="355.9" cy="540.7" r="2.6"/><circle cx="322.9" cy="527.4" r="2.7"/><circle cx="282.7" cy="562.0" r="3.7"/><circle cx="285.9" cy="523.1" r="3.6"/><circle cx="292.3" cy="597.1" r="2.9"/><circle cx="332.4" cy="580.0" r="3.2"/><circle cx="286.1" cy="591.9" r="3.4"/><circle cx="304.0" cy="593.1" r="3.0"/><circle cx="295.9" cy="537.5" r="3.7"/><circle cx="248.8" cy="575.9" r="3.5"/><circle cx="259.7" cy="557.5" r="4.0"/><circle cx="337.5" cy="573.6" r="3.3"/><circle cx="331.0" cy="563.0" r="3.7"/><circle cx="313.5" cy="527.2" r="3.9"/><circle cx="301.5" cy="537.1" r="3.5"/><circle cx="262.9" cy="590.7" r="3.1"/><circle cx="342.8" cy="592.3" r="3.5"/><circle cx="298.0" cy="528.6" r="3.7"/><circle cx="243.0" cy="570.2" r="2.6"/><circle cx="232.1" cy="547.1" r="3.6"/><circle cx="318.5" cy="532.1" r="3.8"/><circle cx="358.2" cy="584.7" r="3.1"/><circle cx="353.0" cy="577.9" r="3.2"/><circle cx="233.5" cy="576.9" r="2.7"/><circle cx="261.8" cy="541.9" r="3.3"/><circle cx="270.7" cy="560.1" r="3.3"/><circle cx="321.4" cy="546.8" r="2.5"/><circle cx="349.4" cy="571.7" r="4.0"/><circle cx="376.6" cy="571.5" r="3.3"/><circle cx="337.7" cy="578.6" r="2.8"/><circle cx="286.9" cy="529.9" r="2.9"/><circle cx="297.5" cy="599.1" r="3.6"/><circle cx="253.1" cy="570.4" r="3.6"/><circle cx="322.2" cy="557.8" r="2.7"/><circle cx="263.0" cy="582.8" r="2.6"/><circle cx="335.4" cy="566.5" r="3.1"/><circle cx="295.8" cy="527.3" r="2.5"/><circle cx="351.6" cy="567.9" r="3.8"/><circle cx="341.6" cy="547.1" r="3.8"/><circle cx="346.0" cy="548.5" r="3.6"/><circle cx="279.2" cy="572.3" r="3.4"/><circle cx="355.8" cy="577.7" r="3.7"/><circle cx="346.2" cy="545.8" r="2.7"/><circle cx="361.1" cy="537.5" r="4.0"/><circle cx="245.5" cy="540.8" r="3.1"/><circle cx="317.6" cy="580.7" r="3.6"/><circle cx="269.8" cy="591.1" r="3.3"/><circle cx="225.3" cy="573.0" r="2.7"/><circle cx="268.1" cy="561.4" r="3.9"/><circle cx="254.0" cy="561.7" r="2.8"/><circle cx="258.0" cy="545.2" r="2.7"/><circle cx="349.0" cy="565.3" r="3.4"/><circle cx="224.6" cy="555.3" r="3.9"/><circle cx="365.9" cy="545.4" r="3.2"/><circle cx="250.1" cy="556.1" r="3.1"/><circle cx="369.1" cy="569.7" r="2.9"/><circle cx="353.7" cy="565.3" r="3.6"/><circle cx="255.6" cy="569.9" r="3.5"/><circle cx="304.4" cy="563.8" r="3.4"/><circle cx="226.9" cy="552.6" r="3.1"/><circle cx="302.4" cy="554.5" r="2.5"/><circle cx="269.0" cy="548.4" r="2.6"/><circle cx="334.0" cy="578.5" r="3.0"/><circle cx="230.6" cy="544.6" r="3.0"/><circle cx="324.5" cy="589.2" r="2.5"/><circle cx="266.2" cy="575.7" r="3.1"/><circle cx="356.5" cy="569.8" r="3.4"/><circle cx="299.7" cy="518.9" r="3.0"/><circle cx="270.5" cy="536.8" r="2.8"/><circle cx="353.0" cy="536.8" r="3.9"/><circle cx="333.3" cy="523.8" r="2.7"/><circle cx="335.5" cy="561.8" r="3.1"/><circle cx="279.8" cy="534.3" r="3.3"/><circle cx="301.5" cy="548.9" r="3.5"/><circle cx="338.0" cy="566.3" r="3.6"/><circle cx="279.2" cy="535.6" r="2.9"/><circle cx="319.8" cy="540.6" r="2.5"/><circle cx="300.2" cy="566.1" r="3.7"/><circle cx="356.8" cy="588.8" r="2.8"/><circle cx="278.9" cy="590.2" r="3.0"/><circle cx="281.3" cy="569.3" r="3.1"/><circle cx="337.4" cy="563.1" r="3.9"/><circle cx="292.0" cy="581.5" r="3.5"/><circle cx="332.3" cy="544.7" r="3.1"/><circle cx="284.3" cy="523.5" r="3.4"/><circle cx="314.7" cy="576.1" r="3.6"/><circle cx="279.7" cy="521.7" r="3.7"/><circle cx="274.3" cy="567.3" r="3.8"/><circle cx="279.6" cy="530.0" r="3.5"/><circle cx="264.8" cy="576.3" r="3.4"/><circle cx="233.0" cy="563.8" r="3.9"/><circle cx="328.6" cy="538.6" r="3.1"/><circle cx="345.0" cy="548.3" r="3.7"/><circle cx="344.9" cy="575.5" r="3.3"/><circle cx="327.1" cy="523.3" r="2.7"/><circle cx="253.0" cy="537.6" r="2.7"/><circle cx="329.8" cy="533.0" r="3.9"/><circle cx="322.6" cy="588.0" r="3.0"/><circle cx="261.0" cy="534.4" r="3.3"/><circle cx="274.3" cy="586.6" r="3.1"/><circle cx="342.0" cy="541.9" r="3.2"/><circle cx="297.8" cy="581.1" r="3.9"/><circle cx="270.8" cy="596.0" r="3.4"/><circle cx="332.2" cy="557.9" r="3.9"/><circle cx="308.5" cy="528.7" r="3.6"/><circle cx="290.8" cy="532.3" r="3.5"/><circle cx="301.6" cy="566.1" r="3.5"/><circle cx="224.8" cy="566.4" r="2.9"/><circle cx="332.9" cy="522.0" r="3.8"/><circle cx="331.1" cy="556.3" r="2.7"/><circle cx="306.5" cy="585.0" r="2.7"/><circle cx="306.4" cy="564.6" r="3.9"/><circle cx="259.3" cy="585.5" r="3.2"/><circle cx="296.9" cy="522.3" r="3.1"/><circle cx="275.6" cy="557.1" r="2.9"/><circle cx="307.6" cy="583.0" r="3.0"/><circle cx="258.9" cy="549.0" r="3.0"/><circle cx="304.3" cy="556.0" r="2.5"/><circle cx="369.7" cy="573.7" r="3.5"/><circle cx="289.2" cy="519.3" r="2.8"/><circle cx="334.5" cy="550.0" r="3.3"/><circle cx="270.0" cy="526.0" r="2.9"/><circle cx="283.1" cy="561.3" r="2.9"/><circle cx="375.6" cy="555.2" r="3.4"/><circle cx="317.3" cy="521.2" r="3.0"/><circle cx="353.2" cy="556.6" r="2.7"/><circle cx="239.5" cy="553.9" r="3.5"/><circle cx="292.2" cy="552.5" r="3.5"/><circle cx="357.7" cy="543.7" r="4.0"/><circle cx="228.2" cy="557.3" r="2.7"/><circle cx="341.9" cy="543.1" r="3.8"/><circle cx="272.8" cy="590.0" r="3.8"/><circle cx="284.9" cy="527.9" r="4.0"/><circle cx="321.7" cy="567.0" r="3.3"/><circle cx="363.6" cy="550.2" r="3.0"/><circle cx="341.8" cy="577.6" r="3.2"/><circle cx="238.3" cy="566.5" r="2.9"/><circle cx="331.4" cy="544.6" r="2.7"/><circle cx="254.9" cy="593.0" r="2.7"/><circle cx="286.7" cy="599.8" r="3.0"/><circle cx="309.4" cy="552.5" r="3.8"/></g>
<g filter="url(#b1)">
<path d="M53.5,695.4 L50.3,694.8 L47.2,694.2 L44.0,693.7 L40.9,693.2 L37.7,692.9 L34.6,692.7 L31.4,692.6 L28.3,692.6 L25.3,692.7 L22.2,693.0 L19.2,693.5 L16.3,694.1 L13.4,694.8 L10.6,695.8 L7.9,696.9 L5.3,698.1 L2.8,699.6 L0.5,701.5 L-1.5,703.9 L-3.0,706.9 L-4.0,710.7 L-4.2,715.7 L0.0,727.0 L0.0,727.0 L8.6,735.3 L13.0,737.4 L16.5,738.3 L19.5,738.6 L22.1,738.2 L24.5,737.5 L26.6,736.3 L28.6,735.0 L30.6,733.6 L32.5,732.0 L34.4,730.4 L36.3,728.7 L38.1,726.8 L39.9,724.9 L41.7,722.9 L43.5,720.7 L45.3,718.6 L47.1,716.3 L48.9,714.0 L50.7,711.7 L52.6,709.3 L54.6,706.9 L56.5,704.6Z" fill="#e6d010" stroke="#8a7c00" stroke-width="1.1"/>
<path d="M54.3,698.0 L51.5,698.2 L48.7,698.4 L45.9,698.7 L43.1,699.1 L40.3,699.5 L37.6,699.9 L34.8,700.4 L32.1,701.0 L29.4,701.7 L26.7,702.5 L24.0,703.3 L21.4,704.2 L18.8,705.3 L16.2,706.4 L13.7,707.5 L11.2,708.8 L8.8,710.2 L6.5,711.8 L4.4,713.6 L2.4,715.7 L0.7,718.2 L-0.6,721.2 L0.0,727.0 L0.0,727.0 L5.1,729.8 L8.2,729.9 L11.0,729.5 L13.6,728.9 L16.1,728.0 L18.4,726.9 L20.6,725.6 L22.8,724.3 L25.0,723.0 L27.2,721.6 L29.3,720.2 L31.5,718.8 L33.6,717.4 L35.8,715.9 L37.9,714.4 L40.1,712.9 L42.3,711.3 L44.5,709.8 L46.7,708.2 L48.9,706.6 L51.1,705.1 L53.4,703.5 L55.7,702.0Z" fill="#f4e636" opacity="0.35"/>
<path d="M118.7,696.5 L114.3,699.0 L109.8,701.4 L105.4,703.6 L101.0,705.6 L96.7,707.6 L92.4,709.5 L88.2,711.3 L84.0,713.1 L80.0,714.9 L75.9,716.6 L72.0,718.3 L68.1,720.0 L64.3,721.8 L60.6,723.5 L56.9,725.4 L53.2,727.3 L49.6,729.3 L46.1,731.7 L42.9,734.7 L39.9,738.3 L37.1,742.8 L34.7,748.8 L35.0,763.0 L35.0,763.0 L44.4,773.8 L51.0,776.2 L57.0,776.9 L62.7,776.5 L68.0,775.3 L73.0,773.3 L77.7,770.8 L82.2,768.0 L86.5,764.9 L90.7,761.6 L94.7,758.1 L98.5,754.3 L102.0,750.4 L105.4,746.2 L108.6,741.9 L111.6,737.5 L114.3,732.9 L116.9,728.2 L119.3,723.4 L121.5,718.5 L123.6,713.5 L125.5,708.5 L127.3,703.5Z" fill="#ecd812" stroke="#8a7c00" stroke-width="1.1"/>
<path d="M121.1,698.5 L117.4,701.7 L113.7,704.8 L109.9,707.7 L106.2,710.6 L102.4,713.4 L98.6,716.1 L94.7,718.7 L90.9,721.2 L87.1,723.6 L83.2,726.0 L79.4,728.4 L75.6,730.7 L71.7,732.9 L67.8,735.1 L64.0,737.3 L60.1,739.5 L56.1,741.6 L52.3,743.9 L48.4,746.4 L44.7,749.1 L41.0,752.1 L37.4,755.8 L35.0,763.0 L35.0,763.0 L41.7,766.8 L47.1,766.8 L52.2,766.1 L57.1,764.8 L61.9,763.1 L66.4,761.0 L70.8,758.6 L75.1,756.1 L79.3,753.3 L83.3,750.4 L87.2,747.4 L91.0,744.2 L94.7,740.9 L98.3,737.4 L101.7,733.8 L105.0,730.1 L108.2,726.3 L111.3,722.4 L114.2,718.4 L117.0,714.3 L119.7,710.1 L122.4,705.9 L124.9,701.5Z" fill="#f4e636" opacity="0.35"/>
<path d="M128.4,709.8 L123.4,710.8 L118.4,711.8 L113.4,712.7 L108.5,713.6 L103.5,714.4 L98.6,715.3 L93.7,716.2 L88.8,717.1 L83.9,718.1 L79.0,719.3 L74.2,720.5 L69.3,721.9 L64.5,723.5 L59.8,725.2 L55.1,727.1 L50.4,729.2 L45.8,731.5 L41.4,734.3 L37.3,737.7 L33.5,741.8 L30.3,746.8 L28.0,753.1 L30.0,766.0 L30.0,766.0 L40.4,773.7 L46.6,775.0 L52.0,775.1 L56.9,774.4 L61.5,773.3 L65.9,771.6 L70.2,769.5 L74.4,767.3 L78.6,764.9 L82.8,762.4 L87.0,759.8 L91.1,757.0 L95.2,754.1 L99.3,751.1 L103.4,747.9 L107.4,744.5 L111.4,741.1 L115.3,737.5 L119.1,733.8 L122.9,730.1 L126.5,726.2 L130.1,722.2 L133.6,718.2Z" fill="#eedc14" stroke="#8a7c00" stroke-width="1.1"/>
<path d="M129.9,712.1 L125.3,714.0 L120.7,715.8 L116.1,717.6 L111.5,719.2 L106.8,720.9 L102.2,722.5 L97.5,724.1 L92.9,725.7 L88.2,727.4 L83.6,729.0 L78.9,730.7 L74.3,732.5 L69.7,734.4 L65.0,736.3 L60.5,738.3 L55.9,740.5 L51.4,742.7 L47.0,745.2 L42.8,748.0 L38.7,751.1 L34.9,754.7 L31.5,758.9 L30.0,766.0 L30.0,766.0 L36.9,767.9 L42.0,767.1 L46.8,765.8 L51.4,764.2 L55.9,762.4 L60.3,760.4 L64.6,758.2 L69.0,756.0 L73.3,753.8 L77.7,751.5 L82.0,749.2 L86.4,746.8 L90.7,744.4 L95.0,741.8 L99.3,739.3 L103.6,736.6 L107.8,733.9 L112.0,731.1 L116.1,728.2 L120.2,725.2 L124.3,722.2 L128.2,719.1 L132.1,715.9Z" fill="#f4e636" opacity="0.35"/>
<path d="M158.6,701.1 L157.6,705.5 L156.4,709.8 L155.3,714.1 L154.0,718.2 L152.8,722.3 L151.5,726.3 L150.2,730.3 L149.0,734.1 L147.8,737.9 L146.6,741.6 L145.6,745.3 L144.6,749.0 L143.6,752.6 L142.8,756.3 L142.1,759.9 L141.4,763.5 L140.9,767.2 L140.9,770.9 L141.4,774.8 L142.5,779.0 L144.6,783.4 L148.2,788.4 L160.0,796.0 L160.0,796.0 L174.1,795.3 L179.8,792.0 L183.8,788.1 L186.7,783.9 L188.8,779.5 L190.2,774.9 L190.9,770.3 L191.3,765.6 L191.4,760.9 L191.3,756.1 L190.9,751.4 L190.2,746.7 L189.3,742.1 L188.2,737.5 L186.8,732.9 L185.2,728.4 L183.4,724.0 L181.4,719.6 L179.3,715.3 L177.0,711.1 L174.6,707.0 L172.0,702.9 L169.4,698.9Z" fill="#efdd18" stroke="#8a7c00" stroke-width="1.1"/>
<path d="M161.6,700.5 L161.6,704.8 L161.5,709.0 L161.3,713.2 L161.1,717.4 L160.8,721.6 L160.4,725.7 L160.0,729.7 L159.6,733.8 L159.1,737.8 L158.6,741.8 L158.1,745.7 L157.5,749.7 L157.0,753.6 L156.4,757.5 L155.8,761.5 L155.3,765.4 L154.7,769.3 L154.3,773.3 L154.1,777.4 L154.1,781.5 L154.5,785.8 L155.5,790.3 L160.0,796.0 L160.0,796.0 L166.8,793.4 L169.9,789.6 L172.2,785.5 L174.0,781.4 L175.4,777.1 L176.4,772.8 L177.0,768.4 L177.5,764.0 L177.8,759.6 L178.0,755.2 L177.9,750.7 L177.7,746.3 L177.4,742.0 L176.9,737.6 L176.2,733.2 L175.4,728.9 L174.5,724.6 L173.4,720.4 L172.2,716.1 L170.9,711.9 L169.5,707.8 L168.0,703.6 L166.4,699.5Z" fill="#f4e636" opacity="0.35"/>
<path d="M112.5,778.4 L106.7,782.3 L100.9,786.0 L95.0,789.6 L89.0,793.0 L83.0,796.5 L76.9,799.9 L70.9,803.4 L64.8,806.9 L58.8,810.6 L52.8,814.5 L46.9,818.5 L41.0,822.8 L35.2,827.3 L29.6,832.1 L24.1,837.2 L18.8,842.6 L13.8,848.4 L9.4,854.8 L5.7,861.9 L2.9,869.5 L1.3,877.9 L1.8,887.1 L11.0,900.0 L11.0,900.0 L26.5,900.4 L33.9,897.5 L39.8,894.1 L44.9,890.5 L49.5,886.5 L53.8,882.3 L57.8,877.7 L61.9,873.0 L66.1,868.2 L70.3,863.3 L74.5,858.2 L78.8,852.9 L83.1,847.5 L87.4,842.0 L91.7,836.3 L95.9,830.4 L100.0,824.4 L104.0,818.2 L107.9,811.9 L111.6,805.5 L115.1,799.0 L118.4,792.3 L121.5,785.6Z" fill="#e4d414" stroke="#8a7c00" stroke-width="1.1"/>
<path d="M115.0,780.4 L110.0,785.1 L104.9,789.6 L99.6,794.0 L94.3,798.3 L88.9,802.6 L83.4,806.8 L77.9,810.9 L72.4,815.2 L66.8,819.4 L61.3,823.7 L55.8,828.1 L50.4,832.7 L45.0,837.4 L39.8,842.2 L34.7,847.2 L29.8,852.5 L25.0,857.9 L20.6,863.7 L16.7,869.9 L13.2,876.4 L10.5,883.4 L8.7,890.8 L11.0,900.0 L11.0,900.0 L19.6,896.7 L24.8,892.0 L29.5,887.2 L33.9,882.5 L38.3,877.7 L42.6,872.8 L46.9,867.9 L51.3,863.0 L55.8,858.1 L60.5,853.2 L65.1,848.3 L69.9,843.3 L74.6,838.3 L79.4,833.2 L84.1,828.1 L88.9,822.8 L93.5,817.5 L98.1,812.1 L102.6,806.6 L107.0,801.0 L111.2,795.3 L115.2,789.5 L119.0,783.6Z" fill="#f4e636" opacity="0.35"/>
<path d="M120.5,796.3 L118.9,800.9 L117.2,805.4 L115.5,809.9 L113.7,814.3 L111.9,818.6 L110.2,822.9 L108.5,827.1 L106.8,831.3 L105.2,835.4 L103.6,839.5 L102.1,843.5 L100.7,847.6 L99.4,851.6 L98.2,855.6 L97.1,859.6 L96.0,863.7 L95.2,867.8 L94.8,872.0 L94.9,876.4 L95.7,881.0 L97.4,886.0 L100.7,891.5 L112.0,900.0 L112.0,900.0 L126.2,899.6 L132.2,896.3 L136.4,892.4 L139.7,888.1 L142.1,883.6 L143.8,878.9 L144.9,874.0 L145.7,869.1 L146.3,864.1 L146.6,859.1 L146.6,854.1 L146.5,849.1 L146.0,844.1 L145.4,839.1 L144.5,834.1 L143.4,829.2 L142.2,824.3 L140.7,819.4 L139.1,814.5 L137.4,809.8 L135.5,805.0 L133.6,800.3 L131.5,795.7Z" fill="#e8d816" stroke="#8a7c00" stroke-width="1.1"/>
<path d="M123.6,796.1 L123.0,800.7 L122.3,805.3 L121.6,809.9 L120.8,814.4 L120.0,818.8 L119.2,823.3 L118.3,827.7 L117.4,832.1 L116.4,836.4 L115.5,840.8 L114.5,845.1 L113.6,849.4 L112.6,853.7 L111.6,858.0 L110.7,862.3 L109.7,866.6 L108.8,870.9 L108.0,875.2 L107.5,879.7 L107.1,884.2 L107.2,888.9 L107.8,893.8 L112.0,900.0 L112.0,900.0 L119.1,897.4 L122.4,893.4 L125.0,889.2 L127.1,884.8 L128.8,880.4 L130.2,875.8 L131.2,871.1 L132.1,866.4 L132.8,861.7 L133.4,857.0 L133.8,852.3 L134.0,847.6 L134.1,842.8 L134.1,838.1 L134.0,833.3 L133.7,828.6 L133.2,823.9 L132.7,819.2 L132.0,814.5 L131.3,809.8 L130.4,805.1 L129.5,800.5 L128.4,795.9Z" fill="#f4e636" opacity="0.35"/>
<path d="M185.0,756.6 L184.5,762.7 L183.9,768.9 L183.3,775.0 L182.7,781.0 L182.1,787.1 L181.6,793.0 L181.1,799.0 L180.6,804.9 L180.3,810.7 L180.0,816.5 L179.9,822.3 L179.9,828.0 L180.0,833.7 L180.2,839.4 L180.6,845.0 L181.1,850.6 L181.8,856.2 L183.1,861.7 L185.1,867.2 L187.9,872.6 L191.8,878.0 L197.6,883.3 L213.0,888.0 L213.0,888.0 L227.6,881.0 L232.4,874.5 L235.2,868.2 L236.9,861.9 L237.6,855.7 L237.6,849.6 L236.9,843.5 L235.8,837.5 L234.6,831.5 L233.1,825.6 L231.4,819.7 L229.5,813.9 L227.3,808.1 L225.0,802.4 L222.4,796.7 L219.7,791.1 L216.8,785.5 L213.8,780.1 L210.6,774.6 L207.3,769.2 L203.9,763.9 L200.5,758.6 L197.0,753.4Z" fill="#ecdc18" stroke="#8a7c00" stroke-width="1.1"/>
<path d="M188.4,755.7 L189.0,761.6 L189.5,767.5 L190.0,773.4 L190.5,779.2 L191.0,785.1 L191.4,790.9 L191.9,796.8 L192.3,802.6 L192.8,808.4 L193.3,814.2 L193.8,819.9 L194.3,825.7 L194.8,831.4 L195.4,837.2 L196.1,842.9 L196.7,848.6 L197.4,854.4 L198.4,860.1 L199.6,865.7 L201.1,871.4 L203.2,877.0 L206.0,882.6 L213.0,888.0 L213.0,888.0 L219.2,881.6 L221.0,875.5 L222.0,869.4 L222.4,863.4 L222.4,857.4 L222.0,851.4 L221.2,845.5 L220.4,839.6 L219.4,833.7 L218.2,827.9 L217.0,822.0 L215.6,816.2 L214.1,810.5 L212.4,804.7 L210.7,799.0 L208.9,793.3 L206.9,787.6 L204.9,782.0 L202.8,776.4 L200.6,770.8 L198.3,765.3 L196.0,759.8 L193.6,754.3Z" fill="#f4e636" opacity="0.35"/>
<path d="M240.1,742.7 L239.5,748.6 L239.0,754.5 L238.3,760.3 L237.6,766.0 L236.9,771.7 L236.2,777.3 L235.5,782.9 L234.9,788.4 L234.2,793.8 L233.7,799.2 L233.2,804.5 L232.8,809.8 L232.5,815.0 L232.4,820.3 L232.3,825.5 L232.3,830.7 L232.5,835.9 L233.3,841.1 L234.7,846.3 L236.9,851.6 L240.2,857.0 L245.3,862.6 L260.0,869.0 L260.0,869.0 L275.3,864.0 L280.9,858.3 L284.4,852.4 L286.8,846.4 L288.1,840.4 L288.6,834.4 L288.5,828.3 L288.0,822.3 L287.2,816.3 L286.1,810.4 L284.8,804.5 L283.2,798.7 L281.3,792.9 L279.2,787.2 L276.9,781.5 L274.3,776.0 L271.6,770.5 L268.7,765.1 L265.6,759.8 L262.3,754.5 L259.0,749.4 L255.5,744.3 L251.9,739.3Z" fill="#e8d816" stroke="#8a7c00" stroke-width="1.1"/>
<path d="M243.4,741.8 L244.0,747.4 L244.6,753.1 L245.0,758.7 L245.5,764.3 L245.8,769.9 L246.1,775.4 L246.4,780.9 L246.6,786.4 L246.8,791.9 L247.0,797.4 L247.2,802.9 L247.4,808.3 L247.5,813.7 L247.7,819.2 L247.9,824.6 L248.0,830.0 L248.3,835.5 L248.6,840.9 L249.3,846.3 L250.2,851.8 L251.6,857.4 L253.7,863.0 L260.0,869.0 L260.0,869.0 L266.9,863.6 L269.5,858.0 L271.1,852.2 L272.2,846.4 L272.8,840.6 L272.9,834.8 L272.8,829.0 L272.4,823.2 L271.8,817.4 L271.1,811.7 L270.2,806.0 L269.2,800.3 L268.0,794.6 L266.6,789.0 L265.1,783.4 L263.5,777.9 L261.7,772.4 L259.8,766.9 L257.7,761.5 L255.6,756.1 L253.4,750.8 L251.0,745.5 L248.6,740.2Z" fill="#f4e636" opacity="0.35"/>
<path d="M294.8,742.7 L294.1,746.6 L293.4,750.4 L292.8,754.3 L292.1,758.1 L291.6,761.9 L291.0,765.6 L290.6,769.3 L290.2,773.0 L290.0,776.6 L289.9,780.2 L289.8,783.8 L289.9,787.3 L290.2,790.7 L290.6,794.2 L291.2,797.5 L291.9,800.8 L292.8,804.1 L294.2,807.3 L296.2,810.2 L299.0,813.0 L302.8,815.6 L308.2,817.8 L322.0,818.0 L322.0,818.0 L334.2,811.4 L337.9,806.9 L340.0,802.7 L341.0,798.7 L341.3,795.0 L341.0,791.4 L340.1,787.9 L339.0,784.5 L337.7,781.2 L336.2,777.9 L334.6,774.6 L332.8,771.4 L330.8,768.3 L328.7,765.2 L326.5,762.2 L324.1,759.2 L321.7,756.2 L319.1,753.3 L316.4,750.4 L313.7,747.6 L310.9,744.8 L308.1,742.0 L305.2,739.3Z" fill="#eedc16" stroke="#8a7c00" stroke-width="1.1"/>
<path d="M297.7,741.8 L298.0,745.3 L298.3,748.9 L298.6,752.4 L298.9,755.9 L299.3,759.5 L299.6,763.0 L300.0,766.5 L300.4,770.0 L300.8,773.4 L301.3,776.9 L301.9,780.3 L302.4,783.7 L303.1,787.1 L303.8,790.5 L304.5,793.9 L305.4,797.2 L306.3,800.5 L307.4,803.8 L308.8,807.0 L310.5,810.1 L312.6,813.2 L315.5,816.0 L322.0,818.0 L322.0,818.0 L326.9,813.2 L328.1,809.3 L328.5,805.6 L328.5,801.9 L328.1,798.4 L327.5,794.9 L326.6,791.5 L325.6,788.1 L324.5,784.8 L323.3,781.5 L322.1,778.2 L320.8,774.9 L319.4,771.6 L317.9,768.4 L316.3,765.2 L314.7,762.0 L313.1,758.8 L311.4,755.7 L309.6,752.6 L307.8,749.5 L306.0,746.4 L304.2,743.3 L302.3,740.2Z" fill="#f4e636" opacity="0.35"/>
<path d="M89.2,906.9 L86.5,909.6 L83.8,912.2 L81.1,914.9 L78.5,917.7 L76.0,920.4 L73.7,923.2 L71.4,926.1 L69.3,929.0 L67.4,931.9 L65.7,934.9 L64.1,937.9 L62.8,940.9 L61.7,944.0 L60.8,947.1 L60.1,950.2 L59.7,953.3 L59.5,956.5 L60.1,959.7 L61.5,962.9 L63.9,966.1 L67.5,969.3 L73.3,972.6 L90.0,976.0 L90.0,976.0 L106.8,973.4 L112.8,970.8 L116.7,968.1 L119.3,965.4 L120.9,962.6 L121.8,959.9 L122.0,957.1 L121.9,954.3 L121.7,951.5 L121.2,948.7 L120.6,945.8 L119.8,943.0 L118.8,940.0 L117.6,937.1 L116.4,934.1 L114.9,931.1 L113.4,928.1 L111.8,925.0 L110.0,921.9 L108.3,918.7 L106.5,915.5 L104.6,912.3 L102.8,909.1Z" fill="#d8c810" stroke="#8a7c00" stroke-width="1.1"/>
<path d="M93.0,907.5 L91.5,910.3 L90.1,913.2 L88.7,916.0 L87.3,918.8 L86.0,921.7 L84.8,924.6 L83.6,927.5 L82.5,930.4 L81.5,933.4 L80.6,936.3 L79.7,939.3 L79.0,942.3 L78.4,945.3 L77.8,948.3 L77.4,951.3 L77.1,954.4 L77.0,957.4 L77.1,960.5 L77.7,963.6 L78.6,966.7 L80.2,969.7 L82.7,972.8 L90.0,976.0 L90.0,976.0 L97.4,973.2 L100.1,970.4 L101.9,967.5 L103.1,964.7 L103.9,961.8 L104.4,958.9 L104.5,956.1 L104.6,953.2 L104.6,950.3 L104.6,947.4 L104.4,944.5 L104.2,941.5 L103.9,938.6 L103.6,935.7 L103.2,932.7 L102.8,929.7 L102.3,926.7 L101.8,923.7 L101.2,920.7 L100.7,917.7 L100.1,914.6 L99.5,911.5 L99.0,908.5Z" fill="#f4e636" opacity="0.35"/>
<path d="M157.8,877.8 L155.6,881.9 L153.3,886.1 L151.1,890.2 L148.8,894.3 L146.7,898.3 L144.6,902.4 L142.6,906.4 L140.6,910.4 L138.8,914.4 L137.1,918.4 L135.6,922.4 L134.1,926.3 L132.9,930.3 L131.8,934.3 L130.8,938.4 L130.1,942.4 L129.5,946.5 L129.5,950.6 L130.3,954.9 L131.8,959.4 L134.5,964.0 L139.0,969.1 L153.0,976.0 L153.0,976.0 L168.6,974.5 L174.6,971.1 L178.7,967.3 L181.7,963.2 L183.7,959.0 L185.0,954.7 L185.7,950.3 L186.1,945.8 L186.3,941.4 L186.3,936.9 L186.0,932.3 L185.6,927.8 L184.9,923.3 L184.0,918.7 L183.0,914.2 L181.8,909.6 L180.5,905.1 L179.0,900.6 L177.4,896.1 L175.7,891.6 L173.9,887.1 L172.1,882.7 L170.2,878.2Z" fill="#dccc12" stroke="#8a7c00" stroke-width="1.1"/>
<path d="M161.3,877.9 L160.2,882.1 L159.1,886.4 L158.0,890.6 L156.8,894.8 L155.7,898.9 L154.6,903.1 L153.6,907.3 L152.5,911.4 L151.5,915.6 L150.5,919.7 L149.6,923.9 L148.7,928.0 L147.8,932.2 L147.0,936.3 L146.3,940.5 L145.6,944.6 L145.1,948.8 L144.7,953.0 L144.7,957.2 L144.9,961.6 L145.7,966.0 L147.3,970.6 L153.0,976.0 L153.0,976.0 L160.3,973.0 L163.4,969.1 L165.6,965.0 L167.3,960.9 L168.5,956.7 L169.5,952.4 L170.1,948.1 L170.6,943.7 L171.0,939.4 L171.3,935.0 L171.5,930.7 L171.6,926.3 L171.5,921.9 L171.4,917.5 L171.2,913.1 L170.8,908.7 L170.4,904.3 L170.0,899.9 L169.4,895.6 L168.8,891.2 L168.2,886.8 L167.5,882.5 L166.7,878.1Z" fill="#f4e636" opacity="0.35"/>
<path d="M213.0,892.6 L212.1,896.9 L211.1,901.3 L210.2,905.6 L209.4,909.9 L208.7,914.2 L208.1,918.5 L207.6,922.8 L207.2,927.0 L207.0,931.2 L206.9,935.4 L207.0,939.5 L207.3,943.6 L207.8,947.6 L208.5,951.6 L209.3,955.5 L210.4,959.3 L211.7,963.1 L213.6,966.6 L216.2,969.9 L219.6,972.9 L224.2,975.5 L230.5,977.5 L246.0,976.0 L246.0,976.0 L258.8,967.3 L262.6,961.9 L264.5,957.1 L265.4,952.8 L265.4,948.8 L264.8,945.0 L263.7,941.4 L262.3,937.9 L260.7,934.5 L259.0,931.0 L257.1,927.7 L255.0,924.4 L252.8,921.1 L250.4,917.8 L247.9,914.6 L245.3,911.5 L242.6,908.3 L239.8,905.1 L236.9,902.0 L234.0,898.8 L231.0,895.7 L228.0,892.5 L225.0,889.4Z" fill="#d6c810" stroke="#8a7c00" stroke-width="1.1"/>
<path d="M216.4,891.7 L216.5,895.7 L216.7,899.7 L216.9,903.7 L217.1,907.7 L217.4,911.7 L217.8,915.6 L218.2,919.6 L218.6,923.5 L219.2,927.5 L219.8,931.4 L220.5,935.3 L221.3,939.1 L222.1,943.0 L223.1,946.8 L224.2,950.6 L225.3,954.3 L226.6,958.0 L228.1,961.6 L230.0,965.1 L232.2,968.5 L234.9,971.7 L238.4,974.6 L246.0,976.0 L246.0,976.0 L250.9,970.1 L251.8,965.7 L251.9,961.6 L251.6,957.6 L250.9,953.8 L250.0,950.1 L248.7,946.4 L247.4,942.8 L246.1,939.2 L244.6,935.7 L243.1,932.1 L241.6,928.6 L240.0,925.1 L238.3,921.6 L236.5,918.1 L234.8,914.6 L233.0,911.1 L231.1,907.7 L229.2,904.2 L227.3,900.7 L225.4,897.3 L223.5,893.8 L221.6,890.3Z" fill="#f4e636" opacity="0.35"/>
<path d="M266.9,864.8 L265.4,869.9 L264.0,875.0 L262.6,880.1 L261.2,885.3 L260.0,890.4 L258.8,895.5 L257.7,900.5 L256.8,905.6 L255.9,910.6 L255.3,915.7 L254.7,920.7 L254.4,925.7 L254.2,930.6 L254.3,935.6 L254.5,940.5 L254.9,945.4 L255.5,950.3 L256.8,955.1 L258.7,959.8 L261.6,964.3 L265.6,968.8 L271.5,973.0 L287.0,976.0 L287.0,976.0 L301.3,969.3 L306.0,963.7 L308.8,958.4 L310.4,953.3 L311.2,948.3 L311.2,943.3 L310.6,938.4 L309.8,933.6 L308.8,928.8 L307.6,924.0 L306.2,919.2 L304.6,914.4 L302.9,909.7 L301.0,905.0 L299.0,900.3 L296.8,895.6 L294.5,891.0 L292.1,886.3 L289.6,881.7 L287.1,877.1 L284.5,872.5 L281.8,867.8 L279.1,863.2Z" fill="#d4c410" stroke="#8a7c00" stroke-width="1.1"/>
<path d="M270.3,864.3 L270.0,869.3 L269.7,874.3 L269.4,879.3 L269.2,884.3 L269.0,889.2 L268.8,894.2 L268.7,899.2 L268.6,904.1 L268.6,909.1 L268.6,914.0 L268.7,918.9 L268.9,923.9 L269.2,928.8 L269.5,933.7 L270.0,938.6 L270.5,943.4 L271.1,948.3 L272.0,953.1 L273.2,957.9 L274.8,962.7 L276.9,967.4 L279.8,972.0 L287.0,976.0 L287.0,976.0 L293.0,970.3 L294.7,965.1 L295.6,960.1 L295.9,955.1 L295.9,950.2 L295.6,945.3 L295.0,940.4 L294.3,935.5 L293.5,930.7 L292.7,925.8 L291.7,921.0 L290.7,916.2 L289.6,911.4 L288.4,906.6 L287.2,901.8 L285.9,897.0 L284.5,892.2 L283.1,887.5 L281.7,882.7 L280.2,877.9 L278.7,873.2 L277.2,868.4 L275.7,863.7Z" fill="#f4e636" opacity="0.35"/>
<path d="M54.4,847.4 L50.1,851.9 L45.8,856.4 L41.6,861.1 L37.6,865.8 L33.6,870.6 L29.8,875.4 L26.1,880.4 L22.5,885.5 L19.2,890.6 L16.0,895.9 L13.1,901.2 L10.3,906.7 L7.8,912.2 L5.6,917.9 L3.5,923.6 L1.7,929.4 L0.3,935.2 L-0.6,941.3 L-0.6,947.5 L0.2,953.9 L2.3,960.5 L6.3,967.4 L20.0,976.0 L20.0,976.0 L35.9,973.2 L42.2,968.8 L46.7,964.1 L50.1,959.2 L52.7,954.2 L54.6,949.0 L56.1,943.8 L57.3,938.4 L58.4,933.1 L59.3,927.7 L60.2,922.2 L60.9,916.7 L61.6,911.2 L62.1,905.5 L62.6,899.9 L63.0,894.1 L63.4,888.3 L63.7,882.5 L64.1,876.6 L64.4,870.6 L64.8,864.7 L65.2,858.6 L65.6,852.6Z" fill="#d0c410" stroke="#8a7c00" stroke-width="1.1"/>
<path d="M57.5,848.9 L54.3,853.8 L51.1,858.7 L48.0,863.7 L45.0,868.8 L42.0,873.9 L39.2,879.0 L36.4,884.2 L33.8,889.5 L31.2,894.8 L28.8,900.2 L26.5,905.6 L24.3,911.0 L22.3,916.6 L20.3,922.1 L18.6,927.7 L16.9,933.4 L15.5,939.1 L14.3,944.9 L13.6,950.8 L13.2,956.7 L13.5,962.8 L14.6,969.0 L20.0,976.0 L20.0,976.0 L27.6,971.6 L31.0,966.5 L33.7,961.2 L35.9,955.9 L37.8,950.6 L39.4,945.2 L40.8,939.7 L42.2,934.3 L43.6,928.8 L44.9,923.4 L46.2,917.9 L47.5,912.4 L48.8,906.9 L50.1,901.4 L51.4,895.8 L52.7,890.3 L54.0,884.7 L55.3,879.1 L56.6,873.6 L58.0,868.0 L59.5,862.4 L60.9,856.7 L62.5,851.1Z" fill="#f4e636" opacity="0.35"/>
<path d="M225.2,721.7 L227.5,720.8 L229.8,720.1 L231.9,719.7 L234.0,719.5 L235.9,719.5 L237.7,719.8 L239.3,720.2 L240.6,720.8 L241.8,721.5 L242.7,722.2 L243.4,722.9 L243.9,723.6 L244.2,724.2 L244.4,724.7 L244.6,725.0 L244.8,725.1 L244.9,725.1 L245.1,724.4 L245.4,723.2 L245.9,721.1 L246.6,718.0 L247.8,713.3 L250.0,700.0 L250.0,700.0 L248.3,686.5 L245.6,681.8 L242.7,679.0 L239.6,677.3 L236.4,676.5 L233.2,676.6 L230.2,677.4 L227.2,678.6 L224.4,680.1 L221.8,682.0 L219.4,684.2 L217.3,686.6 L215.5,689.2 L214.1,692.0 L213.0,695.0 L212.2,698.0 L211.8,701.0 L211.6,704.0 L211.8,707.0 L212.2,710.0 L212.9,712.8 L213.8,715.6 L214.8,718.3Z" fill="#f0dc18" stroke="#8a7c00" stroke-width="1.1"/>
<path d="M222.3,720.8 L223.7,719.3 L225.0,718.1 L226.4,716.9 L227.8,716.0 L229.1,715.2 L230.4,714.5 L231.7,714.0 L232.9,713.6 L234.0,713.2 L235.1,713.0 L236.1,712.7 L237.0,712.6 L237.9,712.4 L238.8,712.2 L239.7,712.0 L240.7,711.8 L241.7,711.5 L242.7,711.0 L243.8,710.3 L245.0,709.3 L246.3,707.9 L247.9,705.8 L250.0,700.0 L250.0,700.0 L248.1,694.0 L245.9,692.0 L243.6,690.8 L241.2,690.1 L238.8,689.9 L236.5,690.2 L234.3,690.8 L232.1,691.6 L230.0,692.6 L228.1,693.8 L226.3,695.2 L224.6,696.8 L223.1,698.5 L221.8,700.3 L220.7,702.2 L219.8,704.2 L219.0,706.3 L218.4,708.4 L218.0,710.5 L217.8,712.7 L217.6,714.9 L217.6,717.0 L217.7,719.2Z" fill="#f4e636" opacity="0.35"/>
<path d="M295.5,701.6 L295.9,707.7 L296.3,713.8 L296.8,719.9 L297.2,725.9 L297.7,732.0 L298.2,738.0 L298.8,744.0 L299.4,749.9 L300.2,755.8 L301.0,761.7 L301.9,767.5 L302.9,773.3 L304.0,779.1 L305.2,784.8 L306.6,790.5 L308.0,796.1 L309.7,801.7 L311.7,807.2 L314.3,812.5 L317.6,817.7 L321.7,822.7 L327.2,827.3 L340.0,830.0 L340.0,830.0 L349.8,821.3 L352.3,814.4 L353.3,808.0 L353.4,801.7 L352.8,795.7 L351.6,789.8 L350.0,784.0 L348.2,778.3 L346.2,772.6 L344.0,767.0 L341.7,761.5 L339.2,756.0 L336.6,750.5 L333.8,745.1 L330.9,739.7 L327.9,734.4 L324.8,729.2 L321.6,724.0 L318.3,718.8 L314.9,713.6 L311.5,708.5 L308.0,703.4 L304.5,698.4Z" fill="#e8d414" stroke="#8a7c00" stroke-width="1.1"/>
<path d="M298.0,700.7 L299.3,706.5 L300.6,712.3 L301.9,718.1 L303.1,723.9 L304.4,729.7 L305.7,735.5 L307.0,741.3 L308.3,747.1 L309.6,752.8 L310.9,758.6 L312.3,764.3 L313.7,770.0 L315.2,775.7 L316.7,781.4 L318.2,787.1 L319.8,792.7 L321.4,798.4 L323.2,804.0 L325.3,809.5 L327.6,815.0 L330.2,820.4 L333.5,825.6 L340.0,830.0 L340.0,830.0 L343.5,823.0 L343.7,816.7 L343.3,810.7 L342.4,804.8 L341.3,798.9 L339.9,793.1 L338.3,787.4 L336.5,781.7 L334.7,776.0 L332.8,770.4 L330.8,764.8 L328.8,759.2 L326.6,753.6 L324.4,748.1 L322.1,742.6 L319.8,737.1 L317.4,731.6 L314.9,726.2 L312.4,720.8 L309.9,715.4 L307.3,710.0 L304.6,704.6 L302.0,699.3Z" fill="#f4e636" opacity="0.35"/>
<path d="M373.6,812.3 L376.9,819.9 L380.2,827.5 L383.6,835.1 L387.0,842.7 L390.4,850.2 L393.9,857.7 L397.5,865.2 L401.2,872.6 L404.9,879.9 L408.8,887.1 L412.7,894.2 L416.8,901.3 L421.0,908.3 L425.4,915.1 L429.8,921.9 L434.5,928.6 L439.3,935.1 L444.5,941.4 L450.2,947.2 L456.6,952.6 L463.8,957.4 L472.4,961.2 L488.0,960.0 L488.0,960.0 L494.1,945.6 L493.2,936.2 L490.9,927.9 L487.7,920.1 L483.9,912.8 L479.6,905.9 L474.9,899.3 L470.0,892.8 L464.9,886.4 L459.7,880.2 L454.3,874.0 L448.9,867.9 L443.3,861.9 L437.5,856.1 L431.7,850.2 L425.8,844.5 L419.8,838.8 L413.7,833.2 L407.5,827.7 L401.3,822.1 L395.0,816.7 L388.7,811.2 L382.4,805.7Z" fill="#dcd014" stroke="#8a7c00" stroke-width="1.1"/>
<path d="M376.1,810.4 L380.2,817.5 L384.4,824.5 L388.5,831.5 L392.7,838.5 L396.9,845.5 L401.2,852.4 L405.4,859.4 L409.7,866.3 L414.0,873.2 L418.4,880.1 L422.8,886.9 L427.3,893.7 L431.8,900.4 L436.4,907.1 L441.1,913.8 L445.8,920.4 L450.6,926.9 L455.5,933.4 L460.7,939.6 L466.2,945.7 L472.0,951.5 L478.5,956.9 L488.0,960.0 L488.0,960.0 L488.0,950.0 L485.0,942.2 L481.3,934.8 L477.2,927.7 L472.9,920.8 L468.3,914.1 L463.6,907.5 L458.7,900.9 L453.8,894.5 L448.9,888.0 L443.8,881.6 L438.7,875.3 L433.6,869.0 L428.4,862.7 L423.1,856.5 L417.9,850.3 L412.5,844.1 L407.2,838.0 L401.7,831.9 L396.3,825.8 L390.9,819.7 L385.4,813.6 L379.9,807.6Z" fill="#f4e636" opacity="0.35"/>
<path d="M401.4,783.5 L402.1,790.8 L402.7,798.1 L403.4,805.3 L404.1,812.6 L404.8,819.8 L405.5,827.1 L406.3,834.3 L407.2,841.4 L408.2,848.5 L409.3,855.6 L410.4,862.7 L411.7,869.7 L413.1,876.7 L414.6,883.7 L416.2,890.6 L418.0,897.5 L419.9,904.3 L422.2,911.0 L425.1,917.6 L428.7,924.0 L433.1,930.2 L438.9,936.0 L452.0,940.0 L452.0,940.0 L461.5,930.1 L463.7,922.1 L464.4,914.5 L464.2,907.0 L463.4,899.8 L462.0,892.7 L460.1,885.8 L458.0,878.9 L455.7,872.0 L453.3,865.2 L450.7,858.4 L448.0,851.7 L445.1,845.1 L442.1,838.4 L438.9,831.9 L435.7,825.3 L432.3,818.8 L428.9,812.4 L425.3,806.0 L421.7,799.6 L418.0,793.2 L414.3,786.8 L410.6,780.5Z" fill="#e0d416" stroke="#8a7c00" stroke-width="1.1"/>
<path d="M404.0,782.7 L405.5,789.7 L407.0,796.7 L408.5,803.7 L410.0,810.7 L411.5,817.8 L413.0,824.8 L414.6,831.8 L416.1,838.7 L417.7,845.7 L419.3,852.7 L420.9,859.6 L422.6,866.6 L424.3,873.5 L426.1,880.4 L427.9,887.3 L429.7,894.2 L431.7,901.1 L433.8,907.9 L436.1,914.6 L438.7,921.3 L441.6,927.9 L445.2,934.4 L452.0,940.0 L452.0,940.0 L455.2,931.8 L455.1,924.4 L454.4,917.1 L453.3,910.0 L451.9,902.9 L450.2,896.0 L448.3,889.0 L446.3,882.1 L444.2,875.3 L442.0,868.4 L439.8,861.6 L437.4,854.8 L435.1,848.0 L432.6,841.3 L430.1,834.5 L427.5,827.8 L424.8,821.1 L422.1,814.5 L419.4,807.8 L416.6,801.2 L413.7,794.6 L410.9,787.9 L408.0,781.3Z" fill="#f4e636" opacity="0.35"/>
<path d="M441.6,841.2 L444.4,848.7 L447.4,856.2 L450.3,863.6 L453.3,871.0 L456.4,878.4 L459.5,885.7 L462.7,892.9 L466.1,900.0 L469.6,907.1 L473.2,914.0 L476.9,920.9 L480.8,927.6 L484.9,934.2 L489.2,940.6 L493.6,947.0 L498.1,953.1 L502.9,959.2 L508.3,964.8 L514.2,969.8 L521.0,974.3 L528.7,978.0 L538.1,980.4 L556.0,976.0 L556.0,976.0 L564.3,959.6 L564.2,949.9 L562.4,941.6 L559.6,934.0 L556.1,927.0 L551.9,920.6 L547.2,914.5 L542.3,908.6 L537.2,902.9 L531.9,897.3 L526.5,891.8 L520.9,886.4 L515.2,881.1 L509.3,876.0 L503.4,870.9 L497.3,866.0 L491.1,861.1 L484.8,856.3 L478.4,851.5 L472.0,846.8 L465.5,842.1 L459.0,837.4 L452.4,832.8Z" fill="#d6cc14" stroke="#8a7c00" stroke-width="1.1"/>
<path d="M444.6,838.9 L448.5,845.5 L452.4,852.2 L456.4,858.9 L460.3,865.6 L464.3,872.2 L468.3,878.8 L472.4,885.4 L476.5,891.9 L480.7,898.4 L485.0,904.8 L489.3,911.2 L493.6,917.6 L498.1,923.8 L502.6,930.1 L507.2,936.2 L511.9,942.3 L516.6,948.4 L521.6,954.2 L526.9,959.8 L532.6,965.2 L538.7,970.1 L545.5,974.6 L556.0,976.0 L556.0,976.0 L557.0,965.4 L554.3,957.8 L550.8,950.7 L546.9,944.0 L542.7,937.6 L538.2,931.4 L533.4,925.3 L528.6,919.4 L523.7,913.5 L518.7,907.6 L513.7,901.8 L508.6,896.1 L503.4,890.4 L498.2,884.7 L492.9,879.1 L487.6,873.5 L482.2,868.0 L476.8,862.5 L471.4,857.0 L465.9,851.5 L460.4,846.0 L454.9,840.6 L449.4,835.1Z" fill="#f4e636" opacity="0.35"/>
<path d="M496.8,841.6 L500.7,847.9 L504.7,854.3 L508.6,860.6 L512.6,866.8 L516.7,873.0 L520.8,879.1 L525.0,885.2 L529.3,891.1 L533.7,897.0 L538.2,902.7 L542.8,908.3 L547.5,913.8 L552.4,919.2 L557.4,924.3 L562.5,929.4 L567.7,934.3 L573.2,939.0 L579.0,943.2 L585.3,946.9 L592.2,949.9 L599.8,952.0 L608.7,952.7 L624.0,946.0 L624.0,946.0 L628.4,929.9 L626.5,921.3 L623.4,914.0 L619.5,907.6 L615.0,901.9 L610.1,896.8 L604.8,892.0 L599.3,887.5 L593.7,883.1 L588.0,878.9 L582.1,874.7 L576.2,870.7 L570.1,866.8 L563.9,863.1 L557.6,859.4 L551.3,855.8 L544.8,852.3 L538.3,848.9 L531.8,845.6 L525.2,842.2 L518.5,839.0 L511.8,835.7 L505.2,832.4Z" fill="#d0c814" stroke="#8a7c00" stroke-width="1.1"/>
<path d="M499.2,839.0 L503.8,844.5 L508.5,850.0 L513.2,855.4 L518.0,860.9 L522.7,866.3 L527.5,871.6 L532.3,877.0 L537.2,882.3 L542.1,887.5 L547.1,892.7 L552.1,897.8 L557.2,902.9 L562.3,907.9 L567.5,912.8 L572.8,917.7 L578.1,922.5 L583.5,927.2 L589.1,931.7 L594.9,935.9 L600.9,939.9 L607.3,943.4 L614.3,946.3 L624.0,946.0 L624.0,946.0 L622.9,936.3 L619.1,929.9 L614.7,924.1 L609.9,918.6 L605.0,913.5 L599.8,908.6 L594.4,903.9 L589.0,899.2 L583.5,894.7 L578.0,890.1 L572.4,885.7 L566.8,881.3 L561.1,876.9 L555.4,872.6 L549.7,868.3 L543.9,864.1 L538.1,859.8 L532.3,855.7 L526.4,851.5 L520.5,847.4 L514.6,843.2 L508.7,839.1 L502.8,835.0Z" fill="#f4e636" opacity="0.35"/>
<path d="M470.7,786.4 L475.4,792.3 L480.2,798.1 L485.0,803.9 L489.8,809.6 L494.7,815.3 L499.7,820.9 L504.8,826.4 L509.9,831.8 L515.1,837.1 L520.4,842.3 L525.8,847.4 L531.4,852.3 L537.0,857.0 L542.7,861.7 L548.6,866.1 L554.6,870.4 L560.6,874.5 L567.1,878.2 L573.9,881.2 L581.1,883.6 L588.9,885.1 L597.6,885.2 L611.0,878.0 L611.0,878.0 L612.2,862.8 L608.8,854.9 L604.4,848.4 L599.5,842.7 L594.3,837.7 L588.6,833.2 L582.7,829.1 L576.6,825.2 L570.5,821.4 L564.3,817.8 L557.9,814.2 L551.6,810.8 L545.1,807.5 L538.5,804.2 L531.9,801.1 L525.2,798.0 L518.5,795.0 L511.7,792.0 L504.9,789.1 L498.0,786.2 L491.1,783.4 L484.2,780.5 L477.3,777.6Z" fill="#dcd016" stroke="#8a7c00" stroke-width="1.1"/>
<path d="M472.5,783.9 L477.9,789.0 L483.2,794.0 L488.6,798.9 L494.0,803.9 L499.5,808.8 L505.0,813.7 L510.5,818.5 L516.1,823.2 L521.7,827.9 L527.3,832.6 L533.0,837.1 L538.8,841.6 L544.6,846.1 L550.5,850.4 L556.4,854.7 L562.4,858.9 L568.5,863.0 L574.7,866.8 L581.0,870.4 L587.6,873.8 L594.4,876.7 L601.7,878.9 L611.0,878.0 L611.0,878.0 L608.1,869.1 L603.2,863.4 L597.9,858.3 L592.4,853.5 L586.6,849.0 L580.8,844.8 L574.8,840.7 L568.8,836.7 L562.7,832.7 L556.6,828.8 L550.5,824.9 L544.4,821.0 L538.2,817.2 L532.0,813.4 L525.8,809.7 L519.5,806.0 L513.2,802.2 L507.0,798.6 L500.7,794.9 L494.4,791.2 L488.1,787.5 L481.8,783.8 L475.5,780.1Z" fill="#f4e636" opacity="0.35"/>
<path d="M526.1,772.7 L529.9,777.2 L533.7,781.7 L537.5,786.2 L541.3,790.7 L545.1,795.1 L549.0,799.4 L553.0,803.7 L556.9,807.8 L561.0,811.9 L565.1,815.8 L569.3,819.7 L573.6,823.4 L577.9,827.0 L582.4,830.4 L586.9,833.7 L591.5,836.9 L596.2,839.9 L601.3,842.4 L606.6,844.4 L612.4,845.7 L618.8,846.2 L626.0,845.2 L638.0,837.0 L638.0,837.0 L640.5,822.7 L638.3,815.7 L635.2,810.1 L631.6,805.4 L627.5,801.3 L623.1,797.8 L618.4,794.8 L613.5,791.9 L608.6,789.2 L603.5,786.6 L598.4,784.2 L593.2,781.9 L587.9,779.8 L582.6,777.7 L577.1,775.8 L571.6,774.0 L566.0,772.3 L560.4,770.7 L554.8,769.1 L549.1,767.6 L543.4,766.2 L537.6,764.7 L531.9,763.3Z" fill="#d8cc14" stroke="#8a7c00" stroke-width="1.1"/>
<path d="M527.7,770.1 L532.1,773.7 L536.4,777.4 L540.7,781.0 L545.1,784.6 L549.4,788.2 L553.8,791.8 L558.2,795.4 L562.6,798.9 L567.0,802.3 L571.5,805.7 L576.0,809.1 L580.5,812.4 L585.1,815.7 L589.7,818.9 L594.3,822.0 L599.0,825.1 L603.8,828.1 L608.6,830.9 L613.6,833.5 L618.8,835.7 L624.3,837.6 L630.1,838.9 L638.0,837.0 L638.0,837.0 L636.5,829.0 L632.9,824.2 L628.9,820.1 L624.6,816.3 L620.2,812.8 L615.6,809.6 L610.8,806.6 L606.1,803.6 L601.2,800.7 L596.4,797.9 L591.5,795.2 L586.5,792.5 L581.5,789.9 L576.5,787.3 L571.5,784.8 L566.4,782.3 L561.3,779.9 L556.2,777.5 L551.0,775.1 L545.8,772.8 L540.7,770.5 L535.5,768.2 L530.3,765.9Z" fill="#f4e636" opacity="0.35"/>
<path d="M392.2,719.5 L400.6,721.1 L408.9,722.7 L417.2,724.4 L425.4,726.1 L433.6,727.8 L441.8,729.5 L449.9,731.2 L458.0,732.9 L466.1,734.5 L474.2,736.0 L482.2,737.5 L490.3,738.9 L498.3,740.3 L506.4,741.5 L514.4,742.6 L522.4,743.6 L530.5,744.5 L538.6,744.9 L546.8,744.8 L555.2,743.9 L563.7,742.2 L572.6,738.8 L583.0,727.0 L583.0,727.0 L576.9,712.4 L569.3,706.4 L561.3,702.1 L553.1,698.9 L544.8,696.6 L536.4,695.0 L527.9,694.0 L519.3,693.3 L510.8,692.8 L502.2,692.6 L493.7,692.6 L485.1,692.9 L476.5,693.4 L468.0,694.1 L459.4,695.1 L450.9,696.2 L442.4,697.5 L433.9,699.0 L425.4,700.7 L417.0,702.5 L408.5,704.4 L400.2,706.4 L391.8,708.5Z" fill="#e6d414" stroke="#8a7c00" stroke-width="1.1"/>
<path d="M392.1,716.4 L400.4,717.0 L408.8,717.6 L417.1,718.3 L425.4,719.0 L433.7,719.8 L441.9,720.6 L450.2,721.4 L458.4,722.3 L466.6,723.2 L474.8,724.1 L483.0,725.0 L491.2,726.0 L499.4,726.9 L507.6,727.9 L515.8,728.8 L523.9,729.7 L532.1,730.6 L540.3,731.4 L548.6,732.0 L556.9,732.2 L565.3,732.2 L573.8,731.4 L583.0,727.0 L583.0,727.0 L575.7,719.8 L567.7,716.4 L559.6,713.8 L551.3,711.8 L543.1,710.1 L534.7,708.9 L526.3,707.9 L517.9,707.1 L509.5,706.4 L501.1,706.0 L492.7,705.6 L484.3,705.4 L475.9,705.4 L467.4,705.4 L459.0,705.7 L450.6,706.0 L442.2,706.5 L433.8,707.1 L425.4,707.8 L417.0,708.6 L408.6,709.5 L400.3,710.5 L391.9,711.6Z" fill="#f4e636" opacity="0.35"/>
<path d="M459.7,747.2 L467.4,749.7 L475.0,752.2 L482.6,754.8 L490.2,757.3 L497.7,759.9 L505.1,762.5 L512.6,765.0 L520.0,767.4 L527.4,769.8 L534.8,772.1 L542.2,774.3 L549.5,776.3 L556.9,778.3 L564.3,780.2 L571.7,781.9 L579.1,783.5 L586.5,785.0 L594.1,785.9 L601.8,786.1 L609.8,785.6 L618.0,784.0 L626.7,780.7 L638.0,768.0 L638.0,768.0 L634.0,751.5 L627.5,744.4 L620.4,739.2 L613.0,735.3 L605.4,732.2 L597.7,729.9 L589.7,728.3 L581.8,727.1 L573.7,726.0 L565.7,725.3 L557.6,724.8 L549.5,724.5 L541.4,724.5 L533.2,724.7 L525.1,725.1 L516.9,725.8 L508.8,726.6 L500.7,727.6 L492.6,728.8 L484.5,730.1 L476.4,731.6 L468.3,733.2 L460.3,734.8Z" fill="#e2d214" stroke="#8a7c00" stroke-width="1.1"/>
<path d="M459.9,743.7 L467.6,745.0 L475.4,746.4 L483.1,747.9 L490.8,749.4 L498.5,750.9 L506.2,752.4 L513.8,754.0 L521.4,755.6 L529.0,757.1 L536.6,758.7 L544.2,760.3 L551.8,761.9 L559.4,763.5 L566.9,765.0 L574.5,766.6 L582.1,768.1 L589.7,769.6 L597.3,770.8 L605.0,771.9 L612.8,772.6 L620.7,772.9 L628.8,772.5 L638.0,768.0 L638.0,768.0 L632.0,759.6 L624.8,755.5 L617.4,752.2 L609.9,749.5 L602.3,747.2 L594.5,745.3 L586.8,743.8 L578.9,742.4 L571.1,741.2 L563.2,740.1 L555.3,739.2 L547.4,738.4 L539.5,737.8 L531.6,737.3 L523.7,737.0 L515.7,736.7 L507.8,736.7 L499.8,736.7 L491.9,736.8 L483.9,737.0 L476.0,737.4 L468.1,737.8 L460.1,738.3Z" fill="#f4e636" opacity="0.35"/>
<path d="M355.3,740.9 L354.8,747.2 L354.3,753.5 L353.8,759.8 L353.3,766.1 L352.9,772.4 L352.5,778.6 L352.2,784.8 L351.9,791.1 L351.7,797.2 L351.6,803.4 L351.6,809.5 L351.8,815.7 L352.0,821.8 L352.3,827.9 L352.8,833.9 L353.4,840.0 L354.2,846.0 L355.5,852.0 L357.2,857.9 L359.7,863.7 L363.0,869.5 L367.7,875.1 L380.0,880.0 L380.0,880.0 L391.0,872.7 L394.5,866.0 L396.4,859.6 L397.5,853.2 L397.8,846.9 L397.5,840.7 L396.8,834.5 L395.8,828.3 L394.7,822.2 L393.4,816.1 L392.0,810.0 L390.3,803.9 L388.6,797.9 L386.7,791.9 L384.6,786.0 L382.4,780.0 L380.1,774.1 L377.8,768.2 L375.3,762.4 L372.7,756.5 L370.1,750.7 L367.4,744.9 L364.7,739.1Z" fill="#e0d014" stroke="#8a7c00" stroke-width="1.1"/>
<path d="M357.9,740.4 L358.3,746.6 L358.7,752.7 L359.1,758.9 L359.5,765.0 L359.8,771.2 L360.2,777.4 L360.6,783.5 L361.1,789.6 L361.5,795.8 L362.0,801.9 L362.5,808.0 L363.0,814.1 L363.6,820.2 L364.2,826.3 L364.9,832.3 L365.6,838.4 L366.4,844.5 L367.3,850.5 L368.5,856.6 L370.0,862.6 L371.8,868.5 L374.2,874.4 L380.0,880.0 L380.0,880.0 L384.5,873.3 L385.6,867.0 L386.1,860.7 L386.2,854.5 L385.9,848.3 L385.4,842.1 L384.7,836.0 L383.8,829.9 L382.9,823.8 L381.8,817.7 L380.7,811.6 L379.5,805.5 L378.2,799.5 L376.9,793.4 L375.4,787.4 L374.0,781.4 L372.4,775.4 L370.8,769.4 L369.1,763.4 L367.4,757.4 L365.7,751.5 L363.9,745.5 L362.1,739.6Z" fill="#f4e636" opacity="0.35"/>
<path d="M339.8,861.9 L339.9,867.5 L340.0,873.0 L340.0,878.5 L340.1,884.0 L340.2,889.5 L340.3,894.9 L340.5,900.3 L340.7,905.7 L341.1,911.0 L341.5,916.2 L342.1,921.5 L342.8,926.6 L343.6,931.8 L344.5,936.9 L345.5,941.9 L346.8,946.9 L348.1,951.9 L350.0,956.7 L352.5,961.3 L355.7,965.8 L359.9,970.1 L365.8,974.0 L380.0,976.0 L380.0,976.0 L391.8,967.7 L395.1,961.4 L396.7,955.4 L397.3,949.7 L397.1,944.2 L396.3,938.8 L394.9,933.6 L393.3,928.5 L391.4,923.4 L389.4,918.3 L387.2,913.4 L384.9,908.4 L382.3,903.6 L379.6,898.8 L376.8,894.1 L373.8,889.4 L370.7,884.8 L367.4,880.2 L364.1,875.7 L360.7,871.3 L357.2,866.8 L353.7,862.5 L350.2,858.1Z" fill="#d4c812" stroke="#8a7c00" stroke-width="1.1"/>
<path d="M342.7,860.8 L343.8,866.1 L344.8,871.3 L345.8,876.5 L346.8,881.7 L347.8,886.9 L348.8,892.1 L349.8,897.3 L350.8,902.4 L351.9,907.6 L353.0,912.7 L354.1,917.8 L355.2,922.9 L356.4,928.0 L357.6,933.1 L358.9,938.1 L360.2,943.2 L361.6,948.2 L363.2,953.2 L365.1,958.1 L367.2,962.9 L369.8,967.7 L373.0,972.3 L380.0,976.0 L380.0,976.0 L384.5,969.5 L385.2,963.8 L385.2,958.3 L384.8,953.0 L383.9,947.7 L382.8,942.5 L381.4,937.3 L379.9,932.2 L378.3,927.1 L376.6,922.1 L374.8,917.1 L372.9,912.1 L370.9,907.1 L368.8,902.2 L366.7,897.3 L364.5,892.5 L362.2,887.6 L359.8,882.8 L357.4,878.0 L354.9,873.3 L352.4,868.6 L349.9,863.9 L347.3,859.2Z" fill="#f4e636" opacity="0.35"/>
<path d="M595.1,902.5 L595.1,906.6 L595.1,910.7 L595.1,914.8 L595.2,918.9 L595.4,923.0 L595.6,927.0 L595.9,931.0 L596.3,934.9 L596.8,938.8 L597.4,942.6 L598.2,946.3 L599.1,950.0 L600.1,953.6 L601.3,957.2 L602.6,960.7 L604.1,964.0 L605.8,967.3 L607.9,970.4 L610.7,973.1 L614.1,975.5 L618.5,977.5 L624.4,978.7 L638.0,976.0 L638.0,976.0 L648.3,966.7 L650.9,961.3 L651.9,956.6 L652.1,952.4 L651.5,948.6 L650.4,945.0 L648.8,941.7 L647.0,938.5 L645.0,935.3 L642.9,932.3 L640.6,929.3 L638.2,926.4 L635.6,923.5 L632.9,920.7 L630.1,918.0 L627.2,915.3 L624.2,912.7 L621.1,910.1 L618.0,907.5 L614.8,905.0 L611.5,902.5 L608.2,900.0 L604.9,897.5Z" fill="#b0b820" stroke="#8a7c00" stroke-width="1.1"/>
<path d="M597.8,901.1 L598.8,904.8 L599.7,908.4 L600.6,912.1 L601.6,915.7 L602.6,919.4 L603.6,923.0 L604.7,926.6 L605.8,930.2 L606.9,933.7 L608.1,937.2 L609.4,940.7 L610.7,944.2 L612.1,947.7 L613.5,951.1 L615.0,954.4 L616.6,957.8 L618.3,961.1 L620.1,964.3 L622.3,967.3 L624.7,970.2 L627.6,973.0 L631.1,975.3 L638.0,976.0 L638.0,976.0 L641.6,970.1 L641.8,965.8 L641.4,961.9 L640.5,958.2 L639.3,954.7 L637.9,951.3 L636.3,948.0 L634.5,944.7 L632.7,941.5 L630.9,938.3 L629.0,935.1 L627.0,931.9 L624.9,928.8 L622.8,925.8 L620.7,922.7 L618.5,919.7 L616.2,916.7 L613.9,913.7 L611.6,910.7 L609.3,907.8 L606.9,904.8 L604.5,901.9 L602.2,898.9Z" fill="#f4e636" opacity="0.35"/>
</g>
<g filter="url(#b1)">
<path d="M76.0,763.0 L80.1,763.4 L84.1,763.8 L88.2,764.1 L92.2,764.3 L96.3,764.6 L100.3,764.7 L104.4,764.9 L108.4,765.0 L112.5,765.0 L116.5,765.0 L120.6,765.0 L124.6,764.9 L128.7,764.7 L132.7,764.6 L136.8,764.3 L140.8,764.1 L144.9,763.8 L148.9,763.4 L153.0,763.0" stroke="#d0a400" stroke-width="4.4" stroke-linecap="round" fill="none"/><path d="M76.0,763.0 L80.1,763.4 L84.1,763.8 L88.2,764.1 L92.2,764.3 L96.3,764.6 L100.3,764.7 L104.4,764.9 L108.4,765.0 L112.5,765.0 L116.5,765.0 L120.6,765.0 L124.6,764.9 L128.7,764.7 L132.7,764.6 L136.8,764.3 L140.8,764.1 L144.9,763.8 L148.9,763.4 L153.0,763.0" stroke="#e4b800" stroke-width="1.5" stroke-linecap="round" fill="none" opacity="0.7"/>
<path d="M90.0,776.0 L93.0,776.2 L96.1,776.5 L99.1,776.7 L102.2,776.9 L105.2,777.1 L108.3,777.3 L111.3,777.5 L114.4,777.7 L117.5,777.9 L120.5,778.0 L123.6,778.2 L126.6,778.3 L129.7,778.4 L132.7,778.6 L135.8,778.7 L138.8,778.8 L141.9,778.9 L144.9,778.9 L148.0,779.0" stroke="#d0a400" stroke-width="4.4" stroke-linecap="round" fill="none"/><path d="M90.0,776.0 L93.0,776.2 L96.1,776.5 L99.1,776.7 L102.2,776.9 L105.2,777.1 L108.3,777.3 L111.3,777.5 L114.4,777.7 L117.5,777.9 L120.5,778.0 L123.6,778.2 L126.6,778.3 L129.7,778.4 L132.7,778.6 L135.8,778.7 L138.8,778.8 L141.9,778.9 L144.9,778.9 L148.0,779.0" stroke="#e4b800" stroke-width="1.5" stroke-linecap="round" fill="none" opacity="0.7"/>
<path d="M273.0,878.0 L273.4,881.2 L273.8,884.3 L274.1,887.5 L274.3,890.6 L274.6,893.8 L274.7,896.9 L274.9,900.1 L275.0,903.2 L275.0,906.4 L275.0,909.6 L275.0,912.7 L274.9,915.9 L274.7,919.0 L274.6,922.2 L274.3,925.4 L274.1,928.5 L273.8,931.7 L273.4,934.8 L273.0,938.0" stroke="#d0a400" stroke-width="4.4" stroke-linecap="round" fill="none"/><path d="M273.0,878.0 L273.4,881.2 L273.8,884.3 L274.1,887.5 L274.3,890.6 L274.6,893.8 L274.7,896.9 L274.9,900.1 L275.0,903.2 L275.0,906.4 L275.0,909.6 L275.0,912.7 L274.9,915.9 L274.7,919.0 L274.6,922.2 L274.3,925.4 L274.1,928.5 L273.8,931.7 L273.4,934.8 L273.0,938.0" stroke="#e4b800" stroke-width="1.5" stroke-linecap="round" fill="none" opacity="0.7"/>
<path d="M300.0,850.0 L301.6,853.6 L303.2,857.2 L304.8,860.7 L306.4,864.3 L307.9,867.9 L309.4,871.5 L311.0,875.2 L312.5,878.8 L313.9,882.4 L315.4,886.0 L316.9,889.7 L318.3,893.3 L319.7,897.0 L321.2,900.6 L322.6,904.3 L323.9,908.0 L325.3,911.6 L326.7,915.3 L328.0,919.0" stroke="#d0a400" stroke-width="4.4" stroke-linecap="round" fill="none"/><path d="M300.0,850.0 L301.6,853.6 L303.2,857.2 L304.8,860.7 L306.4,864.3 L307.9,867.9 L309.4,871.5 L311.0,875.2 L312.5,878.8 L313.9,882.4 L315.4,886.0 L316.9,889.7 L318.3,893.3 L319.7,897.0 L321.2,900.6 L322.6,904.3 L323.9,908.0 L325.3,911.6 L326.7,915.3 L328.0,919.0" stroke="#e4b800" stroke-width="1.5" stroke-linecap="round" fill="none" opacity="0.7"/>
<path d="M153.0,858.0 L152.7,860.6 L152.4,863.3 L152.1,865.9 L151.7,868.5 L151.5,871.1 L151.2,873.8 L150.9,876.4 L150.6,879.0 L150.3,881.7 L150.1,884.3 L149.8,886.9 L149.6,889.6 L149.3,892.2 L149.1,894.8 L148.9,897.5 L148.6,900.1 L148.4,902.7 L148.2,905.4 L148.0,908.0" stroke="#d0a400" stroke-width="4.4" stroke-linecap="round" fill="none"/><path d="M153.0,858.0 L152.7,860.6 L152.4,863.3 L152.1,865.9 L151.7,868.5 L151.5,871.1 L151.2,873.8 L150.9,876.4 L150.6,879.0 L150.3,881.7 L150.1,884.3 L149.8,886.9 L149.6,889.6 L149.3,892.2 L149.1,894.8 L148.9,897.5 L148.6,900.1 L148.4,902.7 L148.2,905.4 L148.0,908.0" stroke="#e4b800" stroke-width="1.5" stroke-linecap="round" fill="none" opacity="0.7"/>
<path d="M169.0,924.0 L169.3,926.7 L169.6,929.5 L169.9,932.2 L170.3,934.9 L170.6,937.7 L170.9,940.4 L171.2,943.2 L171.5,945.9 L171.8,948.6 L172.2,951.4 L172.5,954.1 L172.8,956.8 L173.1,959.6 L173.4,962.3 L173.7,965.1 L174.1,967.8 L174.4,970.5 L174.7,973.3 L175.0,976.0" stroke="#d0a400" stroke-width="4.4" stroke-linecap="round" fill="none"/><path d="M169.0,924.0 L169.3,926.7 L169.6,929.5 L169.9,932.2 L170.3,934.9 L170.6,937.7 L170.9,940.4 L171.2,943.2 L171.5,945.9 L171.8,948.6 L172.2,951.4 L172.5,954.1 L172.8,956.8 L173.1,959.6 L173.4,962.3 L173.7,965.1 L174.1,967.8 L174.4,970.5 L174.7,973.3 L175.0,976.0" stroke="#e4b800" stroke-width="1.5" stroke-linecap="round" fill="none" opacity="0.7"/>
<path d="M419.0,809.0 L425.9,809.2 L432.9,809.4 L439.8,809.6 L446.7,809.9 L453.6,810.3 L460.5,810.6 L467.4,811.1 L474.3,811.6 L481.2,812.1 L488.1,812.7 L495.0,813.3 L501.9,814.0 L508.8,814.7 L515.7,815.5 L522.5,816.3 L529.4,817.1 L536.3,818.0 L543.1,819.0 L550.0,820.0" stroke="#d0a400" stroke-width="4.4" stroke-linecap="round" fill="none"/><path d="M419.0,809.0 L425.9,809.2 L432.9,809.4 L439.8,809.6 L446.7,809.9 L453.6,810.3 L460.5,810.6 L467.4,811.1 L474.3,811.6 L481.2,812.1 L488.1,812.7 L495.0,813.3 L501.9,814.0 L508.8,814.7 L515.7,815.5 L522.5,816.3 L529.4,817.1 L536.3,818.0 L543.1,819.0 L550.0,820.0" stroke="#e4b800" stroke-width="1.5" stroke-linecap="round" fill="none" opacity="0.7"/>
<path d="M419.0,826.0 L423.2,826.1 L427.3,826.3 L431.5,826.5 L435.7,826.7 L439.8,826.9 L444.0,827.1 L448.1,827.3 L452.3,827.5 L456.5,827.8 L460.6,828.0 L464.8,828.3 L468.9,828.6 L473.1,828.9 L477.2,829.2 L481.4,829.6 L485.5,829.9 L489.7,830.3 L493.8,830.6 L498.0,831.0" stroke="#d0a400" stroke-width="4.4" stroke-linecap="round" fill="none"/><path d="M419.0,826.0 L423.2,826.1 L427.3,826.3 L431.5,826.5 L435.7,826.7 L439.8,826.9 L444.0,827.1 L448.1,827.3 L452.3,827.5 L456.5,827.8 L460.6,828.0 L464.8,828.3 L468.9,828.6 L473.1,828.9 L477.2,829.2 L481.4,829.6 L485.5,829.9 L489.7,830.3 L493.8,830.6 L498.0,831.0" stroke="#e4b800" stroke-width="1.5" stroke-linecap="round" fill="none" opacity="0.7"/>
<path d="M433.0,850.0 L437.9,853.0 L442.7,856.0 L447.5,859.0 L452.4,862.0 L457.2,865.1 L462.0,868.1 L466.7,871.2 L471.5,874.4 L476.2,877.5 L481.0,880.7 L485.7,883.8 L490.4,887.0 L495.1,890.3 L499.8,893.5 L504.5,896.8 L509.1,900.0 L513.8,903.3 L518.4,906.7 L523.0,910.0" stroke="#d0a400" stroke-width="4.4" stroke-linecap="round" fill="none"/><path d="M433.0,850.0 L437.9,853.0 L442.7,856.0 L447.5,859.0 L452.4,862.0 L457.2,865.1 L462.0,868.1 L466.7,871.2 L471.5,874.4 L476.2,877.5 L481.0,880.7 L485.7,883.8 L490.4,887.0 L495.1,890.3 L499.8,893.5 L504.5,896.8 L509.1,900.0 L513.8,903.3 L518.4,906.7 L523.0,910.0" stroke="#e4b800" stroke-width="1.5" stroke-linecap="round" fill="none" opacity="0.7"/>
<path d="M488.0,845.0 L492.5,846.6 L497.0,848.2 L501.4,849.9 L505.9,851.7 L510.3,853.4 L514.7,855.2 L519.1,857.1 L523.4,859.0 L527.8,861.0 L532.1,863.0 L536.4,865.0 L540.7,867.1 L544.9,869.2 L549.2,871.4 L553.4,873.7 L557.6,875.9 L561.7,878.2 L565.9,880.6 L570.0,883.0" stroke="#d0a400" stroke-width="4.4" stroke-linecap="round" fill="none"/><path d="M488.0,845.0 L492.5,846.6 L497.0,848.2 L501.4,849.9 L505.9,851.7 L510.3,853.4 L514.7,855.2 L519.1,857.1 L523.4,859.0 L527.8,861.0 L532.1,863.0 L536.4,865.0 L540.7,867.1 L544.9,869.2 L549.2,871.4 L553.4,873.7 L557.6,875.9 L561.7,878.2 L565.9,880.6 L570.0,883.0" stroke="#e4b800" stroke-width="1.5" stroke-linecap="round" fill="none" opacity="0.7"/>
<path d="M529.0,798.0 L533.4,798.8 L537.8,799.7 L542.2,800.7 L546.5,801.7 L550.9,802.7 L555.2,803.8 L559.5,805.0 L563.8,806.2 L568.1,807.4 L572.4,808.7 L576.6,810.1 L580.9,811.5 L585.1,813.0 L589.3,814.5 L593.4,816.1 L597.6,817.8 L601.8,819.5 L605.9,821.2 L610.0,823.0" stroke="#d0a400" stroke-width="4.4" stroke-linecap="round" fill="none"/><path d="M529.0,798.0 L533.4,798.8 L537.8,799.7 L542.2,800.7 L546.5,801.7 L550.9,802.7 L555.2,803.8 L559.5,805.0 L563.8,806.2 L568.1,807.4 L572.4,808.7 L576.6,810.1 L580.9,811.5 L585.1,813.0 L589.3,814.5 L593.4,816.1 L597.6,817.8 L601.8,819.5 L605.9,821.2 L610.0,823.0" stroke="#e4b800" stroke-width="1.5" stroke-linecap="round" fill="none" opacity="0.7"/>
<path d="M337.0,837.0 L337.4,839.8 L337.8,842.7 L338.2,845.5 L338.6,848.4 L339.0,851.2 L339.4,854.1 L339.8,856.9 L340.2,859.8 L340.6,862.6 L341.1,865.4 L341.5,868.3 L341.9,871.1 L342.3,874.0 L342.8,876.8 L343.2,879.6 L343.7,882.5 L344.1,885.3 L344.5,888.2 L345.0,891.0" stroke="#d0a400" stroke-width="4.4" stroke-linecap="round" fill="none"/><path d="M337.0,837.0 L337.4,839.8 L337.8,842.7 L338.2,845.5 L338.6,848.4 L339.0,851.2 L339.4,854.1 L339.8,856.9 L340.2,859.8 L340.6,862.6 L341.1,865.4 L341.5,868.3 L341.9,871.1 L342.3,874.0 L342.8,876.8 L343.2,879.6 L343.7,882.5 L344.1,885.3 L344.5,888.2 L345.0,891.0" stroke="#e4b800" stroke-width="1.5" stroke-linecap="round" fill="none" opacity="0.7"/>
<path d="M408.0,919.0 L409.2,921.6 L410.4,924.1 L411.6,926.7 L412.8,929.2 L414.0,931.8 L415.2,934.4 L416.4,936.9 L417.5,939.5 L418.7,942.1 L419.9,944.7 L421.0,947.2 L422.1,949.8 L423.3,952.4 L424.4,955.0 L425.5,957.6 L426.7,960.2 L427.8,962.8 L428.9,965.4 L430.0,968.0" stroke="#d0a400" stroke-width="4.4" stroke-linecap="round" fill="none"/><path d="M408.0,919.0 L409.2,921.6 L410.4,924.1 L411.6,926.7 L412.8,929.2 L414.0,931.8 L415.2,934.4 L416.4,936.9 L417.5,939.5 L418.7,942.1 L419.9,944.7 L421.0,947.2 L422.1,949.8 L423.3,952.4 L424.4,955.0 L425.5,957.6 L426.7,960.2 L427.8,962.8 L428.9,965.4 L430.0,968.0" stroke="#e4b800" stroke-width="1.5" stroke-linecap="round" fill="none" opacity="0.7"/>
<path d="M310.0,891.0 L311.6,893.7 L313.2,896.4 L314.8,899.0 L316.4,901.7 L318.1,904.3 L319.7,906.9 L321.4,909.6 L323.1,912.2 L324.8,914.7 L326.6,917.3 L328.3,919.9 L330.1,922.4 L331.9,925.0 L333.7,927.5 L335.5,930.0 L337.4,932.5 L339.2,935.0 L341.1,937.5 L343.0,940.0" stroke="#d0a400" stroke-width="4.4" stroke-linecap="round" fill="none"/><path d="M310.0,891.0 L311.6,893.7 L313.2,896.4 L314.8,899.0 L316.4,901.7 L318.1,904.3 L319.7,906.9 L321.4,909.6 L323.1,912.2 L324.8,914.7 L326.6,917.3 L328.3,919.9 L330.1,922.4 L331.9,925.0 L333.7,927.5 L335.5,930.0 L337.4,932.5 L339.2,935.0 L341.1,937.5 L343.0,940.0" stroke="#e4b800" stroke-width="1.5" stroke-linecap="round" fill="none" opacity="0.7"/>
<path d="M390.0,815.0 L394.1,813.2 L398.2,811.5 L402.3,809.8 L406.4,808.2 L410.5,806.7 L414.6,805.1 L418.8,803.7 L423.0,802.3 L427.2,800.9 L431.4,799.6 L435.6,798.3 L439.9,797.1 L444.1,795.9 L448.4,794.8 L452.7,793.7 L457.0,792.7 L461.3,791.8 L465.6,790.9 L470.0,790.0" stroke="#d0a400" stroke-width="4.4" stroke-linecap="round" fill="none"/><path d="M390.0,815.0 L394.1,813.2 L398.2,811.5 L402.3,809.8 L406.4,808.2 L410.5,806.7 L414.6,805.1 L418.8,803.7 L423.0,802.3 L427.2,800.9 L431.4,799.6 L435.6,798.3 L439.9,797.1 L444.1,795.9 L448.4,794.8 L452.7,793.7 L457.0,792.7 L461.3,791.8 L465.6,790.9 L470.0,790.0" stroke="#e4b800" stroke-width="1.5" stroke-linecap="round" fill="none" opacity="0.7"/>
</g>
<g filter="url(#b16)">
<ellipse cx="600" cy="930" rx="60" ry="60" fill="#2e8a34" opacity="0.55"/>
<ellipse cx="520" cy="900" rx="90" ry="50" fill="#8a8400" opacity="0.35"/>
<ellipse cx="40" cy="960" rx="60" ry="30" fill="#8a8400" opacity="0.3"/>
</g>
</g>
</svg>
<svg width="1062" height="943" viewBox="858 34 1062 943" style="left:858px;top:34px">
<defs><clipPath id="rclip"><rect x="858" y="34" width="1062" height="943"/></clipPath><clipPath id="rcA"><path d="M1084.7,419.2 L1095.5,414.9 L1106.0,414.9 L1116.3,418.2 L1126.6,423.7 L1136.7,430.5 L1146.9,437.3 L1157.1,443.5 L1167.3,448.9 L1177.5,453.8 L1187.9,458.4 L1198.2,463.0 L1208.6,467.7 L1219.1,472.6 L1229.7,477.6 L1240.4,482.3 L1251.2,486.3 L1262.3,489.4 L1273.7,491.5 L1285.2,492.7 L1296.8,493.4 L1308.4,494.0 L1320.0,494.8 L1331.5,495.9 L1342.9,497.6 L1354.2,499.7 L1365.5,502.2 L1376.7,505.0 L1387.8,508.0 L1398.9,511.3 L1410.0,514.6 L1421.1,518.0 L1432.2,521.4 L1443.3,524.7 L1454.5,527.9 L1465.7,531.1 L1476.8,534.2 L1487.9,537.5 L1498.9,541.1 L1509.7,544.9 L1520.4,549.3 L1530.8,554.1 L1541.1,559.5 L1551.1,565.2 L1561.0,571.3 L1570.7,577.6 L1580.3,584.2 L1589.7,590.9 L1599.1,597.7 L1608.5,604.4 L1617.9,611.1 L1627.5,617.6 L1637.2,623.8 L1647.2,629.7 L1657.3,635.1 L1667.8,640.0 L1678.3,644.7 L1689.0,649.2 L1699.6,653.7 L1710.2,658.5 L1720.6,663.3 L1731.0,668.4 L1741.4,673.5 L1751.8,678.7 L1762.1,683.9 L1772.4,689.1 L1782.7,694.3 L1793.0,699.5 L1803.4,704.6 L1813.8,709.6 L1824.3,714.5 L1834.9,719.2 L1845.5,723.7 L1856.3,728.0 L1867.1,732.0 L1878.1,735.8 L1754.9,856.1 L1748.7,848.6 L1742.7,841.0 L1736.8,833.3 L1730.9,825.5 L1725.1,817.7 L1719.2,809.9 L1713.3,802.2 L1707.2,794.7 L1701.0,787.3 L1694.6,780.0 L1687.9,773.1 L1680.9,766.4 L1673.5,760.0 L1666.0,753.9 L1658.2,748.1 L1650.1,742.5 L1641.9,737.2 L1633.6,732.1 L1625.1,727.2 L1616.5,722.6 L1607.8,718.2 L1599.1,713.9 L1590.4,709.7 L1581.8,705.3 L1573.3,700.8 L1565.0,695.9 L1556.8,690.6 L1548.7,685.3 L1540.4,680.3 L1531.8,675.8 L1523.0,671.7 L1514.0,668.1 L1504.9,664.7 L1495.7,661.6 L1486.4,658.7 L1477.0,655.9 L1467.6,653.2 L1458.3,650.5 L1448.9,647.7 L1439.7,644.8 L1430.5,641.6 L1421.4,638.2 L1412.5,634.5 L1403.8,630.4 L1395.2,626.0 L1386.8,621.2 L1378.7,616.0 L1370.8,610.3 L1363.2,604.3 L1355.6,598.1 L1347.9,591.9 L1340.1,586.1 L1332.1,580.6 L1323.9,575.4 L1315.6,570.4 L1307.1,565.6 L1298.6,560.9 L1290.1,556.2 L1281.7,551.4 L1273.3,546.5 L1265.1,541.4 L1257.0,536.0 L1249.0,530.5 L1241.1,524.9 L1233.0,519.6 L1224.6,514.7 L1216.0,510.2 L1207.3,506.0 L1198.4,502.0 L1189.5,497.9 L1180.7,493.8 L1172.0,489.5 L1163.5,484.8 L1155.4,479.6 L1147.6,473.9 L1140.0,467.8 L1132.6,461.4 L1125.3,455.0 L1118.0,448.5 L1110.6,442.1 L1103.0,436.0 L1095.2,430.2 L1087.0,425.0 Z"/></clipPath><clipPath id="rcB"><path d="M1292.2,363.6 L1299.4,359.4 L1307.2,357.8 L1315.3,358.3 L1323.5,360.4 L1331.5,363.6 L1339.2,367.3 L1346.9,371.0 L1354.5,374.1 L1362.4,376.0 L1370.4,376.9 L1378.6,377.1 L1386.9,376.7 L1395.3,376.0 L1403.8,375.2 L1412.3,374.6 L1420.7,374.4 L1429.1,374.8 L1437.3,375.9 L1445.5,377.5 L1453.5,379.5 L1461.6,381.9 L1469.5,384.6 L1477.4,387.4 L1485.3,390.3 L1493.1,393.3 L1500.9,396.2 L1508.8,399.1 L1516.6,401.9 L1524.5,404.5 L1532.4,407.1 L1540.4,409.4 L1548.5,411.5 L1556.6,413.4 L1564.8,415.0 L1573.2,416.2 L1581.5,417.5 L1589.7,419.1 L1597.9,420.9 L1606.0,422.9 L1614.1,425.0 L1622.2,427.2 L1630.2,429.5 L1638.2,431.9 L1646.2,434.2 L1654.3,436.4 L1662.4,438.5 L1670.5,440.5 L1678.6,442.3 L1686.8,444.0 L1695.0,445.7 L1703.2,447.4 L1711.3,449.3 L1719.4,451.3 L1727.5,453.7 L1735.4,456.3 L1743.3,459.2 L1751.0,462.3 L1758.7,465.8 L1766.2,469.4 L1773.6,473.3 L1780.9,477.4 L1788.1,481.8 L1795.2,486.2 L1802.3,490.7 L1809.4,495.0 L1816.7,499.2 L1824.1,503.0 L1831.7,506.5 L1839.4,509.7 L1847.2,512.8 L1855.0,515.7 L1862.9,518.6 L1870.8,521.4 L1878.7,524.1 L1886.6,526.8 L1894.5,529.5 L1902.4,532.1 L1910.4,534.8 L1918.3,537.4 L1926.2,540.0 L1934.2,542.7 L1942.1,545.3 L1950.0,548.0 L1950.0,634.1 L1939.6,631.5 L1929.3,628.7 L1919.1,625.6 L1909.0,622.3 L1899.0,618.9 L1889.0,615.3 L1878.9,611.7 L1868.9,608.1 L1858.7,604.6 L1848.5,601.2 L1838.3,597.9 L1828.0,594.5 L1817.8,591.0 L1807.7,587.3 L1797.8,583.3 L1788.1,578.9 L1778.7,574.1 L1769.7,568.7 L1761.1,562.6 L1753.0,555.9 L1745.2,548.6 L1737.5,541.2 L1729.7,533.9 L1721.6,527.2 L1712.9,521.2 L1703.8,516.0 L1694.3,511.3 L1684.5,507.1 L1674.5,503.1 L1664.4,499.3 L1654.3,495.5 L1644.2,491.5 L1634.3,487.5 L1624.3,483.3 L1614.4,479.2 L1604.5,475.3 L1594.6,471.6 L1584.5,468.2 L1574.4,465.1 L1564.1,462.5 L1553.8,460.1 L1543.4,457.8 L1533.0,455.6 L1522.6,453.3 L1512.1,451.1 L1501.7,448.8 L1491.2,446.5 L1480.8,444.1 L1470.4,441.5 L1460.0,438.9 L1449.7,436.0 L1439.5,433.0 L1429.3,429.8 L1419.3,426.4 L1409.3,422.7 L1399.4,418.7 L1389.7,414.4 L1380.1,409.8 L1370.5,405.0 L1361.1,400.1 L1351.6,395.1 L1342.2,390.0 L1332.7,385.1 L1323.2,380.2 L1313.6,375.6 L1303.9,371.3 L1294.0,367.3 Z"/></clipPath></defs>
<g clip-path="url(#rclip)">
<rect x="858" y="34" width="1062" height="943" fill="#777777"/>
<path d="M388.1,570.7L1397.9,321.7M388.1,570.7L796.4,5133.2M390.8,601.5L1431.1,330.1M498.4,543.5L1410.1,3396.1M393.9,636.1L1466.6,339.1M598.2,518.9L1712.3,2540.6M397.5,675.4L1504.3,348.7M689.0,496.5L1892.1,2031.5M401.5,720.5L1544.8,359.0M771.9,476.1L2011.4,1693.7M406.2,772.5L1588.1,370.0M847.9,457.3L2096.4,1453.3M411.6,833.4L1634.6,381.8M917.9,440.1L2159.9,1273.4M418.1,905.5L1684.8,394.5M982.5,424.1L2209.2,1133.8M435.4,1098.8L1797.8,423.2M1097.8,395.7L2280.8,931.1M447.3,1232.6L1861.8,439.5M1149.5,382.9L2307.6,855.2M462.8,1405.6L1931.6,457.2M1197.8,371.0L2330.3,791.1M483.6,1638.2L2008.2,476.6M1243.0,359.9L2349.7,736.1M513.1,1967.4L2092.5,498.0M1285.3,349.5L2366.5,688.5M558.0,2469.2L2185.8,521.7M1325.1,339.6L2381.2,646.9M634.8,3327.8L2289.5,548.1M1362.6,330.4L2394.2,610.2M796.4,5133.2L2405.7,577.6M1397.9,321.7L2405.7,577.6" stroke="#676767" stroke-width="1" fill="none"/>
<path d="M1042.3,409.4L2248.6,1022.2" stroke="#b02828" stroke-width="1" fill="none"/>
<path d="M425.8,992.3L1739.0,408.3" stroke="#3e9a3e" stroke-width="1" fill="none"/>
<path d="M1387.5,34 L1400.5,977" stroke="#585858" stroke-width="1" fill="none"/>
<path d="M1292.2,363.6 L1299.4,359.4 L1307.2,357.8 L1315.3,358.3 L1323.5,360.4 L1331.5,363.6 L1339.2,367.3 L1346.9,371.0 L1354.5,374.1 L1362.4,376.0 L1370.4,376.9 L1378.6,377.1 L1386.9,376.7 L1395.3,376.0 L1403.8,375.2 L1412.3,374.6 L1420.7,374.4 L1429.1,374.8 L1437.3,375.9 L1445.5,377.5 L1453.5,379.5 L1461.6,381.9 L1469.5,384.6 L1477.4,387.4 L1485.3,390.3 L1493.1,393.3 L1500.9,396.2 L1508.8,399.1 L1516.6,401.9 L1524.5,404.5 L1532.4,407.1 L1540.4,409.4 L1548.5,411.5 L1556.6,413.4 L1564.8,415.0 L1573.2,416.2 L1581.5,417.5 L1589.7,419.1 L1597.9,420.9 L1606.0,422.9 L1614.1,425.0 L1622.2,427.2 L1630.2,429.5 L1638.2,431.9 L1646.2,434.2 L1654.3,436.4 L1662.4,438.5 L1670.5,440.5 L1678.6,442.3 L1686.8,444.0 L1695.0,445.7 L1703.2,447.4 L1711.3,449.3 L1719.4,451.3 L1727.5,453.7 L1735.4,456.3 L1743.3,459.2 L1751.0,462.3 L1758.7,465.8 L1766.2,469.4 L1773.6,473.3 L1780.9,477.4 L1788.1,481.8 L1795.2,486.2 L1802.3,490.7 L1809.4,495.0 L1816.7,499.2 L1824.1,503.0 L1831.7,506.5 L1839.4,509.7 L1847.2,512.8 L1855.0,515.7 L1862.9,518.6 L1870.8,521.4 L1878.7,524.1 L1886.6,526.8 L1894.5,529.5 L1902.4,532.1 L1910.4,534.8 L1918.3,537.4 L1926.2,540.0 L1934.2,542.7 L1942.1,545.3 L1950.0,548.0 L1950.0,634.1 L1939.6,631.5 L1929.3,628.7 L1919.1,625.6 L1909.0,622.3 L1899.0,618.9 L1889.0,615.3 L1878.9,611.7 L1868.9,608.1 L1858.7,604.6 L1848.5,601.2 L1838.3,597.9 L1828.0,594.5 L1817.8,591.0 L1807.7,587.3 L1797.8,583.3 L1788.1,578.9 L1778.7,574.1 L1769.7,568.7 L1761.1,562.6 L1753.0,555.9 L1745.2,548.6 L1737.5,541.2 L1729.7,533.9 L1721.6,527.2 L1712.9,521.2 L1703.8,516.0 L1694.3,511.3 L1684.5,507.1 L1674.5,503.1 L1664.4,499.3 L1654.3,495.5 L1644.2,491.5 L1634.3,487.5 L1624.3,483.3 L1614.4,479.2 L1604.5,475.3 L1594.6,471.6 L1584.5,468.2 L1574.4,465.1 L1564.1,462.5 L1553.8,460.1 L1543.4,457.8 L1533.0,455.6 L1522.6,453.3 L1512.1,451.1 L1501.7,448.8 L1491.2,446.5 L1480.8,444.1 L1470.4,441.5 L1460.0,438.9 L1449.7,436.0 L1439.5,433.0 L1429.3,429.8 L1419.3,426.4 L1409.3,422.7 L1399.4,418.7 L1389.7,414.4 L1380.1,409.8 L1370.5,405.0 L1361.1,400.1 L1351.6,395.1 L1342.2,390.0 L1332.7,385.1 L1323.2,380.2 L1313.6,375.6 L1303.9,371.3 L1294.0,367.3 Z" fill="#b2ae30"/>
<g clip-path="url(#rcB)">
<path d="M1344.9,370.1 L1354.0,374.7 L1363.2,379.0 L1372.4,383.1 L1381.7,387.0 L1391.0,390.6 L1400.5,394.0 L1409.9,397.1 L1419.5,400.0 L1429.0,402.8 L1438.7,405.3 L1448.4,407.6 L1458.1,409.7 L1468.0,411.7 L1477.8,413.5 L1487.8,415.1 L1497.8,416.5 L1507.8,417.8 L1517.9,419.0 L1528.0,420.1 L1538.1,421.2 L1548.2,422.3 L1558.3,423.5 L1568.4,424.7 L1578.4,426.2 L1588.3,427.8 L1598.1,429.7 L1607.8,431.9 L1617.4,434.4 L1626.9,437.3 L1636.2,440.7 L1645.3,444.5 L1654.3,448.8 L1663.0,453.7 L1671.4,459.1 L1679.5,465.1 L1687.2,471.6 L1694.5,478.6 L1701.3,486.1 L1707.6,494.1 L1713.2,502.6 L1718.2,511.4 L1722.5,520.6 L1726.0,530.2 L1740.0,560.0 L1600.0,480.0 L1400.0,440.0 L1300.0,380.0 Z" fill="#8e8a22" filter="url(#b2)"/>
<path d="M1344.9,370.1 L1354.0,374.7 L1363.2,379.0 L1372.4,383.1 L1381.7,387.0 L1391.0,390.6 L1400.5,394.0 L1409.9,397.1 L1419.5,400.0 L1429.0,402.8 L1438.7,405.3 L1448.4,407.6 L1458.1,409.7 L1468.0,411.7 L1477.8,413.5 L1487.8,415.1 L1497.8,416.5 L1507.8,417.8 L1517.9,419.0 L1528.0,420.1 L1538.1,421.2 L1548.2,422.3 L1558.3,423.5 L1568.4,424.7 L1578.4,426.2 L1588.3,427.8 L1598.1,429.7 L1607.8,431.9 L1617.4,434.4 L1626.9,437.3 L1636.2,440.7 L1645.3,444.5 L1654.3,448.8 L1663.0,453.7 L1671.4,459.1 L1679.5,465.1 L1687.2,471.6 L1694.5,478.6 L1701.3,486.1 L1707.6,494.1 L1713.2,502.6 L1718.2,511.4 L1722.5,520.6 L1726.0,530.2" stroke="#c8c444" stroke-width="4" fill="none" filter="url(#b2)"/>
<path d="M1363,378 C1400,377 1430,376 1450,380 C1500,392 1540,405 1580,420 L1580,426 L1480,413 L1423,400 L1393,392Z" fill="#c0bc3a" filter="url(#b2)"/>
<path d="M1290,362 L1340,366 L1360,378 L1340,388 L1290,368Z" fill="#a8a42a" filter="url(#b2)"/>
<ellipse cx="1600" cy="430" rx="40" ry="7" fill="#c6c244" filter="url(#b3)" transform="rotate(14 1600 430)"/>
<ellipse cx="1775" cy="485" rx="26" ry="10" fill="#d6d46a" filter="url(#b6)" transform="rotate(28 1775 485)"/>
<path d="M1712,505 C1730,540 1750,565 1790,582" stroke="#9c9826" stroke-width="8" fill="none" filter="url(#b6)"/>
<path d="M1857.0,604.0 L1847.5,600.4 L1837.7,597.0 L1827.8,593.7 L1817.7,590.3 L1807.7,586.8 L1797.8,583.0 L1788.0,578.9 L1778.6,574.2 L1769.6,569.0 L1761.0,563.2 L1753.0,556.6 L1745.4,549.4 L1738.1,541.9 L1730.6,534.6 L1722.9,527.8 L1714.6,521.7 L1705.8,516.4 L1696.5,511.7 L1686.9,507.5 L1677.1,503.6 L1667.1,499.9 L1657.1,496.4 L1647.1,492.7 L1637.2,489.0 L1627.4,485.3 L1617.6,481.5 L1607.8,477.7 L1598.1,474.0 L1588.3,470.4 L1578.5,467.0 L1568.7,463.8 L1558.7,460.8 L1548.7,458.2 L1538.6,455.8 L1528.3,453.7 L1518.0,451.8 L1507.7,449.9 L1497.3,448.0 L1487.0,445.8 L1476.8,443.5 L1466.6,441.0 L1456.5,438.3 L1446.5,435.3 L1436.5,432.2 L1426.6,428.8 L1416.8,425.3 L1407.0,421.5 L1397.4,417.5 L1387.8,413.4 L1378.3,409.0 L1368.9,404.4 L1359.6,399.6 L1350.4,394.6 L1341.2,389.6 L1332.0,384.7 L1322.8,379.9 L1313.4,375.3 L1303.8,371.1 L1294.0,367.4" stroke="#5a580c" stroke-width="5" fill="none" filter="url(#b2)" opacity="0.6"/>
</g>
<path d="M1084.7,419.2 L1095.5,414.9 L1106.0,414.9 L1116.3,418.2 L1126.6,423.7 L1136.7,430.5 L1146.9,437.3 L1157.1,443.5 L1167.3,448.9 L1177.5,453.8 L1187.9,458.4 L1198.2,463.0 L1208.6,467.7 L1219.1,472.6 L1229.7,477.6 L1240.4,482.3 L1251.2,486.3 L1262.3,489.4 L1273.7,491.5 L1285.2,492.7 L1296.8,493.4 L1308.4,494.0 L1320.0,494.8 L1331.5,495.9 L1342.9,497.6 L1354.2,499.7 L1365.5,502.2 L1376.7,505.0 L1387.8,508.0 L1398.9,511.3 L1410.0,514.6 L1421.1,518.0 L1432.2,521.4 L1443.3,524.7 L1454.5,527.9 L1465.7,531.1 L1476.8,534.2 L1487.9,537.5 L1498.9,541.1 L1509.7,544.9 L1520.4,549.3 L1530.8,554.1 L1541.1,559.5 L1551.1,565.2 L1561.0,571.3 L1570.7,577.6 L1580.3,584.2 L1589.7,590.9 L1599.1,597.7 L1608.5,604.4 L1617.9,611.1 L1627.5,617.6 L1637.2,623.8 L1647.2,629.7 L1657.3,635.1 L1667.8,640.0 L1678.3,644.7 L1689.0,649.2 L1699.6,653.7 L1710.2,658.5 L1720.6,663.3 L1731.0,668.4 L1741.4,673.5 L1751.8,678.7 L1762.1,683.9 L1772.4,689.1 L1782.7,694.3 L1793.0,699.5 L1803.4,704.6 L1813.8,709.6 L1824.3,714.5 L1834.9,719.2 L1845.5,723.7 L1856.3,728.0 L1867.1,732.0 L1878.1,735.8 L1754.9,856.1 L1748.7,848.6 L1742.7,841.0 L1736.8,833.3 L1730.9,825.5 L1725.1,817.7 L1719.2,809.9 L1713.3,802.2 L1707.2,794.7 L1701.0,787.3 L1694.6,780.0 L1687.9,773.1 L1680.9,766.4 L1673.5,760.0 L1666.0,753.9 L1658.2,748.1 L1650.1,742.5 L1641.9,737.2 L1633.6,732.1 L1625.1,727.2 L1616.5,722.6 L1607.8,718.2 L1599.1,713.9 L1590.4,709.7 L1581.8,705.3 L1573.3,700.8 L1565.0,695.9 L1556.8,690.6 L1548.7,685.3 L1540.4,680.3 L1531.8,675.8 L1523.0,671.7 L1514.0,668.1 L1504.9,664.7 L1495.7,661.6 L1486.4,658.7 L1477.0,655.9 L1467.6,653.2 L1458.3,650.5 L1448.9,647.7 L1439.7,644.8 L1430.5,641.6 L1421.4,638.2 L1412.5,634.5 L1403.8,630.4 L1395.2,626.0 L1386.8,621.2 L1378.7,616.0 L1370.8,610.3 L1363.2,604.3 L1355.6,598.1 L1347.9,591.9 L1340.1,586.1 L1332.1,580.6 L1323.9,575.4 L1315.6,570.4 L1307.1,565.6 L1298.6,560.9 L1290.1,556.2 L1281.7,551.4 L1273.3,546.5 L1265.1,541.4 L1257.0,536.0 L1249.0,530.5 L1241.1,524.9 L1233.0,519.6 L1224.6,514.7 L1216.0,510.2 L1207.3,506.0 L1198.4,502.0 L1189.5,497.9 L1180.7,493.8 L1172.0,489.5 L1163.5,484.8 L1155.4,479.6 L1147.6,473.9 L1140.0,467.8 L1132.6,461.4 L1125.3,455.0 L1118.0,448.5 L1110.6,442.1 L1103.0,436.0 L1095.2,430.2 L1087.0,425.0 Z" fill="#b8b436"/>
<g clip-path="url(#rcA)">
<path d="M1090.1,427.9 L1101.7,434.1 L1113.1,440.6 L1124.4,447.3 L1135.6,454.2 L1146.8,461.0 L1158.0,467.7 L1169.4,474.1 L1181.0,480.1 L1192.8,485.7 L1204.9,490.6 L1217.4,495.0 L1230.0,499.0 L1242.6,503.1 L1255.0,507.4 L1267.1,512.3 L1278.8,517.9 L1289.9,524.4 L1300.4,531.8 L1310.1,540.3 L1319.3,549.6 L1328.1,559.4 L1336.8,569.5 L1345.5,579.6 L1354.4,589.4 L1363.8,598.6 L1373.9,607.0 L1384.9,614.2 L1343.0,592.0 L1260.0,545.0 L1150.0,490.0 L1085.0,425.0 Z" fill="#8c8822" filter="url(#b2)"/>
<path d="M1390.0,616.1 L1400.1,616.6 L1410.2,616.9 L1420.3,617.2 L1430.5,617.4 L1440.6,617.8 L1450.6,618.4 L1460.7,619.3 L1470.6,620.7 L1480.5,622.6 L1490.3,624.9 L1500.0,627.6 L1509.8,630.3 L1519.5,633.2 L1529.2,636.3 L1538.8,639.6 L1548.3,643.1 L1557.6,647.0 L1566.7,651.3 L1575.6,656.1 L1584.2,661.2 L1592.5,666.8 L1600.6,672.8 L1608.4,679.1 L1616.0,685.7 L1623.3,692.7 L1630.5,699.9 L1637.3,707.4 L1644.0,715.2 L1650.4,723.1 L1656.6,731.2 L1662.6,739.5 L1668.3,747.9 L1673.9,756.4 L1679.2,764.9 L1684.4,773.6 L1689.5,782.2 L1694.6,790.8 L1699.8,799.4 L1705.2,807.8 L1710.8,816.2 L1716.8,824.3 L1723.1,832.3 L1730.0,840.0 L1740.0,860.0 L1690.0,780.0 L1600.0,720.0 L1500.0,670.0 L1400.0,635.0 Z" fill="#8e8a24" filter="url(#b2)"/>
<path d="M1120,421 C1150,430 1175,444 1193,457 C1200,462 1205,467 1211,470 C1190,468 1170,462 1150,452 C1140,446 1130,440 1120,421Z" fill="#cac646" filter="url(#b2)"/>
<path d="M1132,437 C1145,440 1160,445 1172,450" stroke="#e8e488" stroke-width="3" fill="none" filter="url(#b2)"/>
<path d="M1127,437 C1140,450 1160,462 1203,474" stroke="#7e7c1a" stroke-width="3" fill="none" filter="url(#b2)"/>
<path d="M1270,506 C1310,512 1350,520 1390,532" stroke="#e6e47c" stroke-width="5" fill="none" filter="url(#b3)"/>
<path d="M1260,495 C1350,500 1420,510 1500,540" stroke="#c4c040" stroke-width="14" fill="none" filter="url(#b6)" opacity="0.7"/>
<ellipse cx="1552" cy="576" rx="26" ry="14" fill="#dcda70" filter="url(#b6)"/>
<path d="M1400,580 C1450,590 1500,610 1540,640" stroke="#a8a42c" stroke-width="16" fill="none" filter="url(#b8)" opacity="0.6"/>
<path d="M1730.0,825.0 L1724.7,816.8 L1719.1,808.8 L1713.2,801.1 L1707.1,793.7 L1700.7,786.4 L1694.1,779.4 L1687.2,772.5 L1680.0,765.9 L1672.7,759.5 L1665.1,753.4 L1657.3,747.5 L1649.3,742.0 L1641.1,736.8 L1632.8,731.9 L1624.3,727.2 L1615.7,722.6 L1607.1,718.1 L1598.5,713.7 L1589.9,709.2 L1581.4,704.6 L1572.9,700.0 L1564.6,695.1 L1556.3,690.0 L1548.1,685.0 L1539.7,680.2 L1531.1,675.8 L1522.3,671.8 L1513.3,668.0 L1504.3,664.6 L1495.1,661.5 L1485.8,658.6 L1476.5,655.8 L1467.1,653.0 L1457.8,650.3 L1448.4,647.5 L1439.2,644.5 L1430.0,641.4 L1420.9,638.0 L1412.1,634.2 L1403.4,630.2 L1394.9,625.7 L1386.6,620.8 L1378.5,615.5 L1370.6,610.0 L1362.7,604.3 L1354.9,598.5 L1347.1,592.6 L1339.3,586.7 L1331.5,580.9 L1323.6,575.2 L1315.5,569.8 L1307.3,564.6 L1298.9,559.8 L1290.3,555.2 L1281.7,550.8 L1273.1,546.3 L1264.7,541.5 L1256.5,536.3 L1248.6,530.7 L1240.8,525.0 L1232.8,519.5 L1224.5,514.6 L1215.9,510.0 L1207.2,505.8 L1198.3,501.8 L1189.4,497.8 L1180.6,493.7 L1171.9,489.4 L1163.4,484.7 L1155.3,479.5 L1147.5,473.8 L1139.9,467.7 L1132.5,461.4 L1125.2,454.9 L1117.9,448.5 L1110.5,442.1 L1102.9,436.0 L1095.1,430.2 L1087.0,425.0" stroke="#4e4c08" stroke-width="4" fill="none" filter="url(#b2)" opacity="0.6"/>
</g>
<path d="M1083.9,424.7 L1084.8,423.0 L1082.9,417.8 L1082.6,423.3ZM1082.9,417.8 L1085.2,417.8 L1089.8,412.8 L1083.6,415.6ZM1089.8,412.8 L1092.2,413.6 L1098.7,409.9 L1091.3,410.7ZM1098.7,409.9 L1098.4,410.8 L1099.7,413.3 L1099.5,410.5ZM1122.5,417.3 L1119.9,415.8 L1111.6,418.3 L1120.3,419.3ZM1111.6,418.3 L1107.8,419.0 L1101.7,428.7 L1111.1,422.2ZM1101.7,428.7 L1099.9,430.7 L1100.7,438.6 L1103.1,431.0ZM1100.7,438.6 L1100.7,439.9 L1103.7,442.5 L1102.0,439.0ZM1103.7,442.5 L1104.4,444.7 L1110.6,447.5 L1106.0,442.5ZM1128.4,447.5 L1126.1,449.8 L1126.4,459.4 L1129.9,450.4ZM1126.4,459.4 L1125.7,462.2 L1130.4,469.3 L1128.9,460.9ZM1130.4,469.3 L1132.2,473.3 L1144.3,477.2 L1134.7,468.8ZM1180.0,438.6 L1182.3,439.9 L1189.8,437.6 L1182.0,436.8ZM1189.8,437.6 L1190.9,441.1 L1200.7,445.5 L1193.5,437.6ZM1200.7,445.5 L1198.4,447.8 L1198.7,457.4 L1202.2,448.4ZM1211.0,465.7 L1207.3,463.2 L1194.6,466.4 L1207.5,468.5ZM1194.6,466.4 L1190.9,466.5 L1183.6,474.7 L1193.5,470.0ZM1183.6,474.7 L1179.8,475.4 L1173.9,485.0 L1183.1,478.5ZM1173.9,485.0 L1174.6,486.5 L1179.4,488.0 L1175.6,484.8ZM1179.4,488.0 L1177.7,490.0 L1178.7,497.6 L1180.8,490.2ZM1178.7,497.6 L1178.6,499.3 L1182.0,503.0 L1180.3,498.3ZM1182.0,503.0 L1183.6,505.5 L1192.0,507.0 L1184.8,502.3ZM1171.0,465.7 L1173.0,466.9 L1179.4,465.0 L1172.7,464.2ZM1239.7,488.0 L1243.1,488.1 L1250.0,481.0 L1240.8,484.8ZM1250.0,481.0 L1253.2,482.6 L1263.0,479.0 L1252.5,478.5ZM1263.0,479.0 L1265.0,482.5 L1276.4,485.0 L1266.9,478.2ZM1276.4,485.0 L1275.0,488.2 L1279.0,497.6 L1279.0,487.4ZM1279.0,497.6 L1276.0,499.9 L1275.0,510.8 L1280.2,501.1ZM1235.5,508.7 L1232.5,511.6 L1232.8,524.0 L1237.4,512.5ZM1232.8,524.0 L1232.5,526.6 L1237.6,532.3 L1235.2,525.1ZM1237.6,532.3 L1239.2,534.6 L1247.3,535.7 L1240.3,531.5ZM1296.5,525.3 L1293.1,527.5 L1291.0,539.2 L1297.5,529.2ZM1291.0,539.2 L1289.2,542.6 L1293.0,553.0 L1293.6,541.9ZM1293.0,553.0 L1293.1,555.4 L1298.6,560.0 L1295.4,553.6ZM1319.4,554.4 L1325.8,554.9 L1343.0,544.0 L1323.4,549.4ZM1525.0,538.0 L1521.4,541.0 L1520.8,554.7 L1526.7,542.3ZM1520.8,554.7 L1517.0,558.0 L1516.6,572.7 L1522.8,559.3ZM1516.6,572.7 L1512.7,575.5 L1511.0,589.3 L1518.0,577.2ZM1511.0,589.3 L1506.7,590.8 L1501.4,603.2 L1511.1,593.9ZM1501.4,603.2 L1497.3,604.4 L1491.7,615.6 L1501.2,607.5ZM1491.7,615.6 L1488.8,615.8 L1483.4,622.6 L1491.0,618.5ZM1448.7,614.2 L1445.3,616.4 L1443.2,628.1 L1449.7,618.1ZM1443.2,628.1 L1440.8,632.0 L1444.5,644.7 L1446.1,631.5ZM1444.5,644.7 L1445.7,647.5 L1454.2,650.3 L1447.5,644.4ZM1413.4,580.3 L1410.0,579.5 L1401.6,585.1 L1411.6,583.2ZM1401.6,585.1 L1399.2,586.2 L1396.7,593.5 L1401.9,587.7ZM1376.0,625.3 L1375.7,628.6 L1382.2,635.7 L1379.0,626.6ZM1382.2,635.7 L1385.3,637.3 L1394.7,633.7 L1384.6,633.3ZM1394.7,633.7 L1396.0,633.2 L1397.4,629.5 L1394.6,632.3ZM1550.2,638.3 L1546.1,640.6 L1543.0,653.8 L1551.1,642.9ZM1543.0,653.8 L1539.3,658.0 L1539.5,675.2 L1545.2,659.0ZM1582.3,663.3 L1585.0,664.0 L1591.8,659.7 L1583.8,661.0ZM1748.6,678.7 L1742.7,679.1 L1729.6,691.8 L1746.1,684.1ZM1729.6,691.8 L1722.6,693.3 L1705.9,709.6 L1726.2,698.1ZM1705.9,709.6 L1697.6,712.8 L1677.3,734.6 L1701.6,717.4ZM1650.0,716.7 L1646.3,720.1 L1646.4,734.6 L1652.1,721.2ZM1646.4,734.6 L1643.7,738.3 L1646.4,751.2 L1649.1,738.3ZM1646.4,751.2 L1648.2,754.2 L1658.3,756.0 L1649.8,750.4ZM1877.0,735.8 L1870.2,738.0 L1855.6,756.0 L1874.4,742.4ZM1855.6,756.0 L1848.4,758.5 L1831.8,777.3 L1852.4,762.9ZM1831.8,777.3 L1824.6,779.8 L1808.0,798.7 L1828.6,784.2ZM1808.0,798.7 L1801.2,801.3 L1786.7,820.0 L1805.4,805.5ZM1786.7,820.0 L1779.9,822.6 L1765.3,841.5 L1784.1,826.8ZM1765.3,841.5 L1760.3,843.1 L1753.4,857.0 L1765.1,846.7ZM1377.0,497.0 L1375.9,498.9 L1378.0,505.0 L1378.5,498.6Z" fill="#8a86a6" stroke="#f2e6ff" stroke-width="1" stroke-linejoin="round"/>
<path d="M858,34H1920V977H858Z M939,283V799H1857V283Z" fill="#000" fill-opacity="0.515" fill-rule="evenodd"/>
<rect x="937.5" y="281.5" width="920" height="518" fill="none" stroke="#000" stroke-width="1"/>
<rect x="938.5" y="282.5" width="918" height="516" fill="none" stroke="#000" stroke-width="1" stroke-dasharray="4,3"/>
<path d="M1832,799 L1920,842" stroke="#000" stroke-width="1.2" stroke-dasharray="3,4" fill="none"/>
<circle cx="1090" cy="631" r="12" fill="none" stroke="#fff" stroke-width="1.3"/>
<circle cx="1090" cy="631" r="12" fill="none" stroke="#d01818" stroke-width="1.3" stroke-dasharray="3.5,3.5"/>
<path d="M1064,631h19M1097,631h19M1090,605v19M1090,638v19" stroke="#000" stroke-width="1.3"/>
</g></svg>
<div class="a" style="left:10px;top:5px;width:39px;height:26px;background:linear-gradient(#6e6e6e,#626262);border:1px solid #b8b8b8;border-radius:5px 5px 5px 5px;"></div>
<svg width="22" height="22" viewBox="0 0 22 22" style="left:16px;top:8px"><circle cx="11" cy="11" r="9" fill="#4a6ab0" stroke="#111" stroke-width="1.8"/><circle cx="11" cy="11" r="7" fill="none" stroke="#9ab0e0" stroke-width="0.8"/><rect x="9" y="9.5" width="4" height="7" fill="#fff"/><rect x="8" y="15" width="6" height="2" fill="#fff"/><circle cx="11" cy="6.5" r="1.8" fill="#fff"/></svg>
<svg width="10" height="18" viewBox="0 0 10 18" style="left:37px;top:9px"><path d="M1,7.5 L5,1.5 L9,7.5Z M1,10.5 L5,16.5 L9,10.5Z" fill="#b4b4b4"/></svg>
<div class="t" style="left:63px;top:13.1px;font-size:14px;line-height:14px;color:#fff;">File</div>
<div class="t" style="left:106px;top:13.1px;font-size:14px;line-height:14px;color:#fff;">Render</div>
<div class="t" style="left:175.5px;top:13.1px;font-size:14px;line-height:14px;color:#fff;">Window</div>
<div class="t" style="left:250px;top:13.1px;font-size:14px;line-height:14px;color:#fff;">Help</div>
<div class="a" style="left:293px;top:5px;width:248px;height:26px;background:#6a6a6a;border:1px solid #bcbcbc;border-radius:5px 5px 5px 5px;"></div>
<div class="a" style="left:294px;top:6px;width:39px;height:24px;background:linear-gradient(#6e6e6e,#626262);border-radius:4px 0 0 4px"></div>
<div class="a" style="left:333px;top:6px;width:156px;height:24px;background:linear-gradient(#17140c,#2a2418);"></div>
<div class="a" style="left:489px;top:6px;width:51px;height:24px;background:linear-gradient(#222a44,#0c1222);border-radius:0 4px 4px 0"></div>
<div class="a" style="left:333px;top:6px;width:1px;height:24px;background:#c8c8c8;"></div>
<div class="a" style="left:489px;top:6px;width:1px;height:24px;background:#c8c8c8;"></div>
<div class="a" style="left:515px;top:6px;width:1px;height:24px;background:#9aa0b0;"></div>
<svg width="22" height="20" viewBox="0 0 22 20" style="left:299px;top:9px"><rect x="2" y="2" width="7" height="7" rx="1" fill="#ddd" stroke="#111" stroke-width="1.4"/><rect x="2" y="10" width="7" height="8" rx="1" fill="#ddd" stroke="#111" stroke-width="1.4"/><rect x="10" y="2" width="8" height="16" rx="1" fill="#ccc" stroke="#111" stroke-width="1.4"/><path d="M3,16H8M11,16H17" stroke="#333" stroke-width="1"/></svg>
<svg width="10" height="18" viewBox="0 0 10 18" style="left:322px;top:9px"><path d="M1,7.5 L5,1.5 L9,7.5Z M1,10.5 L5,16.5 L9,10.5Z" fill="#b4b4b4"/></svg>
<div class="t" style="left:342px;top:13.1px;font-size:14px;line-height:14px;color:#fff;">Default</div>
<svg width="16" height="16" viewBox="0 0 16 16" style="left:494px;top:10px"><path d="M8,2V14M2,8H14" stroke="#f2f2f2" stroke-width="3.2"/></svg>
<svg width="16" height="16" viewBox="0 0 16 16" style="left:520px;top:10px"><path d="M3,3L13,13M13,3L3,13" stroke="#f2f2f2" stroke-width="2.8"/></svg>
<div class="a" style="left:548px;top:5px;width:248px;height:26px;background:#6a6a6a;border:1px solid #bcbcbc;border-radius:5px 5px 5px 5px;"></div>
<div class="a" style="left:549px;top:6px;width:39px;height:24px;background:linear-gradient(#6e6e6e,#626262);border-radius:4px 0 0 4px"></div>
<div class="a" style="left:588px;top:6px;width:156px;height:24px;background:linear-gradient(#17140c,#2a2418);"></div>
<div class="a" style="left:744px;top:6px;width:51px;height:24px;background:linear-gradient(#222a44,#0c1222);border-radius:0 4px 4px 0"></div>
<div class="a" style="left:588px;top:6px;width:1px;height:24px;background:#c8c8c8;"></div>
<div class="a" style="left:744px;top:6px;width:1px;height:24px;background:#c8c8c8;"></div>
<div class="a" style="left:770px;top:6px;width:1px;height:24px;background:#9aa0b0;"></div>
<svg width="26" height="22" viewBox="0 0 26 22" style="left:553px;top:8px"><rect x="4" y="2" width="4" height="4" fill="#f0e070" stroke="#333" stroke-width="0.8"/><rect x="12" y="3" width="7" height="12" rx="3" fill="#6a9ae0" stroke="#222" stroke-width="1"/><circle cx="9" cy="15" r="5" fill="#eee" stroke="#111" stroke-width="1.2"/></svg>
<svg width="10" height="18" viewBox="0 0 10 18" style="left:577px;top:9px"><path d="M1,7.5 L5,1.5 L9,7.5Z M1,10.5 L5,16.5 L9,10.5Z" fill="#b4b4b4"/></svg>
<div class="t" style="left:597px;top:13.1px;font-size:14px;line-height:14px;color:#fff;">Empty</div>
<svg width="16" height="16" viewBox="0 0 16 16" style="left:749px;top:10px"><path d="M8,2V14M2,8H14" stroke="#f2f2f2" stroke-width="3.2"/></svg>
<svg width="16" height="16" viewBox="0 0 16 16" style="left:775px;top:10px"><path d="M3,3L13,13M13,3L3,13" stroke="#f2f2f2" stroke-width="2.8"/></svg>
<div class="a" style="left:816px;top:5px;width:138px;height:26px;background:linear-gradient(#727272,#5e5e5e);border:1px solid #bcbcbc;border-radius:5px 5px 5px 5px;"></div>
<div class="t" style="left:825.5px;top:13.1px;font-size:14px;line-height:14px;color:#fff;">Povray render</div>
<svg width="10" height="18" viewBox="0 0 10 18" style="left:941px;top:9px"><path d="M1,7.5 L5,1.5 L9,7.5Z M1,10.5 L5,16.5 L9,10.5Z" fill="#b4b4b4"/></svg>
<svg width="26" height="22" viewBox="0 0 26 22" style="left:974px;top:7px"><path d="M3,16 L10,9 L8,7 L13,5 L18,5 C23,6 25,11 23,15 C21,19 15,20 11,18 C9,17 8,15 8,14 L4,18Z" fill="#f08a20" stroke="#3a2a10" stroke-width="1"/><circle cx="16" cy="12" r="4.2" fill="#fff"/><circle cx="16" cy="12" r="2.6" fill="#2a5ab0"/></svg>
<div class="t" style="left:1008.5px;top:13.0px;font-size:14.2px;line-height:14.2px;color:#fff;">v2.76 | Verts:9,606 | Faces:9,280 | Tris:18,560 | Objects:1/5 | Lamps:0/1 | Mem:43.65M | Armature</div>
<svg width="16" height="16" viewBox="0 0 16 16" style="left:1904px;top:1px"><path d="M0,0L15,15M5,0L15,10M10,0L15,5" stroke="#ccc" stroke-width="0.9"/><path d="M1,0L16,15M6,0L16,10M11,0L16,5" stroke="#000" stroke-width="0.9"/></svg>
<svg width="16" height="16" viewBox="0 0 16 16" style="left:1904px;top:34px"><path d="M0,0L15,15M5,0L15,10M10,0L15,5" stroke="#ccc" stroke-width="0.9"/><path d="M1,0L16,15M6,0L16,10M11,0L16,5" stroke="#000" stroke-width="0.9"/></svg>
<svg width="16" height="16" viewBox="0 0 16 16" style="left:840px;top:34px"><path d="M0,0L15,15M5,0L15,10M10,0L15,5" stroke="#ccc" stroke-width="0.9"/><path d="M1,0L16,15M6,0L16,10M11,0L16,5" stroke="#000" stroke-width="0.9"/></svg>
<svg width="16" height="16" viewBox="0 0 16 16" style="left:0px;top:18px"><path d="M0,0L15,15M0,5L10,15M0,10L5,15" stroke="#ccc" stroke-width="0.9"/><path d="M0,1L14,15M0,6L9,15M0,11L4,15" stroke="#000" stroke-width="0.9"/></svg>
<svg width="16" height="16" viewBox="0 0 16 16" style="left:0px;top:494px"><path d="M0,0L15,15M0,5L10,15M0,10L5,15" stroke="#ccc" stroke-width="0.9"/><path d="M0,1L14,15M0,6L9,15M0,11L4,15" stroke="#000" stroke-width="0.9"/></svg>
<svg width="16" height="16" viewBox="0 0 16 16" style="left:0px;top:995px"><path d="M0,0L15,15M0,5L10,15M0,10L5,15" stroke="#ccc" stroke-width="0.9"/><path d="M0,1L14,15M0,6L9,15M0,11L4,15" stroke="#000" stroke-width="0.9"/></svg>
<svg width="16" height="16" viewBox="0 0 16 16" style="left:858px;top:995px"><path d="M0,0L15,15M0,5L10,15M0,10L5,15" stroke="#ccc" stroke-width="0.9"/><path d="M0,1L14,15M0,6L9,15M0,11L4,15" stroke="#000" stroke-width="0.9"/></svg>
<div class="t" style="left:15px;top:41.2px;font-size:13.9px;line-height:13.9px;color:#fff;">Frame:1 | Time:00:03.24 | Mem:21.10M (0.00M, Peak 40.86M)</div>
<div class="a" style="left:1px;top:62px;width:17px;height:19px;background:#333;border-radius:3px"></div>
<svg width="17" height="19" viewBox="0 0 17 19" style="left:1px;top:62px"><path d="M8.5,5V15M3.5,10H13.5" stroke="#8a8a8a" stroke-width="2.2"/></svg>
<div class="a" style="left:838px;top:62px;width:17px;height:19px;background:#333;border-radius:3px"></div>
<svg width="17" height="19" viewBox="0 0 17 19" style="left:838px;top:62px"><path d="M8.5,5V15M3.5,10H13.5" stroke="#8a8a8a" stroke-width="2.2"/></svg>
<div class="a" style="left:858px;top:62px;width:17px;height:19px;background:#333;border-radius:3px"></div>
<svg width="17" height="19" viewBox="0 0 17 19" style="left:858px;top:62px"><path d="M8.5,5V15M3.5,10H13.5" stroke="#8a8a8a" stroke-width="2.2"/></svg>
<div class="a" style="left:1902px;top:62px;width:17px;height:19px;background:#333;border-radius:3px"></div>
<svg width="17" height="19" viewBox="0 0 17 19" style="left:1902px;top:62px"><path d="M8.5,5V15M3.5,10H13.5" stroke="#8a8a8a" stroke-width="2.2"/></svg>
<div class="a" style="left:10px;top:481px;width:38px;height:26px;background:linear-gradient(#6e6e6e,#626262);border:1px solid #c0c0c0;border-radius:5px 5px 5px 5px;"></div>
<svg width="21" height="18" viewBox="0 0 21 18" style="left:14px;top:485px"><rect x="1.5" y="1.5" width="18" height="15" rx="2" fill="#eee" stroke="#111" stroke-width="1.6"/><rect x="3" y="3" width="15" height="6.7" fill="#e8a8a8"/><rect x="3" y="9.7" width="15" height="4.8" fill="#8a86b8"/><path d="M3,9.7 Q5.7,5.1 9.5,9.4 T18,9.1 V10.7 H3Z" fill="#222"/><rect x="11.4" y="4.0" width="3" height="3" fill="#fff8c0"/></svg>
<svg width="10" height="18" viewBox="0 0 10 18" style="left:36px;top:485px"><path d="M1,7.5 L5,1.5 L9,7.5Z M1,10.5 L5,16.5 L9,10.5Z" fill="#b4b4b4"/></svg>
<div class="t" style="left:63.5px;top:489.1px;font-size:13.5px;line-height:13.5px;color:#fff;">View</div>
<div class="t" style="left:115px;top:489.1px;font-size:13.5px;line-height:13.5px;color:#fff;">Image</div>
<div class="a" style="left:170px;top:481px;width:331px;height:26px;background:#6a6a6a;border:1px solid #c0c0c0;border-radius:5px 5px 5px 5px;"></div>
<div class="a" style="left:171px;top:482px;width:39px;height:24px;background:linear-gradient(#6e6e6e,#626262);border-radius:4px 0 0 4px"></div>
<div class="a" style="left:210px;top:482px;width:156px;height:24px;background:linear-gradient(#17140c,#2a2418);"></div>
<div class="a" style="left:366px;top:482px;width:31px;height:24px;background:linear-gradient(#222a44,#0c1222);"></div>
<div class="a" style="left:397px;top:482px;width:26px;height:24px;background:linear-gradient(#8e8e8e,#7c7c7c);"></div>
<div class="a" style="left:423px;top:482px;width:77px;height:24px;background:linear-gradient(#222a44,#0c1222);border-radius:0 4px 4px 0"></div>
<div class="a" style="left:210px;top:482px;width:1px;height:24px;background:#b0b0b0;"></div>
<div class="a" style="left:366px;top:482px;width:1px;height:24px;background:#b0b0b0;"></div>
<div class="a" style="left:397px;top:482px;width:1px;height:24px;background:#b0b0b0;"></div>
<div class="a" style="left:423px;top:482px;width:1px;height:24px;background:#b0b0b0;"></div>
<div class="a" style="left:449px;top:482px;width:1px;height:24px;background:#b0b0b0;"></div>
<div class="a" style="left:475px;top:482px;width:1px;height:24px;background:#b0b0b0;"></div>
<svg width="18" height="20" viewBox="0 0 18 20" style="left:176px;top:484px"><path d="M2,1.5 H12 L16,5.5 V18.5 H2Z" fill="#eee" stroke="#111" stroke-width="1.5"/><rect x="4" y="6" width="10" height="6" fill="#e8a8a8"/><rect x="4" y="12" width="10" height="4.5" fill="#8a86b8"/><path d="M4,12 Q7,10.5 9,12 T14,11.5 V13 H4Z" fill="#222"/><rect x="10" y="7.5" width="2.5" height="2.5" fill="#fff8c0"/></svg>
<svg width="10" height="18" viewBox="0 0 10 18" style="left:198px;top:485px"><path d="M1,7.5 L5,1.5 L9,7.5Z M1,10.5 L5,16.5 L9,10.5Z" fill="#b4b4b4"/></svg>
<div class="t" style="left:219px;top:488.8px;font-size:13.8px;line-height:13.8px;color:#fff;">Render Result</div>
<div class="t" style="left:181.5px;width:400px;text-align:center;top:488.8px;font-size:13.8px;line-height:13.8px;color:#fff;">2</div>
<div class="t" style="left:210px;width:400px;text-align:center;top:488.8px;font-size:13.8px;line-height:13.8px;color:#222;">F</div>
<svg width="16" height="16" viewBox="0 0 16 16" style="left:428px;top:486px"><path d="M8,2V14M2,8H14" stroke="#f2f2f2" stroke-width="3.2"/></svg>
<svg width="22" height="20" viewBox="0 0 22 20" style="left:451px;top:484px"><path d="M2,6 H8 L10,4 H20 V17 H2Z" fill="#d8d0a0" stroke="#222" stroke-width="1.3"/><rect x="10" y="2" width="8" height="7" fill="#eee" stroke="#333" stroke-width="1"/><path d="M2,9 H20 V17 H2Z" fill="#e6dcaa" stroke="#222" stroke-width="1.2"/></svg>
<svg width="16" height="16" viewBox="0 0 16 16" style="left:480px;top:486px"><path d="M3,3L13,13M13,3L3,13" stroke="#f2f2f2" stroke-width="2.8"/></svg>
<div class="a" style="left:508px;top:481px;width:80px;height:26px;background:linear-gradient(#727272,#5e5e5e);border:1px solid #c0c0c0;border-radius:5px 5px 5px 5px;"></div>
<svg width="18" height="20" viewBox="0 0 18 20" style="left:515px;top:484px"><path d="M2,1.5 H12 L16,5.5 V18.5 H2Z" fill="#eee" stroke="#111" stroke-width="1.5"/><rect x="4" y="6" width="10" height="6" fill="#e8a8a8"/><rect x="4" y="12" width="10" height="4.5" fill="#8a86b8"/><path d="M4,12 Q7,10.5 9,12 T14,11.5 V13 H4Z" fill="#222"/><rect x="10" y="7.5" width="2.5" height="2.5" fill="#fff8c0"/></svg>
<div class="t" style="left:538px;top:489.1px;font-size:13.5px;line-height:13.5px;color:#fff;">View</div>
<svg width="10" height="18" viewBox="0 0 10 18" style="left:577px;top:485px"><path d="M1,7.5 L5,1.5 L9,7.5Z M1,10.5 L5,16.5 L9,10.5Z" fill="#b4b4b4"/></svg>
<div class="a" style="left:595px;top:481px;width:44px;height:26px;background:linear-gradient(#727272,#5e5e5e);border:1px solid #c0c0c0;border-radius:5px 5px 5px 5px;"></div>
<svg width="22" height="20" viewBox="0 0 22 20" style="left:601px;top:484px"><path d="M3,7V3H7M15,3H19V7M19,13V17H15M7,17H3V13" stroke="#111" stroke-width="1.6" fill="none"/><rect x="7.5" y="6.5" width="7" height="7" rx="2" fill="#7aa0e0" stroke="#ddd" stroke-width="1"/></svg>
<svg width="10" height="18" viewBox="0 0 10 18" style="left:626px;top:485px"><path d="M1,7.5 L5,1.5 L9,7.5Z M1,10.5 L5,16.5 L9,10.5Z" fill="#b4b4b4"/></svg>
<div class="a" style="left:646px;top:481px;width:44px;height:26px;background:linear-gradient(#222a44,#0c1222);border:1px solid #c0c0c0;border-radius:5px 0px 0px 5px;"></div>
<div class="a" style="left:668px;top:482px;width:1px;height:24px;background:#b0b0b0;"></div>
<svg width="14" height="16" viewBox="0 0 14 16" style="left:651px;top:486px"><path d="M10,2L3,8L10,14Z" fill="#ddd"/></svg>
<svg width="14" height="16" viewBox="0 0 14 16" style="left:673px;top:486px"><path d="M4,2L11,8L4,14Z" fill="#ddd"/></svg>
<div class="a" style="left:690px;top:481px;width:84px;height:26px;background:linear-gradient(#727272,#5e5e5e);border:1px solid #c0c0c0;border-radius:0px 0px 0px 0px;"></div>
<div class="t" style="left:699.5px;top:488.8px;font-size:13.8px;line-height:13.8px;color:#fff;">Slot 1</div>
<svg width="10" height="18" viewBox="0 0 10 18" style="left:761px;top:485px"><path d="M1,7.5 L5,1.5 L9,7.5Z M1,10.5 L5,16.5 L9,10.5Z" fill="#b4b4b4"/></svg>
<div class="a" style="left:774px;top:481px;width:84px;height:26px;background:linear-gradient(#727272,#5e5e5e);border:1px solid #c0c0c0;border-radius:0px 0px 0px 0px;border-right:none"></div>
<div class="t" style="left:782px;top:488.8px;font-size:13.8px;line-height:13.8px;color:#fff;">RenderLaye</div>
<div class="a" style="left:856px;top:476px;width:2px;height:34px;background:#000;"></div>
<div class="a" style="left:11px;top:981px;width:39px;height:26px;background:linear-gradient(#6e6e6e,#626262);border:1px solid #c0c0c0;border-radius:5px 5px 5px 5px;"></div>
<svg width="20" height="22" viewBox="0 0 20 22" style="left:17px;top:983px"><path d="M10,2 L18,5.5 V15.5 L10,20 L2,15.5 V5.5Z" fill="#d8d8d8" stroke="#000" stroke-width="1.8" stroke-linejoin="round"/><path d="M10,9 L18,5.5 V15.5 L10,20Z" fill="#8a8a8a"/><path d="M10,2 L18,5.5 L10,9 L2,5.5Z" fill="#f0f0f0"/></svg>
<svg width="10" height="18" viewBox="0 0 10 18" style="left:38px;top:985px"><path d="M1,7.5 L5,1.5 L9,7.5Z M1,10.5 L5,16.5 L9,10.5Z" fill="#b4b4b4"/></svg>
<div class="t" style="left:64.5px;top:989.6px;font-size:13.5px;line-height:13.5px;color:#fff;">View</div>
<div class="t" style="left:116px;top:989.6px;font-size:13.5px;line-height:13.5px;color:#fff;">Select</div>
<div class="t" style="left:177.5px;top:989.6px;font-size:13.5px;line-height:13.5px;color:#fff;">Add</div>
<div class="t" style="left:226.5px;top:989.6px;font-size:13.5px;line-height:13.5px;color:#fff;">Object</div>
<div class="a" style="left:284px;top:981px;width:143px;height:26px;background:linear-gradient(#727272,#5e5e5e);border:1px solid #c0c0c0;border-radius:5px 5px 5px 5px;"></div>
<svg width="20" height="22" viewBox="0 0 20 22" style="left:290px;top:983px"><path d="M10,2 L18,5.5 V15.5 L10,20 L2,15.5 V5.5Z" fill="#f0b060" stroke="#000" stroke-width="1.8" stroke-linejoin="round"/><path d="M10,9 L18,5.5 V15.5 L10,20Z" fill="#b06020"/><path d="M10,2 L18,5.5 L10,9 L2,5.5Z" fill="#f8d0a0"/></svg>
<div class="t" style="left:313.75px;top:989.5px;font-size:13.6px;line-height:13.6px;color:#fff;">Object Mode</div>
<svg width="10" height="18" viewBox="0 0 10 18" style="left:415px;top:985px"><path d="M1,7.5 L5,1.5 L9,7.5Z M1,10.5 L5,16.5 L9,10.5Z" fill="#b4b4b4"/></svg>
<div class="a" style="left:433px;top:981px;width:45px;height:26px;background:linear-gradient(#727272,#5e5e5e);border:1px solid #c0c0c0;border-radius:5px 5px 5px 5px;"></div>
<svg width="20" height="20" viewBox="0 0 20 20" style="left:439px;top:984px"><defs><radialGradient id="sg449" cx="0.35" cy="0.3" r="0.8"><stop offset="0" stop-color="#fff"/><stop offset="0.6" stop-color="#ddd"/><stop offset="1" stop-color="#888"/></radialGradient></defs><circle cx="10" cy="10" r="8" fill="url(#sg449)" stroke="#111" stroke-width="1.8"/></svg>
<svg width="10" height="18" viewBox="0 0 10 18" style="left:466px;top:985px"><path d="M1,7.5 L5,1.5 L9,7.5Z M1,10.5 L5,16.5 L9,10.5Z" fill="#b4b4b4"/></svg>
<div class="a" style="left:484px;top:981px;width:71px;height:26px;background:linear-gradient(#727272,#5e5e5e);border:1px solid #c0c0c0;border-radius:5px 0px 0px 5px;"></div>
<svg width="24" height="22" viewBox="0 0 24 22" style="left:490px;top:983px"><circle cx="8" cy="8" r="6" fill="#eee" stroke="#111" stroke-width="1.3"/><circle cx="15" cy="15" r="6" fill="#eee" stroke="#111" stroke-width="1.3"/><rect x="9" y="9" width="5" height="5" fill="none" stroke="#3a6ad0" stroke-width="1.5"/></svg>
<svg width="10" height="18" viewBox="0 0 10 18" style="left:517px;top:985px"><path d="M1,7.5 L5,1.5 L9,7.5Z M1,10.5 L5,16.5 L9,10.5Z" fill="#b4b4b4"/></svg>
<div class="a" style="left:529px;top:982px;width:25px;height:24px;background:linear-gradient(#8a3020,#6a2010);border-radius:0 4px 4px 0"></div>
<svg width="22" height="18" viewBox="0 0 22 18" style="left:531px;top:985px"><path d="M3,11H19M3,11L7,7M3,11L7,15M19,11L15,7M19,11L15,15" stroke="#fff" stroke-width="1.8" fill="none"/><rect x="5" y="2" width="3" height="3" fill="#b8c8ff"/><rect x="10" y="2" width="3" height="3" fill="#b8c8ff"/><rect x="15" y="2" width="3" height="3" fill="#b8c8ff"/></svg>
<div class="a" style="left:561px;top:981px;width:192px;height:26px;background:linear-gradient(#727272,#5e5e5e);border:1px solid #c0c0c0;border-radius:5px 5px 5px 5px;"></div>
<div class="a" style="left:587px;top:982px;width:26px;height:24px;background:linear-gradient(#1c2a1c,#0a140a);"></div>
<div class="a" style="left:613px;top:982px;width:26px;height:24px;background:linear-gradient(#141a30,#080c18);"></div>
<div class="a" style="left:639px;top:982px;width:26px;height:24px;background:linear-gradient(#141a30,#080c18);"></div>
<div class="a" style="left:587px;top:982px;width:1px;height:24px;background:#b0b0b0;"></div>
<div class="a" style="left:613px;top:982px;width:1px;height:24px;background:#b0b0b0;"></div>
<div class="a" style="left:639px;top:982px;width:1px;height:24px;background:#b0b0b0;"></div>
<div class="a" style="left:665px;top:982px;width:1px;height:24px;background:#b0b0b0;"></div>
<svg width="22" height="22" viewBox="0 0 22 22" style="left:564px;top:983px"><path d="M11,12V2" stroke="#4a6ae0" stroke-width="2"/><path d="M11,12L3,18" stroke="#e03030" stroke-width="2"/><path d="M11,12L19,18" stroke="#40c040" stroke-width="2"/><circle cx="11" cy="12" r="1.5" fill="#ddd"/></svg>
<svg width="22" height="22" viewBox="0 0 22 22" style="left:590px;top:983px"><path d="M4,19L16,7" stroke="#222" stroke-width="4"/><path d="M4,19L16,7" stroke="#6aa0f0" stroke-width="2.4"/><path d="M11,5L18,4L17,11Z" fill="#6aa0f0" stroke="#222" stroke-width="0.8"/></svg>
<svg width="22" height="22" viewBox="0 0 22 22" style="left:616px;top:983px"><path d="M4,19C5,11 10,6 18,5" stroke="#222" stroke-width="4" fill="none"/><path d="M4,19C5,11 10,6 18,5" stroke="#4a70b8" stroke-width="2.2" fill="none"/></svg>
<svg width="22" height="22" viewBox="0 0 22 22" style="left:642px;top:983px"><path d="M4,19L12,11" stroke="#222" stroke-width="4"/><path d="M4,19L12,11" stroke="#4a70b8" stroke-width="2.2"/><rect x="10" y="3" width="8" height="8" fill="#4a70b8" stroke="#222" stroke-width="1"/></svg>
<div class="t" style="left:674px;top:989.5px;font-size:13.6px;line-height:13.6px;color:#fff;">Global</div>
<svg width="10" height="18" viewBox="0 0 10 18" style="left:740px;top:985px"><path d="M1,7.5 L5,1.5 L9,7.5Z M1,10.5 L5,16.5 L9,10.5Z" fill="#b4b4b4"/></svg>
<div class="a" style="left:759px;top:981px;width:65px;height:26px;background:linear-gradient(#8a8a8a,#7a7a7a);border:1px solid #c0c0c0;border-radius:5px 5px 5px 5px;"></div>
<svg width="65" height="26" viewBox="0 0 65 26" style="left:759px;top:981px"><path d="M13.0,1V25" stroke="#e0e0e0" stroke-width="1.3"/><path d="M26.0,1V25" stroke="#e0e0e0" stroke-width="1.3"/><path d="M39.0,1V25" stroke="#e0e0e0" stroke-width="1.3"/><path d="M52.0,1V25" stroke="#e0e0e0" stroke-width="1.3"/><path d="M1,13.0H64" stroke="#e0e0e0" stroke-width="1.3"/><circle cx="6.5" cy="7.0" r="3.5" fill="#f0a040" stroke="#333" stroke-width="1"/></svg>
<div class="a" style="left:830px;top:981px;width:26px;height:26px;background:linear-gradient(#8a8a8a,#7a7a7a);border:1px solid #c0c0c0;border-right:none;border-radius:5px 0 0 5px"></div>
<svg width="26" height="26" viewBox="0 0 26 26" style="left:830px;top:981px"><path d="M13,1V25M1,13H26" stroke="#e0e0e0" stroke-width="1.3"/></svg>
<div class="a" style="left:868px;top:981px;width:39px;height:26px;background:linear-gradient(#6e6e6e,#626262);border:1px solid #c0c0c0;border-radius:5px 5px 5px 5px;"></div>
<svg width="20" height="22" viewBox="0 0 20 22" style="left:874px;top:983px"><path d="M10,2 L18,5.5 V15.5 L10,20 L2,15.5 V5.5Z" fill="#d8d8d8" stroke="#000" stroke-width="1.8" stroke-linejoin="round"/><path d="M10,9 L18,5.5 V15.5 L10,20Z" fill="#8a8a8a"/><path d="M10,2 L18,5.5 L10,9 L2,5.5Z" fill="#f0f0f0"/></svg>
<svg width="10" height="18" viewBox="0 0 10 18" style="left:895px;top:985px"><path d="M1,7.5 L5,1.5 L9,7.5Z M1,10.5 L5,16.5 L9,10.5Z" fill="#b4b4b4"/></svg>
<div class="t" style="left:921.5px;top:989.6px;font-size:13.5px;line-height:13.5px;color:#fff;">View</div>
<div class="t" style="left:973px;top:989.6px;font-size:13.5px;line-height:13.5px;color:#fff;">Select</div>
<div class="t" style="left:1034.5px;top:989.6px;font-size:13.5px;line-height:13.5px;color:#fff;">Add</div>
<div class="t" style="left:1083.5px;top:989.6px;font-size:13.5px;line-height:13.5px;color:#fff;">Object</div>
<div class="a" style="left:1140px;top:981px;width:143px;height:26px;background:linear-gradient(#727272,#5e5e5e);border:1px solid #c0c0c0;border-radius:5px 5px 5px 5px;"></div>
<svg width="20" height="22" viewBox="0 0 20 22" style="left:1146px;top:983px"><path d="M10,2 L18,5.5 V15.5 L10,20 L2,15.5 V5.5Z" fill="#f0b060" stroke="#000" stroke-width="1.8" stroke-linejoin="round"/><path d="M10,9 L18,5.5 V15.5 L10,20Z" fill="#b06020"/><path d="M10,2 L18,5.5 L10,9 L2,5.5Z" fill="#f8d0a0"/></svg>
<div class="t" style="left:1169.7px;top:989.5px;font-size:13.6px;line-height:13.6px;color:#fff;">Object Mode</div>
<svg width="10" height="18" viewBox="0 0 10 18" style="left:1271px;top:985px"><path d="M1,7.5 L5,1.5 L9,7.5Z M1,10.5 L5,16.5 L9,10.5Z" fill="#b4b4b4"/></svg>
<div class="a" style="left:1289px;top:981px;width:45px;height:26px;background:linear-gradient(#727272,#5e5e5e);border:1px solid #c0c0c0;border-radius:5px 5px 5px 5px;"></div>
<svg width="20" height="20" viewBox="0 0 20 20" style="left:1295px;top:984px"><defs><radialGradient id="sg1305" cx="0.35" cy="0.3" r="0.8"><stop offset="0" stop-color="#fff"/><stop offset="0.6" stop-color="#ddd"/><stop offset="1" stop-color="#888"/></radialGradient></defs><circle cx="10" cy="10" r="8" fill="url(#sg1305)" stroke="#111" stroke-width="1.8"/></svg>
<svg width="10" height="18" viewBox="0 0 10 18" style="left:1322px;top:985px"><path d="M1,7.5 L5,1.5 L9,7.5Z M1,10.5 L5,16.5 L9,10.5Z" fill="#b4b4b4"/></svg>
<div class="a" style="left:1340px;top:981px;width:70px;height:26px;background:linear-gradient(#727272,#5e5e5e);border:1px solid #c0c0c0;border-radius:5px 5px 5px 5px;"></div>
<svg width="24" height="22" viewBox="0 0 24 22" style="left:1346px;top:983px"><circle cx="8" cy="8" r="6" fill="#eee" stroke="#111" stroke-width="1.3"/><circle cx="15" cy="15" r="6" fill="#eee" stroke="#111" stroke-width="1.3"/><rect x="9" y="9" width="5" height="5" fill="none" stroke="#3a6ad0" stroke-width="1.5"/></svg>
<svg width="10" height="18" viewBox="0 0 10 18" style="left:1372px;top:985px"><path d="M1,7.5 L5,1.5 L9,7.5Z M1,10.5 L5,16.5 L9,10.5Z" fill="#b4b4b4"/></svg>
<div class="a" style="left:1384px;top:982px;width:25px;height:24px;background:linear-gradient(#8a3020,#6a2010);border-radius:0 4px 4px 0"></div>
<svg width="22" height="18" viewBox="0 0 22 18" style="left:1386px;top:985px"><path d="M3,11H19M3,11L7,7M3,11L7,15M19,11L15,7M19,11L15,15" stroke="#fff" stroke-width="1.8" fill="none"/><rect x="5" y="2" width="3" height="3" fill="#b8c8ff"/><rect x="10" y="2" width="3" height="3" fill="#b8c8ff"/><rect x="15" y="2" width="3" height="3" fill="#b8c8ff"/></svg>
<div class="a" style="left:1416px;top:981px;width:192px;height:26px;background:linear-gradient(#727272,#5e5e5e);border:1px solid #c0c0c0;border-radius:5px 5px 5px 5px;"></div>
<div class="a" style="left:1442px;top:982px;width:26px;height:24px;background:linear-gradient(#1c2a1c,#0a140a);"></div>
<div class="a" style="left:1468px;top:982px;width:26px;height:24px;background:linear-gradient(#141a30,#080c18);"></div>
<div class="a" style="left:1494px;top:982px;width:26px;height:24px;background:linear-gradient(#141a30,#080c18);"></div>
<div class="a" style="left:1442px;top:982px;width:1px;height:24px;background:#b0b0b0;"></div>
<div class="a" style="left:1468px;top:982px;width:1px;height:24px;background:#b0b0b0;"></div>
<div class="a" style="left:1494px;top:982px;width:1px;height:24px;background:#b0b0b0;"></div>
<div class="a" style="left:1520px;top:982px;width:1px;height:24px;background:#b0b0b0;"></div>
<svg width="22" height="22" viewBox="0 0 22 22" style="left:1419px;top:983px"><path d="M11,12V2" stroke="#4a6ae0" stroke-width="2"/><path d="M11,12L3,18" stroke="#e03030" stroke-width="2"/><path d="M11,12L19,18" stroke="#40c040" stroke-width="2"/><circle cx="11" cy="12" r="1.5" fill="#ddd"/></svg>
<svg width="22" height="22" viewBox="0 0 22 22" style="left:1445px;top:983px"><path d="M4,19L16,7" stroke="#222" stroke-width="4"/><path d="M4,19L16,7" stroke="#6aa0f0" stroke-width="2.4"/><path d="M11,5L18,4L17,11Z" fill="#6aa0f0" stroke="#222" stroke-width="0.8"/></svg>
<svg width="22" height="22" viewBox="0 0 22 22" style="left:1471px;top:983px"><path d="M4,19C5,11 10,6 18,5" stroke="#222" stroke-width="4" fill="none"/><path d="M4,19C5,11 10,6 18,5" stroke="#4a70b8" stroke-width="2.2" fill="none"/></svg>
<svg width="22" height="22" viewBox="0 0 22 22" style="left:1497px;top:983px"><path d="M4,19L12,11" stroke="#222" stroke-width="4"/><path d="M4,19L12,11" stroke="#4a70b8" stroke-width="2.2"/><rect x="10" y="3" width="8" height="8" fill="#4a70b8" stroke="#222" stroke-width="1"/></svg>
<div class="t" style="left:1529px;top:989.5px;font-size:13.6px;line-height:13.6px;color:#fff;">Global</div>
<svg width="10" height="18" viewBox="0 0 10 18" style="left:1595px;top:985px"><path d="M1,7.5 L5,1.5 L9,7.5Z M1,10.5 L5,16.5 L9,10.5Z" fill="#b4b4b4"/></svg>
<div class="a" style="left:1615px;top:981px;width:65px;height:26px;background:linear-gradient(#8a8a8a,#7a7a7a);border:1px solid #c0c0c0;border-radius:5px 5px 5px 5px;"></div>
<svg width="65" height="26" viewBox="0 0 65 26" style="left:1615px;top:981px"><path d="M13.0,1V25" stroke="#e0e0e0" stroke-width="1.3"/><path d="M26.0,1V25" stroke="#e0e0e0" stroke-width="1.3"/><path d="M39.0,1V25" stroke="#e0e0e0" stroke-width="1.3"/><path d="M52.0,1V25" stroke="#e0e0e0" stroke-width="1.3"/><path d="M1,13.0H64" stroke="#e0e0e0" stroke-width="1.3"/><circle cx="6.5" cy="7.0" r="3.5" fill="#f0a040" stroke="#333" stroke-width="1"/></svg>
<div class="a" style="left:1686px;top:981px;width:65px;height:26px;background:linear-gradient(#8a8a8a,#7a7a7a);border:1px solid #c0c0c0;border-radius:5px 5px 5px 5px;"></div>
<svg width="65" height="26" viewBox="0 0 65 26" style="left:1686px;top:981px"><path d="M13.0,1V25" stroke="#e0e0e0" stroke-width="1.3"/><path d="M26.0,1V25" stroke="#e0e0e0" stroke-width="1.3"/><path d="M39.0,1V25" stroke="#e0e0e0" stroke-width="1.3"/><path d="M52.0,1V25" stroke="#e0e0e0" stroke-width="1.3"/><path d="M1,13.0H64" stroke="#e0e0e0" stroke-width="1.3"/></svg>
<div class="a" style="left:1757px;top:981px;width:25px;height:26px;background:linear-gradient(#727272,#5e5e5e);border:1px solid #c0c0c0;border-radius:5px 5px 5px 5px;"></div>
<svg width="22" height="20" viewBox="0 0 22 20" style="left:1759px;top:984px"><rect x="3" y="3" width="12" height="13" rx="2" fill="#ccc" stroke="#222" stroke-width="1.2"/><path d="M13,10a3,3 0 1,1 0,6M16,12a3,3 0 1,1 0,6" stroke="#fff" stroke-width="1.6" fill="none"/></svg>
<div class="a" style="left:1789px;top:981px;width:26px;height:26px;background:linear-gradient(#8a3020,#6a2010);border:1px solid #c0c0c0;border-radius:5px 5px 5px 5px;"></div>
<svg width="20" height="20" viewBox="0 0 20 20" style="left:1792px;top:984px"><circle cx="10" cy="10" r="6.5" fill="#b88a80" stroke="#5a2a20" stroke-width="1.5"/><circle cx="10" cy="10" r="3.5" fill="none" stroke="#7a4a40" stroke-width="1"/></svg>
<div class="a" style="left:1821px;top:981px;width:97px;height:26px;background:linear-gradient(#727272,#5e5e5e);border:1px solid #c0c0c0;border-radius:5px 5px 5px 5px;"></div>
<div class="a" style="left:1822px;top:982px;width:24px;height:24px;background:linear-gradient(#8a3020,#6a2010);border-radius:4px 0 0 4px"></div>
<div class="a" style="left:1891px;top:982px;width:26px;height:24px;background:linear-gradient(#8a3020,#6a2010);border-radius:0 4px 4px 0"></div>
<svg width="20" height="20" viewBox="0 0 20 20" style="left:1824px;top:984px"><path d="M5,17C2,12 3,5 9,4C15,3 17,9 15,13L11,17" stroke="#222" stroke-width="4" fill="none"/><path d="M5,17C2,12 3,5 9,4C15,3 17,9 15,13L11,17" stroke="#e08a70" stroke-width="2.2" fill="none"/></svg>
<svg width="28" height="20" viewBox="0 0 28 20" style="left:1849px;top:984px"><path d="M3,4V16M25,4V16M3,10H25" stroke="#ddd" stroke-width="1.5"/><ellipse cx="14" cy="10" rx="4" ry="6" fill="#7aa0e0" stroke="#ddd" stroke-width="1"/></svg>
<svg width="10" height="18" viewBox="0 0 10 18" style="left:1879px;top:985px"><path d="M1,7.5 L5,1.5 L9,7.5Z M1,10.5 L5,16.5 L9,10.5Z" fill="#b4b4b4"/></svg>
<svg width="24" height="22" viewBox="0 0 24 22" style="left:1893px;top:983px"><path d="M2,14H22M8,8V22M16,8V22" stroke="#ddd" stroke-width="1.5"/><circle cx="9" cy="8" r="5" fill="#7aa0e0" stroke="#eee" stroke-width="1.2"/><circle cx="9" cy="8" r="2" fill="#fff"/></svg>
<div class="t" style="left:25px;top:525.1px;font-size:13.5px;line-height:13.5px;color:#fff;">Front Ortho</div>
<div class="a" style="left:1px;top:541px;width:16px;height:19px;background:rgba(90,90,40,0.85);border-radius:3px"></div>
<svg width="17" height="19" viewBox="0 0 17 19" style="left:1px;top:541px"><path d="M8.5,4.5V14.5M3.5,9.5H13.5" stroke="#b0b070" stroke-width="2.2"/></svg>
<div class="t" style="left:76.5px;top:952.6px;font-size:13.5px;line-height:13.5px;color:#fff;">(1) Armature</div>
<svg width="40" height="45" viewBox="0 0 40 45" style="left:18px;top:910px"><path d="M6,37V12" stroke="#2828b0" stroke-width="2"/><path d="M6,37H34" stroke="#d02020" stroke-width="2"/><text x="3" y="10" font-size="11" fill="#2828a0" font-family="Liberation Sans">z</text><text x="32" y="35" font-size="11" fill="#d03020" font-family="Liberation Sans">x</text></svg>
<svg width="60" height="35" viewBox="0 0 60 35" style="left:331px;top:941px"><circle cx="30" cy="22" r="12" fill="none" stroke="#fff" stroke-width="1.3"/><circle cx="30" cy="22" r="12" fill="none" stroke="#d01818" stroke-width="1.3" stroke-dasharray="3.5,3.5"/><path d="M4,22h19M37,22h19M30,0v15M30,29v15" stroke="#000" stroke-width="1.3"/></svg>
<svg width="26" height="26" viewBox="0 0 26 26" style="left:535px;top:755px"><circle cx="13" cy="13" r="8" fill="none" stroke="#111" stroke-width="1.2" stroke-dasharray="2.5,2"/><circle cx="13" cy="13" r="3.5" fill="#000"/></svg>
<div class="a" style="left:547px;top:778px;width:1px;height:198px;background:rgba(40,40,40,0.45);"></div>
<svg width="40" height="48" viewBox="0 0 40 48" style="left:598px;top:766px"><path d="M17,5L30,20H8Z" fill="#000"/><path d="M6,21H40M6,21L14,44H40M14,44L40,21" stroke="#000" stroke-width="1.3" fill="none"/></svg>
<svg width="16" height="48" viewBox="0 0 16 48" style="left:600px;top:928px"><path d="M8,10V48" stroke="#1a2ad0" stroke-width="2"/><path d="M8,2L3,16H13Z" fill="#1a2ad0"/></svg>
<div class="a" style="left:638px;top:510px;width:218px;height:467px;background:#111a13;"></div>
<div class="a" style="left:856px;top:510px;width:2px;height:467px;background:#000;"></div>
<div class="a" style="left:648px;top:510px;width:175px;height:419px;background:#0a0d18;border:1px solid #a8a8a8;border-top:none;border-radius:0 0 5px 5px"></div>
<div class="a" style="left:654px;top:518px;width:163px;height:25px;background:#000;border:1px solid #c8c8c8;border-radius:5px 5px 5px 5px;"></div>
<div class="a" style="left:655px;top:519px;width:79px;height:23px;background:linear-gradient(#141c10,#2e4224);border-radius:4px 0 0 4px"></div>
<div class="a" style="left:735px;top:519px;width:81px;height:23px;background:linear-gradient(#08081a,#1a1a38);border-radius:0 4px 4px 0"></div>
<div class="a" style="left:734px;top:519px;width:1px;height:23px;background:#c8c8c8;"></div>
<div class="t" style="left:494px;width:400px;text-align:center;top:526.0px;font-size:13.6px;line-height:13.6px;color:#fff;">Image</div>
<div class="t" style="left:575px;width:400px;text-align:center;top:526.0px;font-size:13.6px;line-height:13.6px;color:#fff;">Movie Clip</div>
<div class="a" style="left:654px;top:554px;width:163px;height:25px;background:#000;border:1px solid #c8c8c8;border-radius:5px 5px 5px 5px;"></div>
<div class="a" style="left:655px;top:555px;width:37px;height:23px;background:linear-gradient(#6e6e6e,#626262);border-radius:4px 0 0 4px"></div>
<div class="a" style="left:692px;top:555px;width:49px;height:23px;background:linear-gradient(#17140c,#2a2418);"></div>
<div class="a" style="left:741px;top:555px;width:25px;height:23px;background:linear-gradient(#8e8e8e,#7c7c7c);"></div>
<div class="a" style="left:766px;top:555px;width:50px;height:23px;background:linear-gradient(#222a44,#0c1222);border-radius:0 4px 4px 0"></div>
<div class="a" style="left:692px;top:555px;width:1px;height:23px;background:#b8b8b8;"></div>
<div class="a" style="left:741px;top:555px;width:1px;height:23px;background:#b8b8b8;"></div>
<div class="a" style="left:766px;top:555px;width:1px;height:23px;background:#b8b8b8;"></div>
<div class="a" style="left:790px;top:555px;width:1px;height:23px;background:#b8b8b8;"></div>
<svg width="18" height="20" viewBox="0 0 18 20" style="left:659px;top:556px"><path d="M2,1.5 H12 L16,5.5 V18.5 H2Z" fill="#eee" stroke="#111" stroke-width="1.5"/><rect x="4" y="6" width="10" height="6" fill="#e8a8a8"/><rect x="4" y="12" width="10" height="4.5" fill="#8a86b8"/><path d="M4,12 Q7,10.5 9,12 T14,11.5 V13 H4Z" fill="#222"/><rect x="10" y="7.5" width="2.5" height="2.5" fill="#fff8c0"/></svg>
<svg width="10" height="18" viewBox="0 0 10 18" style="left:680px;top:557px"><path d="M1,7.5 L5,1.5 L9,7.5Z M1,10.5 L5,16.5 L9,10.5Z" fill="#b4b4b4"/></svg>
<div class="t" style="left:516.5px;width:400px;text-align:center;top:561.0px;font-size:13.6px;line-height:13.6px;color:#fff;">цвет</div>
<div class="t" style="left:553.5px;width:400px;text-align:center;top:561.0px;font-size:13.6px;line-height:13.6px;color:#222;">F</div>
<svg width="22" height="20" viewBox="0 0 22 20" style="left:767px;top:556px"><path d="M2,6 H8 L10,4 H20 V17 H2Z" fill="#d8d0a0" stroke="#222" stroke-width="1.3"/><rect x="10" y="2" width="8" height="7" fill="#eee" stroke="#333" stroke-width="1"/><path d="M2,9 H20 V17 H2Z" fill="#e6dcaa" stroke="#222" stroke-width="1.2"/></svg>
<svg width="16" height="16" viewBox="0 0 16 16" style="left:795px;top:558px"><path d="M3,3L13,13M13,3L3,13" stroke="#f2f2f2" stroke-width="2.8"/></svg>
<div class="t" style="left:663.3px;top:597.5px;font-size:13.6px;line-height:13.6px;color:#fff;">Source</div>
<div class="a" style="left:716px;top:590px;width:101px;height:25px;background:linear-gradient(#7e7e7e,#5c5c5c);border:1px solid #c0c0c0;border-radius:5px 5px 5px 5px;"></div>
<div class="t" style="left:725px;top:597.5px;font-size:13.6px;line-height:13.6px;color:#fff;">Single Image</div>
<svg width="10" height="18" viewBox="0 0 10 18" style="left:803px;top:593px"><path d="M1,7.5 L5,1.5 L9,7.5Z M1,10.5 L5,16.5 L9,10.5Z" fill="#b4b4b4"/></svg>
<div class="a" style="left:654px;top:626px;width:163px;height:25px;background:#000;border:1px solid #c8c8c8;border-radius:5px 5px 5px 5px;"></div>
<div class="a" style="left:655px;top:627px;width:24px;height:23px;background:linear-gradient(#222a44,#0c1222);border-radius:4px 0 0 4px"></div>
<div class="a" style="left:679px;top:627px;width:85px;height:23px;background:linear-gradient(#17140c,#2a2418);"></div>
<div class="a" style="left:764px;top:627px;width:52px;height:23px;background:linear-gradient(#222a44,#0c1222);border-radius:0 4px 4px 0"></div>
<div class="a" style="left:679px;top:627px;width:1px;height:23px;background:#b8b8b8;"></div>
<div class="a" style="left:764px;top:627px;width:1px;height:23px;background:#b8b8b8;"></div>
<div class="a" style="left:790px;top:627px;width:1px;height:23px;background:#b8b8b8;"></div>
<svg width="20" height="18" viewBox="0 0 20 18" style="left:657px;top:630px"><path d="M2,8L10,4L18,8V13L10,17L2,13Z" fill="#e0d8a8" stroke="#222" stroke-width="1.2"/><path d="M5,9L10,7L15,9L10,11Z" fill="#5a4a2a"/></svg>
<div class="t" style="left:688.2px;top:633.5px;font-size:13.6px;line-height:13.6px;color:#fff;">/home/leo...</div>
<svg width="22" height="20" viewBox="0 0 22 20" style="left:766px;top:628px"><path d="M2,6 H8 L10,4 H20 V17 H2Z" fill="#d8d0a0" stroke="#222" stroke-width="1.3"/><rect x="10" y="2" width="8" height="7" fill="#eee" stroke="#333" stroke-width="1"/><path d="M2,9 H20 V17 H2Z" fill="#e6dcaa" stroke="#222" stroke-width="1.2"/></svg>
<svg width="22" height="20" viewBox="0 0 22 20" style="left:793px;top:629px"><path d="M4,9C4,5 8,3 12,3C14,3 16,4 17,5M18,11C18,15 14,17 10,17C8,17 6,16 5,15" stroke="#fff" stroke-width="2.6" fill="none"/><path d="M14,2L19,6L13,8Z M8,12L3,14L9,18Z" fill="#fff"/></svg>
<div class="t" style="left:663.3px;top:669.5px;font-size:13.6px;line-height:13.6px;color:#fff;">Color S</div>
<div class="a" style="left:716px;top:662px;width:101px;height:25px;background:linear-gradient(#7e7e7e,#5c5c5c);border:1px solid #c0c0c0;border-radius:5px 5px 5px 5px;"></div>
<div class="t" style="left:725px;top:669.5px;font-size:13.6px;line-height:13.6px;color:#fff;">sRGB</div>
<svg width="10" height="18" viewBox="0 0 10 18" style="left:803px;top:665px"><path d="M1,7.5 L5,1.5 L9,7.5Z M1,10.5 L5,16.5 L9,10.5Z" fill="#b4b4b4"/></svg>
<div class="a" style="left:658px;top:694px;width:18px;height:17px;background:linear-gradient(#3e3e22,#5a5a32);border:1px solid #b8b8a0;border-radius:4px 4px 4px 4px;"></div>
<div class="t" style="left:685.8px;top:697.4px;font-size:13.2px;line-height:13.2px;color:#fff;">View as Render</div>
<div class="a" style="left:654px;top:725px;width:163px;height:26px;background:linear-gradient(#0a0a22,#1c1c4a);border:1px solid #c8c8c8;border-radius:12px 12px 12px 12px;"></div>
<div class="t" style="left:672.5px;top:734.2px;font-size:13.6px;line-height:13.6px;color:#fff;">Opacity:</div>
<div class="t" style="left:397px;width:400px;text-align:right;top:734.2px;font-size:13.6px;line-height:13.6px;color:#fff;">1.000</div>
<div class="a" style="left:654px;top:754px;width:163px;height:25px;background:#000;border:1px solid #c8c8c8;border-radius:5px 5px 5px 5px;"></div>
<div class="a" style="left:655px;top:755px;width:79px;height:23px;background:linear-gradient(#141c10,#2e4224);border-radius:4px 0 0 4px"></div>
<div class="a" style="left:735px;top:755px;width:81px;height:23px;background:linear-gradient(#08081a,#1a1a38);border-radius:0 4px 4px 0"></div>
<div class="a" style="left:734px;top:755px;width:1px;height:23px;background:#c8c8c8;"></div>
<div class="t" style="left:494px;width:400px;text-align:center;top:761.3px;font-size:13.6px;line-height:13.6px;color:#fff;">Back</div>
<div class="t" style="left:575px;width:400px;text-align:center;top:761.3px;font-size:13.6px;line-height:13.6px;color:#fff;">Front</div>
<div class="a" style="left:654px;top:782px;width:163px;height:25px;background:#000;border:1px solid #c8c8c8;border-radius:5px 5px 5px 5px;"></div>
<div class="a" style="left:655px;top:783px;width:52px;height:23px;background:linear-gradient(#141c10,#2e4224);border-radius:4px 0 0 4px"></div>
<div class="a" style="left:708px;top:783px;width:53px;height:23px;background:linear-gradient(#08081a,#1a1a38);"></div>
<div class="a" style="left:762px;top:783px;width:54px;height:23px;background:linear-gradient(#08081a,#1a1a38);border-radius:0 4px 4px 0"></div>
<div class="a" style="left:707px;top:783px;width:1px;height:23px;background:#c8c8c8;"></div>
<div class="a" style="left:761px;top:783px;width:1px;height:23px;background:#c8c8c8;"></div>
<div class="t" style="left:480.5px;width:400px;text-align:center;top:789.5px;font-size:13.6px;line-height:13.6px;color:#fff;">Stretch</div>
<div class="t" style="left:533.5px;width:400px;text-align:center;top:789.5px;font-size:13.6px;line-height:13.6px;color:#fff;">Fit</div>
<div class="t" style="left:588.5px;width:400px;text-align:center;top:789.5px;font-size:13.6px;line-height:13.6px;color:#fff;">Crop</div>
<div class="a" style="left:654px;top:810px;width:163px;height:113px;background:transparent;border:1px solid #8a8a96;border-radius:5px 5px 5px 5px;"></div>
<div class="a" style="left:660px;top:819px;width:70px;height:26px;background:linear-gradient(#1c1018,#3a2a36);border:1px solid #b8b0b8;border-radius:12px 12px 12px 12px;"></div>
<svg width="8" height="12" viewBox="0 0 8 12" style="left:665px;top:826px"><path d="M6,1L1,6L6,11Z" fill="#5a4a56"/></svg>
<svg width="8" height="12" viewBox="0 0 8 12" style="left:717px;top:826px"><path d="M2,1L7,6L2,11Z" fill="#5a4a56"/></svg>
<div class="t" style="left:495.0px;width:400px;text-align:center;top:826.9px;font-size:13.6px;line-height:13.6px;color:#fff;">0.10</div>
<div class="a" style="left:740px;top:819px;width:71px;height:26px;background:linear-gradient(#1c1018,#3a2a36);border:1px solid #b8b0b8;border-radius:12px 12px 12px 12px;"></div>
<svg width="8" height="12" viewBox="0 0 8 12" style="left:745px;top:826px"><path d="M6,1L1,6L6,11Z" fill="#5a4a56"/></svg>
<svg width="8" height="12" viewBox="0 0 8 12" style="left:798px;top:826px"><path d="M2,1L7,6L2,11Z" fill="#5a4a56"/></svg>
<div class="t" style="left:575.5px;width:400px;text-align:center;top:826.9px;font-size:13.6px;line-height:13.6px;color:#fff;">8.00</div>
<div class="a" style="left:660px;top:891px;width:70px;height:26px;background:linear-gradient(#1c1018,#3a2a36);border:1px solid #b8b0b8;border-radius:12px 12px 12px 12px;"></div>
<svg width="8" height="12" viewBox="0 0 8 12" style="left:665px;top:898px"><path d="M6,1L1,6L6,11Z" fill="#5a4a56"/></svg>
<svg width="8" height="12" viewBox="0 0 8 12" style="left:717px;top:898px"><path d="M2,1L7,6L2,11Z" fill="#5a4a56"/></svg>
<div class="t" style="left:495.0px;width:400px;text-align:center;top:898.9px;font-size:13.6px;line-height:13.6px;color:#fff;">: 0°</div>
<div class="a" style="left:740px;top:891px;width:71px;height:26px;background:linear-gradient(#1c1018,#3a2a36);border:1px solid #b8b0b8;border-radius:12px 12px 12px 12px;"></div>
<svg width="8" height="12" viewBox="0 0 8 12" style="left:745px;top:898px"><path d="M6,1L1,6L6,11Z" fill="#5a4a56"/></svg>
<svg width="8" height="12" viewBox="0 0 8 12" style="left:798px;top:898px"><path d="M2,1L7,6L2,11Z" fill="#5a4a56"/></svg>
<div class="t" style="left:575.5px;width:400px;text-align:center;top:898.9px;font-size:13.6px;line-height:13.6px;color:#fff;">34.5</div>
<div class="a" style="left:665px;top:859px;width:17px;height:18px;background:linear-gradient(#3e3e22,#5a5a32);border:1px solid #a8a890;border-radius:4px 4px 4px 4px;"></div>
<div class="t" style="left:691px;top:862.9px;font-size:13.6px;line-height:13.6px;color:#fff;">Flip H</div>
<div class="a" style="left:744px;top:859px;width:18px;height:18px;background:linear-gradient(#3e3e22,#5a5a32);border:1px solid #a8a890;border-radius:4px 4px 4px 4px;"></div>
<div class="t" style="left:771px;top:862.9px;font-size:13.6px;line-height:13.6px;color:#fff;">Flip V</div>
<div class="a" style="left:638px;top:939px;width:195px;height:38px;background:#282828;"></div>
<svg width="14" height="14" viewBox="0 0 14 14" style="left:651px;top:947px"><path d="M2,1L12,7L2,13Z" fill="#cfcfcf"/></svg>
<div class="t" style="left:669.5px;top:947.2px;font-size:16px;line-height:16px;color:#fff;">Transform Orientations</div>
<div class="a" style="left:833px;top:516px;width:18px;height:456px;background:#3c3c3c;border:1px solid #9a9a9a;border-radius:9px 9px 9px 9px;"></div>
<div class="a" style="left:833px;top:859px;width:18px;height:92px;background:linear-gradient(90deg,#8a8a8a,#a8a8a8,#8e8e8e);border:1px solid #c0c0c0;border-radius:9px 9px 9px 9px;"></div>
<div class="t" style="left:882.5px;top:50.1px;font-size:12.9px;line-height:12.9px;color:#fff;">Camera Persp</div>
<div class="t" style="left:933.5px;top:952.6px;font-size:13.5px;line-height:13.5px;color:#fff;">(1) Armature</div>
<svg width="45" height="50" viewBox="0 0 45 50" style="left:875px;top:912px"><path d="M8,38V15" stroke="#2020e0" stroke-width="2"/><path d="M8,38L27,29" stroke="#20c020" stroke-width="2.4"/><path d="M8,38L26,46" stroke="#c01818" stroke-width="2.4"/><text x="4" y="12" font-size="10" fill="#2a2ad0" font-family="Liberation Sans">z</text><text x="26" y="28" font-size="10" fill="#30b030" font-family="Liberation Sans">y</text><text x="28" y="44" font-size="10" fill="#a02020" font-family="Liberation Sans">x</text></svg>
</body></html>
